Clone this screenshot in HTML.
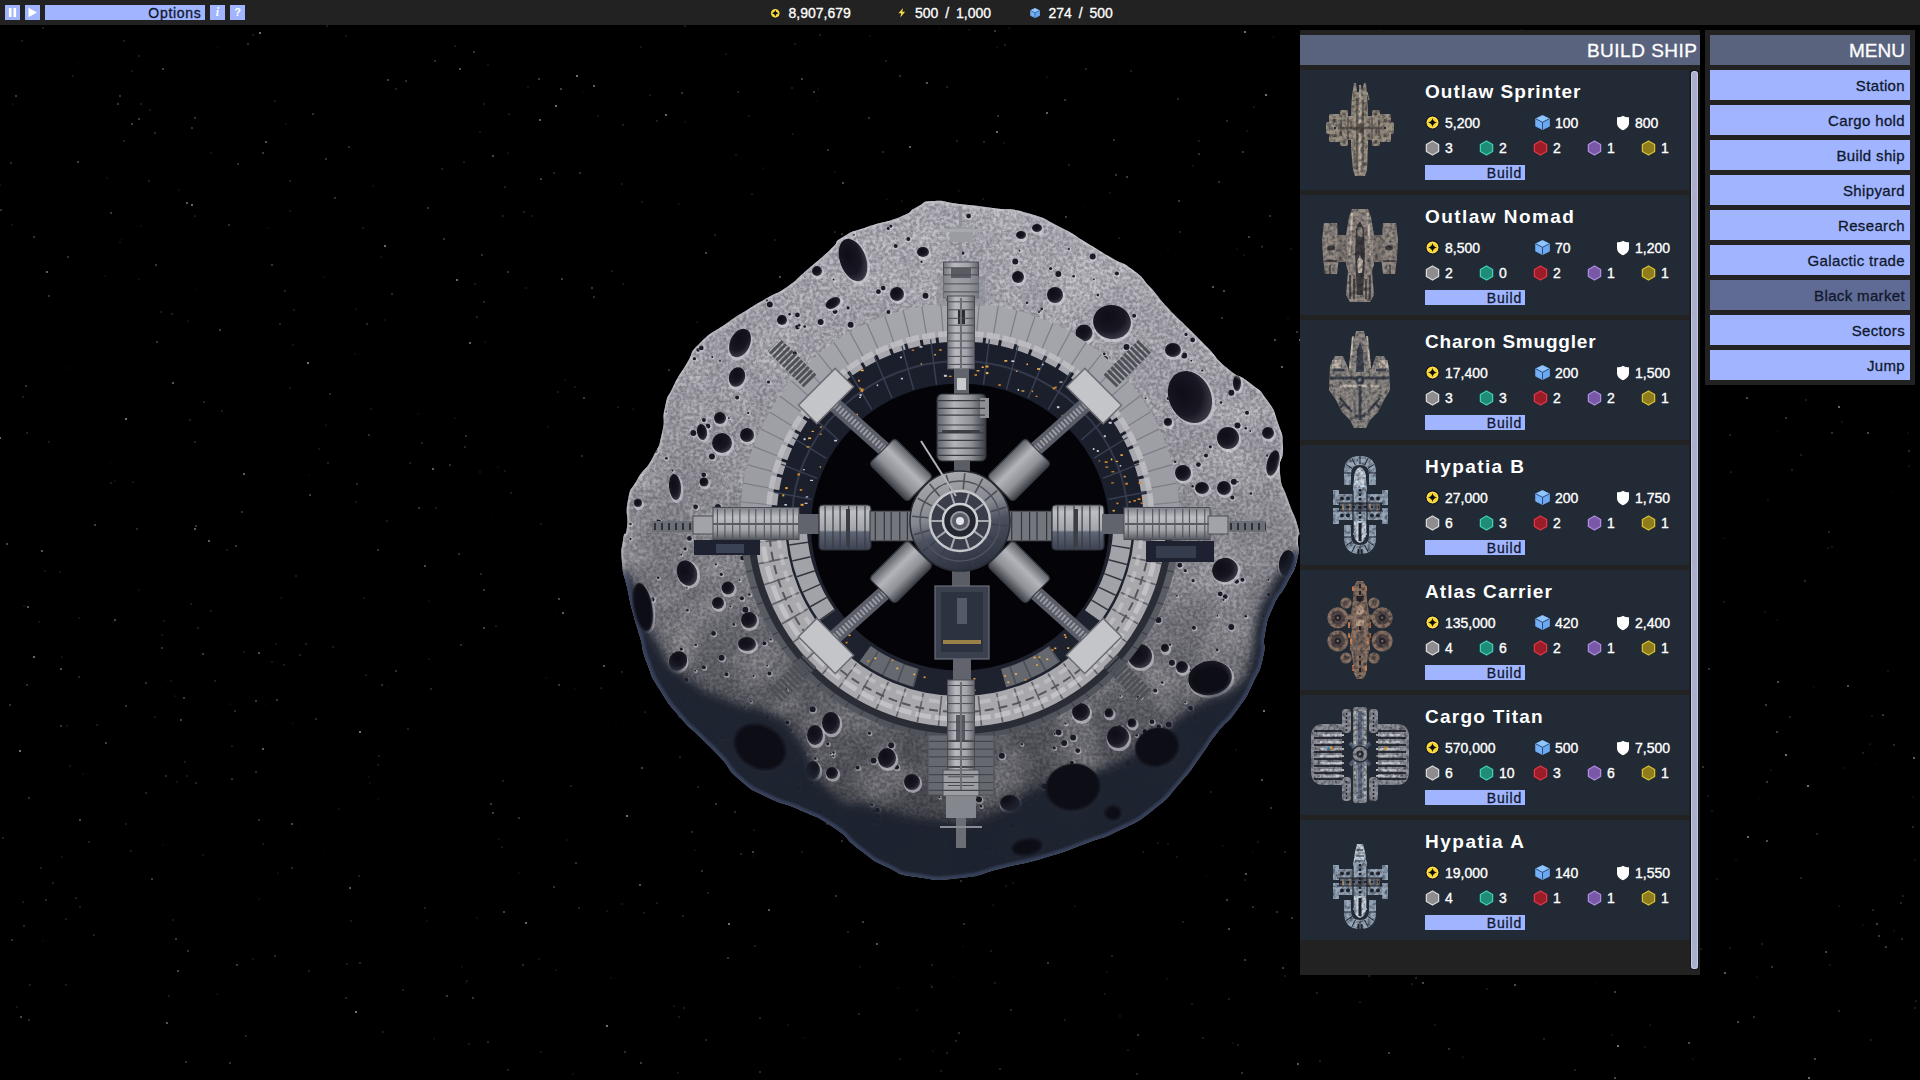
<!DOCTYPE html>
<html lang="en"><head><meta charset="utf-8"><title>Build ship</title><style>
*{box-sizing:border-box;margin:0;padding:0}
html,body{width:1920px;height:1080px;overflow:hidden;background:#000}
body{position:relative;font-family:"Liberation Sans",sans-serif;color:#fff}
#bg{position:absolute;left:0;top:0;width:1920px;height:1080px}
#top{position:absolute;left:0;top:0;width:1920px;height:25px;background:#222}
.tb{position:absolute;top:5px;height:15px;background:#a0b4ff;color:#10182c}
.res{position:absolute;top:0;height:25px;line-height:27px;font-size:14px;color:#fff;white-space:nowrap;word-spacing:3px;-webkit-text-stroke:.3px #fff}
.ico{position:absolute}
#build{position:absolute;left:1300px;top:30px;width:400px;height:945px;background:#222}
.hdr{position:absolute;top:5px;height:30px;background:#5a637e;color:#fff;font-size:19px;line-height:31px;text-align:right;padding-right:5px;white-space:nowrap;-webkit-text-stroke:.3px #fff}
.item{position:absolute;left:0;width:389px;height:120px;background:#222a35}
.item h3{position:absolute;left:125px;top:10.5px;font-size:19px;line-height:22px;font-weight:bold;letter-spacing:1px;white-space:nowrap}
.st{position:absolute;font-size:14px;line-height:16px;white-space:nowrap;-webkit-text-stroke:.35px #fff}
.bb{position:absolute;left:125px;top:95px;width:100px;height:15px;background:#a0b4ff;color:#10182c;font-size:14px;line-height:17px;letter-spacing:.8px;text-align:right;padding-right:3px;-webkit-text-stroke:.3px #10182c}
.sb{position:absolute;left:391px;top:41px;width:7px;height:898px;border-radius:3.5px;background:#aab0cc;box-shadow:inset 0 0 0 1px #c4c9e6,0 0 0 1px #141414}
#menu{position:absolute;left:1705px;top:30px;width:210px;height:355px;background:#222}
.mi{position:absolute;left:5px;width:200px;height:30px;background:#a0b4ff;color:#10182c;font-size:15px;line-height:31px;letter-spacing:.35px;text-align:right;padding-right:5px;white-space:nowrap;-webkit-text-stroke:.3px #10182c}
.mi.sel{background:#5f6a95}
</style></head><body>
<svg id="bg" width="1920" height="1080" viewBox="0 0 1920 1080"><g fill="#e6e8f0"><circle cx="622" cy="184" r="1.1" fill-opacity="0.12"/><circle cx="139" cy="590" r="0.8" fill-opacity="0.12"/><circle cx="1747" cy="252" r="0.6" fill-opacity="0.45"/><circle cx="803" cy="279" r="1.0" fill-opacity="0.45"/><circle cx="113" cy="622" r="0.7" fill-opacity="0.12"/><circle cx="1108" cy="443" r="0.7" fill-opacity="0.12"/><circle cx="1069" cy="165" r="0.9" fill-opacity="0.2"/><circle cx="1038" cy="627" r="1.0" fill-opacity="0.2"/><circle cx="198" cy="628" r="0.7" fill-opacity="0.35"/><circle cx="187" cy="776" r="1.0" fill-opacity="0.12"/><circle cx="1188" cy="549" r="1.0" fill-opacity="0.45"/><circle cx="1492" cy="516" r="0.9" fill-opacity="0.35"/><circle cx="576" cy="863" r="1.1" fill-opacity="0.25"/><circle cx="157" cy="342" r="0.9" fill-opacity="0.35"/><circle cx="1401" cy="329" r="0.6" fill-opacity="0.15"/><circle cx="983" cy="199" r="0.8" fill-opacity="0.2"/><circle cx="1792" cy="470" r="1.1" fill-opacity="0.15"/><circle cx="1468" cy="630" r="0.8" fill-opacity="0.35"/><circle cx="1335" cy="652" r="1.0" fill-opacity="0.6"/><circle cx="132" cy="124" r="0.8" fill-opacity="0.6"/><circle cx="1338" cy="94" r="1.1" fill-opacity="0.3"/><circle cx="1242" cy="1073" r="0.9" fill-opacity="0.3"/><circle cx="1376" cy="961" r="0.8" fill-opacity="0.12"/><circle cx="1806" cy="400" r="1.0" fill-opacity="0.15"/><circle cx="948" cy="255" r="0.8" fill-opacity="0.2"/><circle cx="1418" cy="445" r="0.9" fill-opacity="0.15"/><circle cx="319" cy="449" r="0.8" fill-opacity="0.2"/><circle cx="1573" cy="937" r="0.8" fill-opacity="0.45"/><circle cx="1894" cy="745" r="0.9" fill-opacity="0.25"/><circle cx="290" cy="211" r="0.7" fill-opacity="0.25"/><circle cx="23" cy="902" r="0.7" fill-opacity="0.3"/><circle cx="541" cy="179" r="1.0" fill-opacity="0.35"/><circle cx="1171" cy="361" r="0.7" fill-opacity="0.12"/><circle cx="877" cy="944" r="1.1" fill-opacity="0.45"/><circle cx="764" cy="441" r="0.9" fill-opacity="0.45"/><circle cx="120" cy="96" r="0.7" fill-opacity="0.6"/><circle cx="312" cy="384" r="0.6" fill-opacity="0.15"/><circle cx="0" cy="185" r="0.6" fill-opacity="0.35"/><circle cx="1178" cy="99" r="0.7" fill-opacity="0.45"/><circle cx="285" cy="291" r="0.8" fill-opacity="0.35"/><circle cx="910" cy="147" r="0.9" fill-opacity="0.6"/><circle cx="922" cy="354" r="0.7" fill-opacity="0.15"/><circle cx="1439" cy="806" r="0.9" fill-opacity="0.2"/><circle cx="991" cy="242" r="1.0" fill-opacity="0.35"/><circle cx="281" cy="598" r="0.6" fill-opacity="0.3"/><circle cx="1879" cy="936" r="1.1" fill-opacity="0.3"/><circle cx="995" cy="983" r="0.8" fill-opacity="0.25"/><circle cx="1023" cy="847" r="0.8" fill-opacity="0.25"/><circle cx="1177" cy="857" r="0.7" fill-opacity="0.25"/><circle cx="1571" cy="806" r="0.7" fill-opacity="0.25"/><circle cx="994" cy="400" r="0.6" fill-opacity="0.12"/><circle cx="1517" cy="523" r="0.7" fill-opacity="0.35"/><circle cx="859" cy="1014" r="0.8" fill-opacity="0.35"/><circle cx="155" cy="133" r="0.9" fill-opacity="0.25"/><circle cx="648" cy="534" r="1.0" fill-opacity="0.12"/><circle cx="921" cy="714" r="1.1" fill-opacity="0.15"/><circle cx="1603" cy="151" r="0.9" fill-opacity="0.25"/><circle cx="918" cy="213" r="1.1" fill-opacity="0.35"/><circle cx="167" cy="1023" r="1.1" fill-opacity="0.45"/><circle cx="889" cy="809" r="0.6" fill-opacity="0.2"/><circle cx="326" cy="159" r="0.7" fill-opacity="0.6"/><circle cx="1548" cy="179" r="1.0" fill-opacity="0.6"/><circle cx="1262" cy="395" r="1.0" fill-opacity="0.2"/><circle cx="41" cy="868" r="1.1" fill-opacity="0.15"/><circle cx="1011" cy="1010" r="0.9" fill-opacity="0.25"/><circle cx="1586" cy="248" r="0.8" fill-opacity="0.25"/><circle cx="562" cy="279" r="1.0" fill-opacity="0.35"/><circle cx="498" cy="467" r="0.7" fill-opacity="0.12"/><circle cx="1747" cy="398" r="0.9" fill-opacity="0.45"/><circle cx="1588" cy="951" r="0.7" fill-opacity="0.2"/><circle cx="1005" cy="45" r="0.9" fill-opacity="0.2"/><circle cx="1168" cy="844" r="0.7" fill-opacity="0.2"/><circle cx="272" cy="678" r="0.6" fill-opacity="0.12"/><circle cx="626" cy="572" r="1.0" fill-opacity="0.6"/><circle cx="1506" cy="137" r="1.0" fill-opacity="0.12"/><circle cx="477" cy="317" r="0.6" fill-opacity="0.6"/><circle cx="1079" cy="827" r="0.6" fill-opacity="0.6"/><circle cx="625" cy="1052" r="1.0" fill-opacity="0.25"/><circle cx="1330" cy="502" r="1.0" fill-opacity="0.6"/><circle cx="975" cy="286" r="1.0" fill-opacity="0.3"/><circle cx="1772" cy="967" r="0.7" fill-opacity="0.6"/><circle cx="263" cy="153" r="0.9" fill-opacity="0.35"/><circle cx="139" cy="279" r="0.6" fill-opacity="0.25"/><circle cx="1285" cy="852" r="0.7" fill-opacity="0.35"/><circle cx="275" cy="956" r="0.9" fill-opacity="0.25"/><circle cx="1434" cy="124" r="0.9" fill-opacity="0.2"/><circle cx="1901" cy="903" r="0.7" fill-opacity="0.45"/><circle cx="1909" cy="451" r="0.9" fill-opacity="0.25"/><circle cx="685" cy="122" r="0.8" fill-opacity="0.12"/><circle cx="649" cy="509" r="1.1" fill-opacity="0.12"/><circle cx="738" cy="571" r="0.8" fill-opacity="0.15"/><circle cx="217" cy="994" r="0.7" fill-opacity="0.15"/><circle cx="161" cy="312" r="0.7" fill-opacity="0.3"/><circle cx="1451" cy="890" r="1.1" fill-opacity="0.3"/><circle cx="779" cy="591" r="1.0" fill-opacity="0.6"/><circle cx="1345" cy="119" r="0.6" fill-opacity="0.2"/><circle cx="817" cy="101" r="0.6" fill-opacity="0.15"/><circle cx="1539" cy="113" r="0.7" fill-opacity="0.15"/><circle cx="508" cy="153" r="0.6" fill-opacity="0.35"/><circle cx="1909" cy="466" r="0.8" fill-opacity="0.2"/><circle cx="83" cy="774" r="0.6" fill-opacity="0.2"/><circle cx="503" cy="216" r="0.8" fill-opacity="0.3"/><circle cx="1020" cy="242" r="0.9" fill-opacity="0.2"/><circle cx="519" cy="873" r="0.8" fill-opacity="0.12"/><circle cx="29" cy="798" r="1.0" fill-opacity="0.25"/><circle cx="987" cy="284" r="0.9" fill-opacity="0.15"/><circle cx="1264" cy="711" r="1.1" fill-opacity="0.6"/><circle cx="1048" cy="963" r="1.0" fill-opacity="0.3"/><circle cx="1320" cy="1061" r="0.8" fill-opacity="0.25"/><circle cx="1598" cy="771" r="1.1" fill-opacity="0.2"/><circle cx="777" cy="392" r="0.6" fill-opacity="0.2"/><circle cx="27" cy="685" r="0.8" fill-opacity="0.45"/><circle cx="313" cy="114" r="0.9" fill-opacity="0.3"/><circle cx="1150" cy="756" r="0.6" fill-opacity="0.6"/><circle cx="356" cy="309" r="0.6" fill-opacity="0.3"/><circle cx="699" cy="372" r="1.0" fill-opacity="0.35"/><circle cx="469" cy="1044" r="0.8" fill-opacity="0.25"/><circle cx="685" cy="26" r="0.9" fill-opacity="0.15"/><circle cx="911" cy="555" r="0.7" fill-opacity="0.25"/><circle cx="969" cy="30" r="0.8" fill-opacity="0.15"/><circle cx="276" cy="644" r="0.9" fill-opacity="0.12"/><circle cx="575" cy="689" r="0.6" fill-opacity="0.2"/><circle cx="1262" cy="780" r="1.0" fill-opacity="0.45"/><circle cx="1467" cy="785" r="0.9" fill-opacity="0.2"/><circle cx="546" cy="678" r="0.7" fill-opacity="0.12"/><circle cx="1584" cy="779" r="1.0" fill-opacity="0.45"/><circle cx="1409" cy="882" r="0.7" fill-opacity="0.12"/><circle cx="1587" cy="641" r="1.1" fill-opacity="0.25"/><circle cx="163" cy="69" r="1.1" fill-opacity="0.35"/><circle cx="1842" cy="422" r="0.9" fill-opacity="0.12"/><circle cx="1205" cy="686" r="1.1" fill-opacity="0.25"/><circle cx="939" cy="28" r="0.6" fill-opacity="0.15"/><circle cx="1266" cy="95" r="1.1" fill-opacity="0.6"/><circle cx="484" cy="104" r="0.8" fill-opacity="0.25"/><circle cx="1400" cy="242" r="1.1" fill-opacity="0.6"/><circle cx="948" cy="429" r="0.9" fill-opacity="0.3"/><circle cx="1473" cy="676" r="1.1" fill-opacity="0.25"/><circle cx="149" cy="181" r="0.8" fill-opacity="0.3"/><circle cx="1193" cy="166" r="0.9" fill-opacity="0.12"/><circle cx="933" cy="1051" r="0.6" fill-opacity="0.25"/><circle cx="1297" cy="332" r="1.0" fill-opacity="0.3"/><circle cx="892" cy="517" r="0.6" fill-opacity="0.25"/><circle cx="598" cy="116" r="0.9" fill-opacity="0.12"/><circle cx="556" cy="106" r="1.0" fill-opacity="0.6"/><circle cx="1908" cy="433" r="0.7" fill-opacity="0.15"/><circle cx="1116" cy="175" r="1.0" fill-opacity="0.3"/><circle cx="1829" cy="165" r="1.1" fill-opacity="0.3"/><circle cx="1703" cy="767" r="0.7" fill-opacity="0.6"/><circle cx="1724" cy="538" r="0.6" fill-opacity="0.2"/><circle cx="7" cy="544" r="0.9" fill-opacity="0.45"/><circle cx="580" cy="173" r="0.8" fill-opacity="0.45"/><circle cx="607" cy="911" r="0.6" fill-opacity="0.35"/><circle cx="1441" cy="910" r="0.6" fill-opacity="0.25"/><circle cx="1369" cy="976" r="0.8" fill-opacity="0.3"/><circle cx="715" cy="440" r="1.0" fill-opacity="0.15"/><circle cx="693" cy="477" r="0.8" fill-opacity="0.12"/><circle cx="539" cy="79" r="1.1" fill-opacity="0.3"/><circle cx="1219" cy="182" r="0.8" fill-opacity="0.45"/><circle cx="981" cy="225" r="0.8" fill-opacity="0.45"/><circle cx="1698" cy="882" r="1.1" fill-opacity="0.45"/><circle cx="1754" cy="1017" r="1.0" fill-opacity="0.25"/><circle cx="1382" cy="77" r="1.1" fill-opacity="0.45"/><circle cx="866" cy="819" r="1.1" fill-opacity="0.3"/><circle cx="932" cy="987" r="1.0" fill-opacity="0.2"/><circle cx="328" cy="463" r="0.8" fill-opacity="0.3"/><circle cx="491" cy="804" r="1.1" fill-opacity="0.3"/><circle cx="780" cy="277" r="0.9" fill-opacity="0.45"/><circle cx="230" cy="704" r="0.6" fill-opacity="0.25"/><circle cx="961" cy="881" r="1.0" fill-opacity="0.25"/><circle cx="870" cy="376" r="0.9" fill-opacity="0.45"/><circle cx="268" cy="228" r="0.6" fill-opacity="0.2"/><circle cx="657" cy="121" r="0.7" fill-opacity="0.35"/><circle cx="496" cy="626" r="0.6" fill-opacity="0.45"/><circle cx="735" cy="812" r="0.7" fill-opacity="0.45"/><circle cx="519" cy="818" r="0.9" fill-opacity="0.3"/><circle cx="1103" cy="405" r="1.1" fill-opacity="0.25"/><circle cx="178" cy="971" r="0.9" fill-opacity="0.45"/><circle cx="1240" cy="481" r="0.8" fill-opacity="0.12"/><circle cx="244" cy="474" r="0.9" fill-opacity="0.6"/><circle cx="0" cy="438" r="1.0" fill-opacity="0.6"/><circle cx="1867" cy="287" r="0.6" fill-opacity="0.25"/><circle cx="296" cy="576" r="1.1" fill-opacity="0.15"/><circle cx="1808" cy="786" r="1.1" fill-opacity="0.6"/><circle cx="163" cy="845" r="0.6" fill-opacity="0.2"/><circle cx="447" cy="996" r="1.1" fill-opacity="0.3"/><circle cx="1848" cy="686" r="1.0" fill-opacity="0.45"/><circle cx="1341" cy="143" r="0.6" fill-opacity="0.3"/><circle cx="1007" cy="640" r="0.9" fill-opacity="0.3"/><circle cx="429" cy="659" r="0.6" fill-opacity="0.3"/><circle cx="1913" cy="319" r="0.8" fill-opacity="0.25"/><circle cx="913" cy="273" r="0.7" fill-opacity="0.12"/><circle cx="1844" cy="768" r="0.8" fill-opacity="0.12"/><circle cx="42" cy="551" r="1.1" fill-opacity="0.45"/><circle cx="156" cy="265" r="0.9" fill-opacity="0.35"/><circle cx="435" cy="61" r="0.8" fill-opacity="0.45"/><circle cx="696" cy="443" r="0.6" fill-opacity="0.3"/><circle cx="1419" cy="558" r="0.7" fill-opacity="0.6"/><circle cx="1862" cy="354" r="0.7" fill-opacity="0.25"/><circle cx="893" cy="305" r="0.8" fill-opacity="0.15"/><circle cx="1828" cy="548" r="0.7" fill-opacity="0.25"/><circle cx="931" cy="985" r="0.6" fill-opacity="0.2"/><circle cx="1770" cy="82" r="0.6" fill-opacity="0.2"/><circle cx="798" cy="774" r="0.7" fill-opacity="0.45"/><circle cx="863" cy="776" r="0.8" fill-opacity="0.15"/><circle cx="1915" cy="1008" r="0.8" fill-opacity="0.25"/><circle cx="356" cy="1012" r="1.1" fill-opacity="0.6"/><circle cx="61" cy="726" r="0.9" fill-opacity="0.35"/><circle cx="1891" cy="492" r="0.6" fill-opacity="0.12"/><circle cx="150" cy="110" r="0.9" fill-opacity="0.15"/><circle cx="1077" cy="826" r="0.9" fill-opacity="0.35"/><circle cx="1476" cy="351" r="0.9" fill-opacity="0.15"/><circle cx="95" cy="525" r="0.8" fill-opacity="0.6"/><circle cx="371" cy="409" r="0.9" fill-opacity="0.12"/><circle cx="1213" cy="287" r="1.1" fill-opacity="0.45"/><circle cx="78" cy="62" r="0.6" fill-opacity="0.12"/><circle cx="493" cy="813" r="1.0" fill-opacity="0.35"/><circle cx="697" cy="378" r="1.0" fill-opacity="0.12"/><circle cx="503" cy="781" r="0.8" fill-opacity="0.3"/><circle cx="571" cy="786" r="1.0" fill-opacity="0.15"/><circle cx="47" cy="272" r="0.9" fill-opacity="0.6"/><circle cx="1832" cy="433" r="0.8" fill-opacity="0.45"/><circle cx="1564" cy="165" r="0.9" fill-opacity="0.2"/><circle cx="17" cy="1007" r="0.8" fill-opacity="0.2"/><circle cx="1166" cy="371" r="0.8" fill-opacity="0.6"/><circle cx="695" cy="850" r="0.6" fill-opacity="0.25"/><circle cx="752" cy="194" r="0.9" fill-opacity="0.15"/><circle cx="1247" cy="533" r="1.0" fill-opacity="0.35"/><circle cx="309" cy="475" r="0.6" fill-opacity="0.15"/><circle cx="509" cy="114" r="0.6" fill-opacity="0.45"/><circle cx="957" cy="774" r="0.9" fill-opacity="0.2"/><circle cx="450" cy="465" r="1.0" fill-opacity="0.25"/><circle cx="1436" cy="919" r="1.1" fill-opacity="0.15"/><circle cx="1497" cy="335" r="0.8" fill-opacity="0.3"/><circle cx="716" cy="804" r="0.7" fill-opacity="0.6"/><circle cx="475" cy="284" r="0.7" fill-opacity="0.3"/><circle cx="1698" cy="635" r="0.8" fill-opacity="0.15"/><circle cx="760" cy="1072" r="1.0" fill-opacity="0.25"/><circle cx="1247" cy="131" r="0.9" fill-opacity="0.12"/><circle cx="196" cy="526" r="0.7" fill-opacity="0.6"/><circle cx="1756" cy="68" r="0.8" fill-opacity="0.25"/><circle cx="229" cy="225" r="1.0" fill-opacity="0.25"/><circle cx="1786" cy="418" r="0.7" fill-opacity="0.6"/><circle cx="1158" cy="843" r="1.1" fill-opacity="0.12"/><circle cx="203" cy="654" r="1.0" fill-opacity="0.35"/><circle cx="418" cy="414" r="0.7" fill-opacity="0.12"/><circle cx="392" cy="294" r="1.0" fill-opacity="0.25"/><circle cx="1564" cy="889" r="0.9" fill-opacity="0.35"/><circle cx="355" cy="354" r="0.7" fill-opacity="0.12"/><circle cx="1527" cy="603" r="0.6" fill-opacity="0.45"/><circle cx="195" cy="442" r="1.0" fill-opacity="0.2"/><circle cx="1227" cy="121" r="0.7" fill-opacity="0.45"/><circle cx="1335" cy="457" r="0.8" fill-opacity="0.3"/><circle cx="802" cy="79" r="1.1" fill-opacity="0.35"/><circle cx="795" cy="44" r="0.8" fill-opacity="0.25"/><circle cx="750" cy="452" r="0.6" fill-opacity="0.45"/><circle cx="1731" cy="472" r="0.6" fill-opacity="0.45"/><circle cx="1109" cy="410" r="0.7" fill-opacity="0.2"/><circle cx="28" cy="607" r="1.1" fill-opacity="0.45"/><circle cx="171" cy="681" r="0.8" fill-opacity="0.2"/><circle cx="280" cy="324" r="1.0" fill-opacity="0.2"/><circle cx="1777" cy="140" r="0.9" fill-opacity="0.25"/><circle cx="579" cy="908" r="0.6" fill-opacity="0.6"/><circle cx="604" cy="666" r="1.1" fill-opacity="0.45"/><circle cx="166" cy="776" r="1.1" fill-opacity="0.2"/><circle cx="1229" cy="929" r="1.0" fill-opacity="0.45"/><circle cx="1180" cy="232" r="0.9" fill-opacity="0.2"/><circle cx="1086" cy="69" r="1.0" fill-opacity="0.2"/><circle cx="736" cy="155" r="0.7" fill-opacity="0.25"/><circle cx="79" cy="618" r="1.1" fill-opacity="0.12"/><circle cx="1282" cy="367" r="0.9" fill-opacity="0.6"/><circle cx="1056" cy="687" r="0.8" fill-opacity="0.45"/><circle cx="592" cy="288" r="0.9" fill-opacity="0.35"/><circle cx="858" cy="487" r="0.6" fill-opacity="0.12"/><circle cx="1188" cy="541" r="0.7" fill-opacity="0.6"/><circle cx="1466" cy="848" r="0.9" fill-opacity="0.2"/><circle cx="1556" cy="447" r="0.6" fill-opacity="0.2"/><circle cx="688" cy="410" r="0.9" fill-opacity="0.12"/><circle cx="78" cy="162" r="1.1" fill-opacity="0.35"/><circle cx="1493" cy="565" r="0.6" fill-opacity="0.45"/><circle cx="1253" cy="852" r="0.6" fill-opacity="0.15"/><circle cx="1913" cy="797" r="0.6" fill-opacity="0.25"/><circle cx="253" cy="959" r="0.8" fill-opacity="0.2"/><circle cx="1317" cy="786" r="0.7" fill-opacity="0.15"/><circle cx="1599" cy="669" r="0.8" fill-opacity="0.2"/><circle cx="622" cy="672" r="0.9" fill-opacity="0.2"/><circle cx="488" cy="1042" r="0.9" fill-opacity="0.25"/><circle cx="1136" cy="675" r="0.7" fill-opacity="0.35"/><circle cx="715" cy="235" r="0.9" fill-opacity="0.2"/><circle cx="1222" cy="318" r="0.8" fill-opacity="0.45"/><circle cx="324" cy="853" r="0.6" fill-opacity="0.12"/><circle cx="1222" cy="405" r="0.9" fill-opacity="0.15"/><circle cx="484" cy="590" r="0.9" fill-opacity="0.35"/><circle cx="508" cy="1070" r="1.0" fill-opacity="0.2"/><circle cx="692" cy="832" r="0.9" fill-opacity="0.25"/><circle cx="339" cy="809" r="0.6" fill-opacity="0.3"/><circle cx="1574" cy="293" r="1.1" fill-opacity="0.35"/><circle cx="1407" cy="813" r="0.7" fill-opacity="0.2"/><circle cx="559" cy="685" r="0.9" fill-opacity="0.35"/><circle cx="1719" cy="164" r="0.7" fill-opacity="0.12"/><circle cx="43" cy="28" r="0.8" fill-opacity="0.3"/><circle cx="204" cy="402" r="0.7" fill-opacity="0.45"/><circle cx="1120" cy="646" r="0.7" fill-opacity="0.35"/><circle cx="1198" cy="526" r="0.7" fill-opacity="0.12"/><circle cx="1798" cy="282" r="0.7" fill-opacity="0.6"/><circle cx="184" cy="698" r="1.1" fill-opacity="0.3"/><circle cx="772" cy="304" r="0.6" fill-opacity="0.12"/><circle cx="1238" cy="618" r="0.8" fill-opacity="0.6"/><circle cx="1156" cy="571" r="0.9" fill-opacity="0.25"/><circle cx="317" cy="25" r="0.6" fill-opacity="0.12"/><circle cx="779" cy="276" r="0.6" fill-opacity="0.15"/><circle cx="24" cy="606" r="0.7" fill-opacity="0.2"/><circle cx="793" cy="572" r="1.1" fill-opacity="0.45"/><circle cx="1562" cy="209" r="0.8" fill-opacity="0.15"/><circle cx="577" cy="76" r="1.1" fill-opacity="0.6"/><circle cx="1374" cy="32" r="0.9" fill-opacity="0.6"/><circle cx="155" cy="717" r="0.7" fill-opacity="0.25"/><circle cx="1913" cy="301" r="1.1" fill-opacity="0.12"/><circle cx="237" cy="965" r="1.1" fill-opacity="0.3"/><circle cx="1366" cy="306" r="1.0" fill-opacity="0.45"/><circle cx="1317" cy="993" r="0.8" fill-opacity="0.3"/><circle cx="1233" cy="1043" r="0.7" fill-opacity="0.15"/><circle cx="1690" cy="41" r="0.8" fill-opacity="0.25"/><circle cx="1616" cy="239" r="0.7" fill-opacity="0.35"/><circle cx="369" cy="435" r="1.0" fill-opacity="0.25"/><circle cx="729" cy="924" r="1.1" fill-opacity="0.6"/><circle cx="907" cy="585" r="0.6" fill-opacity="0.12"/><circle cx="839" cy="789" r="1.0" fill-opacity="0.3"/><circle cx="1515" cy="438" r="1.0" fill-opacity="0.15"/><circle cx="1085" cy="206" r="0.6" fill-opacity="0.12"/><circle cx="215" cy="681" r="0.7" fill-opacity="0.35"/><circle cx="1877" cy="764" r="0.6" fill-opacity="0.12"/><circle cx="266" cy="704" r="0.6" fill-opacity="0.15"/><circle cx="1415" cy="94" r="1.0" fill-opacity="0.35"/><circle cx="383" cy="1032" r="1.0" fill-opacity="0.15"/><circle cx="1689" cy="822" r="1.1" fill-opacity="0.45"/><circle cx="206" cy="242" r="0.6" fill-opacity="0.12"/><circle cx="66" cy="919" r="1.1" fill-opacity="0.15"/><circle cx="1584" cy="691" r="0.8" fill-opacity="0.6"/><circle cx="192" cy="128" r="1.1" fill-opacity="0.25"/><circle cx="565" cy="380" r="0.8" fill-opacity="0.12"/><circle cx="674" cy="1006" r="0.6" fill-opacity="0.35"/><circle cx="1748" cy="837" r="1.0" fill-opacity="0.6"/><circle cx="1635" cy="677" r="0.6" fill-opacity="0.45"/><circle cx="60" cy="572" r="0.6" fill-opacity="0.35"/><circle cx="900" cy="76" r="1.0" fill-opacity="0.25"/><circle cx="1372" cy="898" r="1.0" fill-opacity="0.3"/><circle cx="327" cy="26" r="0.7" fill-opacity="0.3"/><circle cx="1463" cy="1057" r="0.6" fill-opacity="0.35"/><circle cx="942" cy="544" r="0.7" fill-opacity="0.6"/><circle cx="1138" cy="1035" r="1.0" fill-opacity="0.3"/><circle cx="1110" cy="193" r="0.7" fill-opacity="0.25"/><circle cx="957" cy="141" r="1.1" fill-opacity="0.15"/><circle cx="941" cy="1071" r="1.0" fill-opacity="0.15"/><circle cx="1206" cy="400" r="0.9" fill-opacity="0.45"/><circle cx="1712" cy="811" r="0.9" fill-opacity="0.12"/><circle cx="714" cy="345" r="0.9" fill-opacity="0.2"/><circle cx="728" cy="958" r="0.7" fill-opacity="0.6"/><circle cx="244" cy="652" r="1.1" fill-opacity="0.12"/><circle cx="669" cy="370" r="0.7" fill-opacity="0.6"/><circle cx="1271" cy="808" r="0.7" fill-opacity="0.6"/><circle cx="842" cy="841" r="1.0" fill-opacity="0.25"/><circle cx="242" cy="512" r="1.1" fill-opacity="0.25"/><circle cx="975" cy="307" r="1.1" fill-opacity="0.2"/><circle cx="1389" cy="1053" r="1.1" fill-opacity="0.35"/><circle cx="1158" cy="393" r="0.7" fill-opacity="0.35"/><circle cx="1835" cy="298" r="1.1" fill-opacity="0.15"/><circle cx="316" cy="719" r="0.7" fill-opacity="0.45"/><circle cx="290" cy="181" r="0.8" fill-opacity="0.3"/><circle cx="835" cy="232" r="1.1" fill-opacity="0.15"/><circle cx="539" cy="959" r="0.9" fill-opacity="0.12"/><circle cx="24" cy="926" r="0.9" fill-opacity="0.25"/><circle cx="961" cy="692" r="0.9" fill-opacity="0.12"/><circle cx="272" cy="662" r="0.9" fill-opacity="0.12"/><circle cx="1423" cy="983" r="0.9" fill-opacity="0.45"/><circle cx="1624" cy="730" r="1.1" fill-opacity="0.25"/><circle cx="1305" cy="702" r="0.9" fill-opacity="0.45"/><circle cx="601" cy="688" r="0.6" fill-opacity="0.45"/><circle cx="465" cy="447" r="1.1" fill-opacity="0.2"/><circle cx="480" cy="472" r="0.9" fill-opacity="0.12"/><circle cx="1193" cy="457" r="1.1" fill-opacity="0.2"/><circle cx="1717" cy="371" r="0.6" fill-opacity="0.45"/><circle cx="1597" cy="983" r="0.6" fill-opacity="0.12"/><circle cx="482" cy="255" r="1.1" fill-opacity="0.25"/><circle cx="997" cy="132" r="1.0" fill-opacity="0.6"/><circle cx="1039" cy="782" r="1.0" fill-opacity="0.12"/><circle cx="1227" cy="900" r="1.0" fill-opacity="0.35"/><circle cx="788" cy="1025" r="0.7" fill-opacity="0.2"/><circle cx="754" cy="830" r="0.6" fill-opacity="0.35"/><circle cx="1224" cy="291" r="0.9" fill-opacity="0.45"/><circle cx="118" cy="104" r="0.9" fill-opacity="0.35"/><circle cx="1114" cy="140" r="0.8" fill-opacity="0.45"/><circle cx="1805" cy="581" r="0.7" fill-opacity="0.45"/><circle cx="887" cy="199" r="0.6" fill-opacity="0.25"/><circle cx="901" cy="618" r="0.7" fill-opacity="0.2"/><circle cx="678" cy="699" r="0.9" fill-opacity="0.6"/><circle cx="1913" cy="827" r="1.1" fill-opacity="0.2"/><circle cx="1497" cy="520" r="0.7" fill-opacity="0.3"/><circle cx="1352" cy="750" r="0.9" fill-opacity="0.2"/><circle cx="925" cy="875" r="0.8" fill-opacity="0.35"/><circle cx="470" cy="343" r="0.9" fill-opacity="0.6"/><circle cx="823" cy="697" r="1.1" fill-opacity="0.35"/><circle cx="293" cy="345" r="0.9" fill-opacity="0.12"/><circle cx="164" cy="621" r="0.8" fill-opacity="0.2"/><circle cx="1019" cy="389" r="1.0" fill-opacity="0.12"/><circle cx="1262" cy="246" r="0.6" fill-opacity="0.3"/><circle cx="480" cy="132" r="0.7" fill-opacity="0.25"/><circle cx="356" cy="502" r="0.7" fill-opacity="0.25"/><circle cx="1736" cy="860" r="0.7" fill-opacity="0.15"/><circle cx="1283" cy="968" r="1.1" fill-opacity="0.3"/><circle cx="379" cy="756" r="1.0" fill-opacity="0.15"/><circle cx="1424" cy="488" r="0.6" fill-opacity="0.15"/><circle cx="508" cy="272" r="0.7" fill-opacity="0.6"/><circle cx="947" cy="87" r="0.9" fill-opacity="0.2"/><circle cx="1345" cy="285" r="0.7" fill-opacity="0.12"/><circle cx="308" cy="363" r="1.1" fill-opacity="0.6"/><circle cx="1277" cy="912" r="0.8" fill-opacity="0.45"/><circle cx="804" cy="1038" r="0.6" fill-opacity="0.2"/><circle cx="1223" cy="696" r="0.6" fill-opacity="0.12"/><circle cx="1171" cy="745" r="0.8" fill-opacity="0.15"/><circle cx="980" cy="536" r="0.7" fill-opacity="0.12"/><circle cx="410" cy="463" r="0.7" fill-opacity="0.35"/><circle cx="181" cy="720" r="0.8" fill-opacity="0.6"/><circle cx="1495" cy="610" r="0.7" fill-opacity="0.3"/><circle cx="836" cy="471" r="1.0" fill-opacity="0.12"/><circle cx="1587" cy="334" r="0.9" fill-opacity="0.45"/><circle cx="641" cy="1063" r="1.0" fill-opacity="0.35"/><circle cx="1872" cy="716" r="0.6" fill-opacity="0.35"/><circle cx="369" cy="777" r="0.7" fill-opacity="0.15"/><circle cx="1506" cy="67" r="1.1" fill-opacity="0.45"/><circle cx="1047" cy="77" r="0.8" fill-opacity="0.15"/><circle cx="12" cy="225" r="0.9" fill-opacity="0.12"/><circle cx="1515" cy="985" r="1.0" fill-opacity="0.45"/><circle cx="1184" cy="686" r="1.1" fill-opacity="0.15"/><circle cx="408" cy="729" r="0.9" fill-opacity="0.2"/><circle cx="195" cy="216" r="0.6" fill-opacity="0.45"/><circle cx="1487" cy="989" r="1.1" fill-opacity="0.12"/><circle cx="708" cy="893" r="0.8" fill-opacity="0.3"/><circle cx="1656" cy="220" r="0.6" fill-opacity="0.35"/><circle cx="39" cy="622" r="1.0" fill-opacity="0.12"/><circle cx="956" cy="576" r="0.6" fill-opacity="0.45"/><circle cx="1105" cy="994" r="0.9" fill-opacity="0.15"/><circle cx="27" cy="433" r="1.0" fill-opacity="0.2"/><circle cx="913" cy="460" r="0.6" fill-opacity="0.15"/><circle cx="1237" cy="249" r="0.7" fill-opacity="0.12"/><circle cx="820" cy="35" r="1.1" fill-opacity="0.15"/><circle cx="1894" cy="931" r="0.7" fill-opacity="0.15"/><circle cx="248" cy="44" r="1.1" fill-opacity="0.25"/><circle cx="865" cy="810" r="0.6" fill-opacity="0.35"/><circle cx="1486" cy="778" r="0.7" fill-opacity="0.15"/><circle cx="563" cy="613" r="0.9" fill-opacity="0.6"/><circle cx="1286" cy="964" r="0.6" fill-opacity="0.12"/><circle cx="22" cy="41" r="1.1" fill-opacity="0.15"/><circle cx="747" cy="355" r="1.0" fill-opacity="0.2"/><circle cx="1839" cy="906" r="1.0" fill-opacity="0.12"/><circle cx="607" cy="1026" r="1.1" fill-opacity="0.6"/><circle cx="902" cy="201" r="0.6" fill-opacity="0.35"/><circle cx="1831" cy="198" r="0.9" fill-opacity="0.6"/><circle cx="741" cy="854" r="0.8" fill-opacity="0.35"/><circle cx="561" cy="89" r="1.1" fill-opacity="0.35"/><circle cx="1670" cy="791" r="0.6" fill-opacity="0.2"/><circle cx="1154" cy="351" r="0.9" fill-opacity="0.25"/><circle cx="723" cy="747" r="1.0" fill-opacity="0.25"/><circle cx="1550" cy="324" r="0.6" fill-opacity="0.35"/><circle cx="505" cy="471" r="1.0" fill-opacity="0.12"/><circle cx="554" cy="173" r="1.0" fill-opacity="0.2"/><circle cx="526" cy="923" r="1.0" fill-opacity="0.6"/><circle cx="666" cy="115" r="1.0" fill-opacity="0.6"/><circle cx="1531" cy="236" r="1.1" fill-opacity="0.25"/><circle cx="594" cy="86" r="0.9" fill-opacity="0.6"/><circle cx="1360" cy="1002" r="1.0" fill-opacity="0.12"/><circle cx="1520" cy="510" r="0.6" fill-opacity="0.35"/><circle cx="1483" cy="271" r="1.0" fill-opacity="0.3"/><circle cx="1699" cy="576" r="0.9" fill-opacity="0.25"/><circle cx="363" cy="228" r="0.7" fill-opacity="0.3"/><circle cx="697" cy="620" r="0.9" fill-opacity="0.2"/><circle cx="473" cy="998" r="0.9" fill-opacity="0.35"/><circle cx="1663" cy="417" r="0.9" fill-opacity="0.15"/><circle cx="300" cy="655" r="0.8" fill-opacity="0.3"/><circle cx="997" cy="47" r="0.6" fill-opacity="0.25"/><circle cx="1902" cy="939" r="0.9" fill-opacity="0.25"/><circle cx="502" cy="847" r="0.9" fill-opacity="0.15"/><circle cx="1817" cy="834" r="1.0" fill-opacity="0.2"/><circle cx="488" cy="65" r="0.7" fill-opacity="0.2"/><circle cx="726" cy="54" r="0.6" fill-opacity="0.35"/><circle cx="1672" cy="508" r="0.6" fill-opacity="0.45"/><circle cx="1771" cy="770" r="0.6" fill-opacity="0.3"/><circle cx="612" cy="271" r="0.6" fill-opacity="0.45"/><circle cx="351" cy="921" r="0.8" fill-opacity="0.25"/><circle cx="1904" cy="259" r="0.6" fill-opacity="0.3"/><circle cx="1807" cy="88" r="1.0" fill-opacity="0.12"/><circle cx="1607" cy="75" r="1.0" fill-opacity="0.6"/><circle cx="107" cy="178" r="0.6" fill-opacity="0.25"/><circle cx="1300" cy="340" r="1.0" fill-opacity="0.6"/><circle cx="1455" cy="136" r="0.8" fill-opacity="0.35"/><circle cx="493" cy="156" r="0.9" fill-opacity="0.45"/><circle cx="324" cy="277" r="0.7" fill-opacity="0.12"/><circle cx="898" cy="988" r="0.6" fill-opacity="0.2"/><circle cx="1781" cy="258" r="1.0" fill-opacity="0.35"/><circle cx="1706" cy="172" r="0.9" fill-opacity="0.15"/><circle cx="1778" cy="431" r="0.6" fill-opacity="0.15"/><circle cx="868" cy="383" r="0.7" fill-opacity="0.6"/><circle cx="222" cy="411" r="0.8" fill-opacity="0.25"/><circle cx="1413" cy="215" r="0.9" fill-opacity="0.2"/><circle cx="843" cy="183" r="0.9" fill-opacity="0.45"/><circle cx="474" cy="52" r="1.0" fill-opacity="0.3"/><circle cx="642" cy="202" r="0.9" fill-opacity="0.15"/><circle cx="611" cy="978" r="0.6" fill-opacity="0.2"/><circle cx="1879" cy="85" r="1.1" fill-opacity="0.25"/><circle cx="1075" cy="906" r="0.6" fill-opacity="0.3"/><circle cx="1449" cy="1049" r="0.9" fill-opacity="0.3"/><circle cx="1916" cy="1001" r="0.6" fill-opacity="0.45"/><circle cx="556" cy="970" r="0.6" fill-opacity="0.3"/><circle cx="277" cy="700" r="0.9" fill-opacity="0.35"/><circle cx="981" cy="492" r="1.0" fill-opacity="0.3"/><circle cx="357" cy="484" r="0.9" fill-opacity="0.25"/><circle cx="532" cy="216" r="0.7" fill-opacity="0.25"/><circle cx="1366" cy="233" r="0.6" fill-opacity="0.15"/><circle cx="1708" cy="796" r="0.8" fill-opacity="0.2"/><circle cx="396" cy="671" r="1.1" fill-opacity="0.25"/><circle cx="1119" cy="238" r="0.6" fill-opacity="0.45"/><circle cx="1615" cy="992" r="1.0" fill-opacity="0.35"/><circle cx="644" cy="913" r="0.9" fill-opacity="0.15"/><circle cx="30" cy="985" r="0.9" fill-opacity="0.2"/><circle cx="1674" cy="306" r="0.7" fill-opacity="0.35"/><circle cx="70" cy="766" r="1.0" fill-opacity="0.12"/><circle cx="684" cy="1008" r="1.0" fill-opacity="0.15"/><circle cx="232" cy="779" r="0.8" fill-opacity="0.45"/><circle cx="1107" cy="972" r="0.8" fill-opacity="0.15"/><circle cx="1832" cy="547" r="1.0" fill-opacity="0.12"/><circle cx="1019" cy="592" r="0.6" fill-opacity="0.25"/><circle cx="1857" cy="261" r="0.7" fill-opacity="0.2"/><circle cx="197" cy="289" r="0.6" fill-opacity="0.12"/><circle cx="185" cy="762" r="0.7" fill-opacity="0.3"/><circle cx="34" cy="657" r="1.0" fill-opacity="0.6"/><circle cx="1004" cy="766" r="0.6" fill-opacity="0.35"/><circle cx="1669" cy="782" r="0.6" fill-opacity="0.3"/><circle cx="236" cy="546" r="1.0" fill-opacity="0.3"/><circle cx="211" cy="153" r="0.7" fill-opacity="0.25"/><circle cx="1653" cy="180" r="1.0" fill-opacity="0.6"/><circle cx="1433" cy="198" r="0.6" fill-opacity="0.45"/><circle cx="1332" cy="655" r="1.0" fill-opacity="0.12"/><circle cx="760" cy="1018" r="0.8" fill-opacity="0.35"/><circle cx="769" cy="910" r="1.1" fill-opacity="0.45"/><circle cx="1619" cy="620" r="0.8" fill-opacity="0.45"/><circle cx="1627" cy="81" r="1.0" fill-opacity="0.2"/><circle cx="1839" cy="1011" r="0.7" fill-opacity="0.45"/><circle cx="1273" cy="37" r="0.6" fill-opacity="0.2"/><circle cx="133" cy="482" r="1.0" fill-opacity="0.12"/><circle cx="433" cy="469" r="0.9" fill-opacity="0.6"/><circle cx="1216" cy="879" r="0.6" fill-opacity="0.12"/><circle cx="1662" cy="680" r="1.1" fill-opacity="0.3"/><circle cx="1206" cy="876" r="0.6" fill-opacity="0.15"/><circle cx="481" cy="574" r="0.9" fill-opacity="0.25"/><circle cx="1826" cy="328" r="0.8" fill-opacity="0.35"/><circle cx="1243" cy="152" r="1.0" fill-opacity="0.3"/><circle cx="162" cy="648" r="0.7" fill-opacity="0.6"/><circle cx="238" cy="164" r="0.8" fill-opacity="0.45"/><circle cx="1109" cy="314" r="1.1" fill-opacity="0.15"/><circle cx="1422" cy="328" r="0.9" fill-opacity="0.25"/><circle cx="1249" cy="237" r="1.1" fill-opacity="0.35"/><circle cx="885" cy="603" r="1.0" fill-opacity="0.6"/><circle cx="900" cy="353" r="0.7" fill-opacity="0.35"/><circle cx="425" cy="566" r="0.9" fill-opacity="0.45"/><circle cx="23" cy="397" r="0.7" fill-opacity="0.35"/><circle cx="1069" cy="543" r="0.8" fill-opacity="0.25"/><circle cx="567" cy="840" r="0.7" fill-opacity="0.15"/><circle cx="1163" cy="392" r="1.1" fill-opacity="0.12"/><circle cx="993" cy="905" r="0.8" fill-opacity="0.15"/><circle cx="1000" cy="1069" r="1.1" fill-opacity="0.2"/><circle cx="800" cy="730" r="0.7" fill-opacity="0.25"/><circle cx="1183" cy="922" r="1.0" fill-opacity="0.15"/><circle cx="1418" cy="809" r="0.9" fill-opacity="0.3"/><circle cx="1507" cy="773" r="1.1" fill-opacity="0.2"/><circle cx="793" cy="134" r="0.9" fill-opacity="0.15"/><circle cx="956" cy="1041" r="1.0" fill-opacity="0.2"/><circle cx="802" cy="852" r="1.0" fill-opacity="0.15"/><circle cx="729" cy="502" r="0.9" fill-opacity="0.3"/><circle cx="1388" cy="334" r="0.9" fill-opacity="0.45"/><circle cx="1245" cy="32" r="1.1" fill-opacity="0.6"/><circle cx="731" cy="342" r="1.0" fill-opacity="0.3"/><circle cx="1542" cy="485" r="0.9" fill-opacity="0.25"/><circle cx="169" cy="996" r="0.8" fill-opacity="0.25"/><circle cx="1841" cy="241" r="0.9" fill-opacity="0.12"/><circle cx="49" cy="296" r="0.9" fill-opacity="0.3"/><circle cx="1767" cy="841" r="1.0" fill-opacity="0.45"/><circle cx="994" cy="571" r="1.1" fill-opacity="0.45"/><circle cx="748" cy="402" r="1.0" fill-opacity="0.35"/><circle cx="870" cy="36" r="0.6" fill-opacity="0.25"/><circle cx="190" cy="420" r="0.9" fill-opacity="0.2"/><circle cx="1689" cy="1043" r="0.9" fill-opacity="0.45"/><circle cx="845" cy="684" r="1.0" fill-opacity="0.35"/><circle cx="1328" cy="813" r="0.6" fill-opacity="0.2"/><circle cx="696" cy="412" r="0.6" fill-opacity="0.3"/><circle cx="984" cy="142" r="0.8" fill-opacity="0.35"/><circle cx="1575" cy="1070" r="0.9" fill-opacity="0.2"/><circle cx="1006" cy="886" r="0.7" fill-opacity="0.25"/><circle cx="792" cy="88" r="1.0" fill-opacity="0.15"/><circle cx="678" cy="1073" r="1.1" fill-opacity="0.12"/><circle cx="1328" cy="36" r="0.6" fill-opacity="0.3"/><circle cx="1364" cy="608" r="0.8" fill-opacity="0.45"/><circle cx="1617" cy="643" r="1.1" fill-opacity="0.12"/><circle cx="378" cy="550" r="1.0" fill-opacity="0.3"/><circle cx="1673" cy="970" r="1.0" fill-opacity="0.2"/><circle cx="1103" cy="459" r="0.6" fill-opacity="0.2"/><circle cx="301" cy="826" r="0.6" fill-opacity="0.12"/><circle cx="192" cy="205" r="1.0" fill-opacity="0.6"/><circle cx="1580" cy="672" r="0.6" fill-opacity="0.12"/><circle cx="1314" cy="636" r="0.7" fill-opacity="0.25"/><circle cx="679" cy="204" r="0.8" fill-opacity="0.15"/><circle cx="1650" cy="1025" r="0.6" fill-opacity="0.35"/><circle cx="368" cy="683" r="0.6" fill-opacity="0.12"/><circle cx="422" cy="443" r="0.6" fill-opacity="0.6"/><circle cx="105" cy="276" r="0.7" fill-opacity="0.12"/><circle cx="306" cy="644" r="0.7" fill-opacity="0.35"/><circle cx="12" cy="940" r="0.9" fill-opacity="0.3"/><circle cx="803" cy="291" r="0.9" fill-opacity="0.15"/><circle cx="466" cy="436" r="1.1" fill-opacity="0.25"/><circle cx="794" cy="446" r="1.1" fill-opacity="0.6"/><circle cx="43" cy="941" r="0.6" fill-opacity="0.2"/><circle cx="326" cy="425" r="0.6" fill-opacity="0.3"/><circle cx="760" cy="408" r="0.8" fill-opacity="0.45"/><circle cx="645" cy="712" r="0.6" fill-opacity="0.45"/><circle cx="1586" cy="396" r="0.7" fill-opacity="0.45"/><circle cx="367" cy="324" r="0.7" fill-opacity="0.45"/><circle cx="67" cy="726" r="0.8" fill-opacity="0.2"/><circle cx="464" cy="162" r="0.7" fill-opacity="0.3"/><circle cx="1046" cy="856" r="1.0" fill-opacity="0.6"/><circle cx="897" cy="864" r="0.7" fill-opacity="0.2"/><circle cx="706" cy="253" r="0.9" fill-opacity="0.45"/><circle cx="1208" cy="638" r="0.8" fill-opacity="0.6"/><circle cx="969" cy="265" r="0.9" fill-opacity="0.2"/><circle cx="1809" cy="1078" r="1.0" fill-opacity="0.6"/><circle cx="1128" cy="413" r="0.7" fill-opacity="0.45"/><circle cx="1168" cy="249" r="0.6" fill-opacity="0.15"/><circle cx="1042" cy="310" r="0.9" fill-opacity="0.12"/><circle cx="1262" cy="624" r="0.8" fill-opacity="0.12"/><circle cx="749" cy="116" r="0.7" fill-opacity="0.25"/><circle cx="616" cy="724" r="0.6" fill-opacity="0.15"/><circle cx="1079" cy="406" r="1.0" fill-opacity="0.3"/><circle cx="370" cy="783" r="0.6" fill-opacity="0.25"/><circle cx="554" cy="887" r="0.9" fill-opacity="0.3"/><circle cx="683" cy="916" r="0.9" fill-opacity="0.2"/><circle cx="1799" cy="211" r="0.8" fill-opacity="0.35"/><circle cx="1722" cy="52" r="1.1" fill-opacity="0.6"/><circle cx="477" cy="918" r="0.8" fill-opacity="0.15"/><circle cx="349" cy="147" r="1.0" fill-opacity="0.25"/><circle cx="1368" cy="68" r="0.6" fill-opacity="0.2"/><circle cx="827" cy="824" r="0.7" fill-opacity="0.45"/><circle cx="1418" cy="608" r="1.1" fill-opacity="0.2"/><circle cx="1084" cy="265" r="0.9" fill-opacity="0.3"/><circle cx="1777" cy="732" r="1.0" fill-opacity="0.35"/><circle cx="1796" cy="143" r="1.1" fill-opacity="0.3"/><circle cx="1730" cy="948" r="1.0" fill-opacity="0.12"/><circle cx="1870" cy="744" r="0.6" fill-opacity="0.35"/><circle cx="403" cy="990" r="1.1" fill-opacity="0.15"/><circle cx="801" cy="810" r="1.1" fill-opacity="0.25"/><circle cx="540" cy="120" r="0.9" fill-opacity="0.6"/><circle cx="1786" cy="755" r="1.1" fill-opacity="0.6"/><circle cx="977" cy="739" r="0.7" fill-opacity="0.45"/><circle cx="1292" cy="918" r="0.7" fill-opacity="0.6"/><circle cx="1463" cy="71" r="1.1" fill-opacity="0.3"/><circle cx="335" cy="198" r="1.1" fill-opacity="0.25"/><circle cx="1044" cy="288" r="0.6" fill-opacity="0.2"/><circle cx="687" cy="459" r="0.7" fill-opacity="0.3"/><circle cx="263" cy="749" r="0.9" fill-opacity="0.6"/><circle cx="457" cy="280" r="1.0" fill-opacity="0.6"/><circle cx="256" cy="701" r="1.1" fill-opacity="0.3"/><circle cx="256" cy="772" r="1.0" fill-opacity="0.25"/><circle cx="640" cy="885" r="1.0" fill-opacity="0.45"/><circle cx="1460" cy="204" r="1.1" fill-opacity="0.2"/><circle cx="1149" cy="512" r="0.9" fill-opacity="0.25"/><circle cx="220" cy="330" r="0.8" fill-opacity="0.6"/><circle cx="396" cy="89" r="0.8" fill-opacity="0.3"/><circle cx="378" cy="765" r="0.9" fill-opacity="0.15"/><circle cx="310" cy="495" r="1.0" fill-opacity="0.35"/><circle cx="556" cy="613" r="0.6" fill-opacity="0.12"/><circle cx="900" cy="1059" r="0.9" fill-opacity="0.15"/><circle cx="1435" cy="375" r="1.1" fill-opacity="0.3"/><circle cx="209" cy="541" r="0.9" fill-opacity="0.6"/><circle cx="364" cy="598" r="0.6" fill-opacity="0.35"/><circle cx="1766" cy="705" r="1.1" fill-opacity="0.3"/><circle cx="1254" cy="107" r="1.1" fill-opacity="0.12"/><circle cx="49" cy="442" r="0.7" fill-opacity="0.3"/><circle cx="706" cy="1040" r="1.0" fill-opacity="0.2"/><circle cx="196" cy="783" r="0.8" fill-opacity="0.35"/><circle cx="728" cy="708" r="0.8" fill-opacity="0.35"/><circle cx="442" cy="169" r="0.8" fill-opacity="0.3"/><circle cx="460" cy="69" r="1.0" fill-opacity="0.45"/><circle cx="1738" cy="1022" r="0.9" fill-opacity="0.45"/><circle cx="959" cy="191" r="0.8" fill-opacity="0.15"/><circle cx="272" cy="265" r="0.7" fill-opacity="0.6"/><circle cx="1223" cy="448" r="0.6" fill-opacity="0.6"/><circle cx="920" cy="255" r="0.8" fill-opacity="0.12"/><circle cx="61" cy="669" r="1.0" fill-opacity="0.45"/><circle cx="275" cy="101" r="0.6" fill-opacity="0.45"/><circle cx="1710" cy="91" r="0.6" fill-opacity="0.2"/><circle cx="1736" cy="199" r="0.8" fill-opacity="0.12"/><circle cx="851" cy="619" r="0.8" fill-opacity="0.25"/><circle cx="900" cy="598" r="1.0" fill-opacity="0.6"/><circle cx="822" cy="589" r="1.1" fill-opacity="0.2"/><circle cx="1871" cy="1040" r="1.0" fill-opacity="0.15"/><circle cx="1557" cy="88" r="1.1" fill-opacity="0.35"/><circle cx="1170" cy="338" r="1.0" fill-opacity="0.45"/><circle cx="1829" cy="532" r="1.1" fill-opacity="0.2"/><circle cx="575" cy="387" r="1.1" fill-opacity="0.12"/><circle cx="1628" cy="260" r="1.1" fill-opacity="0.6"/><circle cx="1327" cy="180" r="1.0" fill-opacity="0.35"/><circle cx="1065" cy="1020" r="0.8" fill-opacity="0.25"/><circle cx="1084" cy="443" r="0.6" fill-opacity="0.25"/><circle cx="347" cy="964" r="1.0" fill-opacity="0.15"/><circle cx="425" cy="908" r="1.1" fill-opacity="0.15"/><circle cx="360" cy="732" r="1.1" fill-opacity="0.6"/><circle cx="436" cy="508" r="1.0" fill-opacity="0.15"/><circle cx="1412" cy="984" r="1.0" fill-opacity="0.15"/><circle cx="1635" cy="742" r="0.9" fill-opacity="0.2"/><circle cx="1658" cy="606" r="1.1" fill-opacity="0.15"/><circle cx="1203" cy="1038" r="1.0" fill-opacity="0.15"/><circle cx="883" cy="749" r="1.0" fill-opacity="0.2"/><circle cx="1858" cy="227" r="0.9" fill-opacity="0.15"/><circle cx="263" cy="844" r="0.6" fill-opacity="0.45"/><circle cx="455" cy="418" r="0.6" fill-opacity="0.25"/><circle cx="883" cy="152" r="0.7" fill-opacity="0.45"/><circle cx="1744" cy="118" r="0.7" fill-opacity="0.15"/><circle cx="1762" cy="944" r="0.7" fill-opacity="0.35"/><circle cx="1431" cy="385" r="1.1" fill-opacity="0.12"/><circle cx="1585" cy="154" r="0.8" fill-opacity="0.35"/><circle cx="1386" cy="71" r="1.0" fill-opacity="0.35"/><circle cx="191" cy="604" r="1.0" fill-opacity="0.15"/><circle cx="66" cy="985" r="0.7" fill-opacity="0.3"/><circle cx="680" cy="757" r="0.6" fill-opacity="0.6"/><circle cx="218" cy="47" r="0.6" fill-opacity="0.15"/><circle cx="1537" cy="220" r="1.0" fill-opacity="0.3"/><circle cx="1678" cy="731" r="0.7" fill-opacity="0.3"/><circle cx="1034" cy="752" r="0.8" fill-opacity="0.6"/><circle cx="26" cy="386" r="0.7" fill-opacity="0.6"/><circle cx="963" cy="946" r="0.6" fill-opacity="0.15"/><circle cx="350" cy="888" r="1.1" fill-opacity="0.45"/><circle cx="1618" cy="1046" r="1.1" fill-opacity="0.6"/><circle cx="755" cy="946" r="1.0" fill-opacity="0.15"/><circle cx="693" cy="582" r="0.8" fill-opacity="0.2"/><circle cx="1131" cy="71" r="0.7" fill-opacity="0.35"/><circle cx="1396" cy="375" r="0.9" fill-opacity="0.45"/><circle cx="1800" cy="357" r="0.8" fill-opacity="0.6"/><circle cx="641" cy="47" r="0.9" fill-opacity="0.12"/><circle cx="1211" cy="792" r="0.7" fill-opacity="0.3"/><circle cx="738" cy="92" r="0.8" fill-opacity="0.35"/><circle cx="1092" cy="582" r="0.7" fill-opacity="0.12"/><circle cx="1757" cy="977" r="0.6" fill-opacity="0.25"/><circle cx="1487" cy="693" r="1.1" fill-opacity="0.15"/><circle cx="697" cy="322" r="0.7" fill-opacity="0.2"/><circle cx="1308" cy="346" r="0.8" fill-opacity="0.35"/><circle cx="977" cy="695" r="0.8" fill-opacity="0.45"/><circle cx="642" cy="768" r="1.1" fill-opacity="0.35"/><circle cx="1697" cy="851" r="1.0" fill-opacity="0.35"/><circle cx="1717" cy="879" r="0.8" fill-opacity="0.2"/><circle cx="260" cy="33" r="1.1" fill-opacity="0.6"/><circle cx="778" cy="443" r="0.8" fill-opacity="0.2"/><circle cx="1127" cy="177" r="1.1" fill-opacity="0.3"/><circle cx="484" cy="628" r="1.1" fill-opacity="0.35"/><circle cx="141" cy="226" r="0.6" fill-opacity="0.2"/><circle cx="584" cy="398" r="0.9" fill-opacity="0.35"/><circle cx="1863" cy="753" r="1.1" fill-opacity="0.15"/><circle cx="1610" cy="362" r="0.7" fill-opacity="0.3"/><circle cx="1724" cy="602" r="0.7" fill-opacity="0.3"/><circle cx="455" cy="46" r="0.6" fill-opacity="0.45"/><circle cx="860" cy="967" r="0.8" fill-opacity="0.15"/><circle cx="378" cy="799" r="0.7" fill-opacity="0.12"/><circle cx="152" cy="879" r="1.0" fill-opacity="0.35"/><circle cx="1381" cy="30" r="0.8" fill-opacity="0.12"/><circle cx="1229" cy="999" r="0.7" fill-opacity="0.35"/><circle cx="627" cy="816" r="1.1" fill-opacity="0.6"/><circle cx="778" cy="741" r="0.8" fill-opacity="0.2"/><circle cx="110" cy="462" r="0.6" fill-opacity="0.15"/><circle cx="1203" cy="378" r="0.9" fill-opacity="0.45"/><circle cx="493" cy="514" r="0.6" fill-opacity="0.12"/><circle cx="1777" cy="620" r="0.8" fill-opacity="0.12"/><circle cx="797" cy="774" r="0.8" fill-opacity="0.2"/><circle cx="179" cy="190" r="0.7" fill-opacity="0.15"/><circle cx="687" cy="407" r="0.8" fill-opacity="0.2"/><circle cx="1262" cy="660" r="0.8" fill-opacity="0.25"/><circle cx="1423" cy="297" r="1.1" fill-opacity="0.6"/><circle cx="1466" cy="844" r="0.8" fill-opacity="0.6"/><circle cx="1074" cy="406" r="1.0" fill-opacity="0.3"/><circle cx="253" cy="35" r="0.9" fill-opacity="0.15"/><circle cx="1258" cy="842" r="0.8" fill-opacity="0.2"/><circle cx="1900" cy="266" r="0.6" fill-opacity="0.12"/><circle cx="1199" cy="154" r="1.0" fill-opacity="0.25"/><circle cx="1066" cy="217" r="1.0" fill-opacity="0.35"/><circle cx="1416" cy="978" r="1.1" fill-opacity="0.2"/><circle cx="1015" cy="395" r="1.1" fill-opacity="0.25"/><circle cx="848" cy="932" r="0.7" fill-opacity="0.35"/><circle cx="1730" cy="435" r="0.7" fill-opacity="0.35"/><circle cx="1516" cy="53" r="1.1" fill-opacity="0.12"/><circle cx="126" cy="706" r="0.9" fill-opacity="0.35"/><circle cx="115" cy="620" r="0.9" fill-opacity="0.45"/><circle cx="1814" cy="687" r="0.7" fill-opacity="0.12"/><circle cx="484" cy="302" r="0.9" fill-opacity="0.25"/><circle cx="444" cy="239" r="0.9" fill-opacity="0.3"/><circle cx="573" cy="1074" r="0.7" fill-opacity="0.2"/><circle cx="917" cy="1010" r="0.8" fill-opacity="0.2"/><circle cx="1580" cy="323" r="0.8" fill-opacity="0.12"/><circle cx="932" cy="965" r="0.7" fill-opacity="0.35"/><circle cx="1311" cy="655" r="0.9" fill-opacity="0.25"/><circle cx="1112" cy="956" r="0.7" fill-opacity="0.35"/><circle cx="89" cy="842" r="0.9" fill-opacity="0.2"/><circle cx="835" cy="172" r="0.8" fill-opacity="0.12"/><circle cx="1546" cy="185" r="0.6" fill-opacity="0.2"/><circle cx="1750" cy="184" r="1.1" fill-opacity="0.35"/><circle cx="187" cy="203" r="1.1" fill-opacity="0.45"/><circle cx="173" cy="383" r="1.1" fill-opacity="0.45"/><circle cx="1693" cy="1059" r="0.6" fill-opacity="0.25"/><circle cx="387" cy="687" r="0.6" fill-opacity="0.12"/><circle cx="259" cy="653" r="1.0" fill-opacity="0.45"/><circle cx="1341" cy="794" r="0.6" fill-opacity="0.35"/><circle cx="124" cy="141" r="0.9" fill-opacity="0.2"/><circle cx="1009" cy="28" r="0.7" fill-opacity="0.2"/><circle cx="1216" cy="601" r="0.6" fill-opacity="0.35"/><circle cx="1612" cy="1035" r="0.6" fill-opacity="0.35"/><circle cx="1863" cy="925" r="0.7" fill-opacity="0.15"/><circle cx="524" cy="212" r="0.8" fill-opacity="0.3"/><circle cx="132" cy="71" r="1.0" fill-opacity="0.12"/><circle cx="784" cy="612" r="0.8" fill-opacity="0.3"/><circle cx="20" cy="751" r="1.1" fill-opacity="0.6"/><circle cx="1044" cy="604" r="1.1" fill-opacity="0.45"/><circle cx="1886" cy="947" r="1.1" fill-opacity="0.3"/><circle cx="767" cy="361" r="0.9" fill-opacity="0.45"/><circle cx="1868" cy="433" r="0.9" fill-opacity="0.45"/><circle cx="1543" cy="972" r="1.1" fill-opacity="0.12"/><circle cx="459" cy="554" r="0.8" fill-opacity="0.45"/><circle cx="1903" cy="896" r="1.1" fill-opacity="0.15"/><circle cx="167" cy="680" r="0.6" fill-opacity="0.12"/><circle cx="779" cy="614" r="1.1" fill-opacity="0.6"/><circle cx="1054" cy="358" r="1.0" fill-opacity="0.12"/><circle cx="909" cy="708" r="0.9" fill-opacity="0.35"/><circle cx="1137" cy="1074" r="0.7" fill-opacity="0.45"/><circle cx="682" cy="93" r="1.0" fill-opacity="0.3"/><circle cx="1177" cy="739" r="0.8" fill-opacity="0.15"/><circle cx="1207" cy="598" r="0.7" fill-opacity="0.3"/><circle cx="504" cy="912" r="1.1" fill-opacity="0.35"/><circle cx="1002" cy="528" r="0.7" fill-opacity="0.2"/><circle cx="126" cy="824" r="0.8" fill-opacity="0.25"/><circle cx="1013" cy="883" r="0.7" fill-opacity="0.2"/><circle cx="293" cy="723" r="0.7" fill-opacity="0.12"/><circle cx="618" cy="407" r="0.9" fill-opacity="0.15"/><circle cx="787" cy="766" r="0.9" fill-opacity="0.15"/><circle cx="700" cy="724" r="1.0" fill-opacity="0.3"/><circle cx="869" cy="118" r="0.9" fill-opacity="0.3"/><circle cx="1914" cy="758" r="0.9" fill-opacity="0.6"/><circle cx="1403" cy="209" r="1.0" fill-opacity="0.2"/><circle cx="11" cy="163" r="0.9" fill-opacity="0.25"/><circle cx="1196" cy="577" r="0.9" fill-opacity="0.3"/><circle cx="34" cy="237" r="1.0" fill-opacity="0.3"/><circle cx="111" cy="213" r="1.1" fill-opacity="0.3"/><circle cx="1760" cy="295" r="0.8" fill-opacity="0.6"/><circle cx="175" cy="696" r="0.6" fill-opacity="0.25"/><circle cx="246" cy="1036" r="0.8" fill-opacity="0.35"/><circle cx="1767" cy="782" r="0.9" fill-opacity="0.35"/><circle cx="80" cy="820" r="0.9" fill-opacity="0.45"/><circle cx="1245" cy="880" r="0.8" fill-opacity="0.25"/><circle cx="740" cy="636" r="1.0" fill-opacity="0.25"/><circle cx="1877" cy="924" r="1.0" fill-opacity="0.35"/><circle cx="122" cy="239" r="0.6" fill-opacity="0.15"/><circle cx="1452" cy="425" r="1.0" fill-opacity="0.45"/><circle cx="953" cy="976" r="0.6" fill-opacity="0.15"/><circle cx="1138" cy="513" r="0.9" fill-opacity="0.45"/><circle cx="797" cy="525" r="0.6" fill-opacity="0.6"/><circle cx="763" cy="168" r="0.6" fill-opacity="0.25"/><circle cx="1422" cy="449" r="0.6" fill-opacity="0.3"/><circle cx="1063" cy="837" r="0.9" fill-opacity="0.15"/><circle cx="173" cy="920" r="1.0" fill-opacity="0.12"/><circle cx="195" cy="118" r="0.7" fill-opacity="0.6"/><circle cx="106" cy="743" r="1.1" fill-opacity="0.35"/><circle cx="927" cy="83" r="1.1" fill-opacity="0.45"/><circle cx="1620" cy="173" r="0.9" fill-opacity="0.12"/><circle cx="1674" cy="179" r="0.8" fill-opacity="0.25"/><circle cx="995" cy="31" r="1.0" fill-opacity="0.3"/><circle cx="998" cy="116" r="0.9" fill-opacity="0.3"/><circle cx="1275" cy="340" r="0.9" fill-opacity="0.45"/><circle cx="1308" cy="349" r="0.7" fill-opacity="0.45"/><circle cx="1540" cy="929" r="0.8" fill-opacity="0.3"/><circle cx="388" cy="80" r="1.0" fill-opacity="0.35"/><circle cx="1790" cy="717" r="1.1" fill-opacity="0.2"/><circle cx="702" cy="871" r="0.7" fill-opacity="0.6"/><circle cx="1765" cy="612" r="0.6" fill-opacity="0.35"/><circle cx="16" cy="96" r="1.0" fill-opacity="0.35"/><circle cx="68" cy="257" r="0.9" fill-opacity="0.3"/><circle cx="385" cy="246" r="1.0" fill-opacity="0.6"/><circle cx="780" cy="793" r="0.7" fill-opacity="0.25"/><circle cx="111" cy="483" r="1.1" fill-opacity="0.15"/><circle cx="94" cy="935" r="0.6" fill-opacity="0.6"/><circle cx="346" cy="998" r="1.0" fill-opacity="0.2"/><circle cx="957" cy="736" r="1.1" fill-opacity="0.3"/><circle cx="1540" cy="589" r="0.7" fill-opacity="0.2"/><circle cx="1493" cy="780" r="1.0" fill-opacity="0.15"/><circle cx="894" cy="238" r="0.6" fill-opacity="0.12"/><circle cx="796" cy="720" r="0.8" fill-opacity="0.6"/><circle cx="1317" cy="188" r="0.6" fill-opacity="0.2"/><circle cx="80" cy="907" r="0.8" fill-opacity="0.25"/><circle cx="1679" cy="866" r="1.1" fill-opacity="0.2"/><circle cx="594" cy="297" r="1.0" fill-opacity="0.25"/><circle cx="292" cy="868" r="0.7" fill-opacity="0.45"/><circle cx="1870" cy="371" r="0.7" fill-opacity="0.3"/><circle cx="429" cy="601" r="0.6" fill-opacity="0.25"/><circle cx="892" cy="793" r="0.9" fill-opacity="0.35"/><circle cx="1304" cy="146" r="0.8" fill-opacity="0.15"/><circle cx="1262" cy="247" r="1.1" fill-opacity="0.15"/><circle cx="558" cy="392" r="0.9" fill-opacity="0.15"/><circle cx="385" cy="320" r="0.8" fill-opacity="0.15"/><circle cx="387" cy="521" r="0.7" fill-opacity="0.3"/><circle cx="62" cy="657" r="0.6" fill-opacity="0.35"/><circle cx="373" cy="186" r="0.8" fill-opacity="0.12"/><circle cx="330" cy="394" r="0.9" fill-opacity="0.25"/><circle cx="633" cy="409" r="0.6" fill-opacity="0.3"/><circle cx="1553" cy="788" r="0.9" fill-opacity="0.15"/><circle cx="1434" cy="144" r="0.7" fill-opacity="0.45"/><circle cx="886" cy="61" r="1.0" fill-opacity="0.15"/><circle cx="793" cy="760" r="0.9" fill-opacity="0.35"/><circle cx="146" cy="793" r="1.1" fill-opacity="0.2"/><circle cx="690" cy="724" r="0.6" fill-opacity="0.35"/><circle cx="10" cy="705" r="0.9" fill-opacity="0.3"/><circle cx="286" cy="124" r="0.7" fill-opacity="0.15"/><circle cx="294" cy="310" r="1.0" fill-opacity="0.15"/><circle cx="623" cy="284" r="1.0" fill-opacity="0.12"/><circle cx="973" cy="412" r="0.7" fill-opacity="0.3"/><circle cx="775" cy="240" r="0.7" fill-opacity="0.25"/><circle cx="1395" cy="589" r="0.7" fill-opacity="0.15"/><circle cx="29" cy="1020" r="0.9" fill-opacity="0.25"/><circle cx="1323" cy="267" r="0.7" fill-opacity="0.2"/><circle cx="1615" cy="1078" r="0.9" fill-opacity="0.45"/><circle cx="1199" cy="141" r="1.0" fill-opacity="0.15"/><circle cx="162" cy="635" r="0.7" fill-opacity="0.25"/><circle cx="1143" cy="852" r="1.1" fill-opacity="0.12"/><circle cx="1577" cy="102" r="0.8" fill-opacity="0.15"/><circle cx="79" cy="677" r="1.1" fill-opacity="0.2"/><circle cx="1564" cy="386" r="0.9" fill-opacity="0.2"/><circle cx="21" cy="1017" r="0.9" fill-opacity="0.45"/><circle cx="62" cy="857" r="0.7" fill-opacity="0.2"/><circle cx="290" cy="388" r="0.7" fill-opacity="0.25"/><circle cx="381" cy="257" r="0.8" fill-opacity="0.15"/><circle cx="1915" cy="860" r="0.9" fill-opacity="0.12"/><circle cx="955" cy="847" r="0.6" fill-opacity="0.15"/><circle cx="382" cy="685" r="0.8" fill-opacity="0.45"/><circle cx="177" cy="782" r="0.8" fill-opacity="0.2"/><circle cx="1542" cy="545" r="1.1" fill-opacity="0.6"/><circle cx="259" cy="899" r="0.8" fill-opacity="0.12"/><circle cx="1430" cy="903" r="1.1" fill-opacity="0.2"/><circle cx="836" cy="896" r="1.0" fill-opacity="0.3"/><circle cx="1436" cy="651" r="1.1" fill-opacity="0.15"/><circle cx="131" cy="851" r="0.8" fill-opacity="0.25"/><circle cx="461" cy="645" r="1.0" fill-opacity="0.25"/><circle cx="1685" cy="632" r="1.1" fill-opacity="0.12"/><circle cx="753" cy="852" r="1.1" fill-opacity="0.35"/><circle cx="1585" cy="454" r="0.6" fill-opacity="0.25"/><circle cx="1253" cy="907" r="0.8" fill-opacity="0.45"/><circle cx="1522" cy="30" r="0.9" fill-opacity="0.12"/><circle cx="1826" cy="952" r="0.9" fill-opacity="0.45"/><circle cx="789" cy="341" r="0.7" fill-opacity="0.35"/><circle cx="1047" cy="113" r="0.9" fill-opacity="0.6"/><circle cx="1189" cy="333" r="0.6" fill-opacity="0.3"/><circle cx="360" cy="963" r="0.9" fill-opacity="0.25"/><circle cx="232" cy="746" r="0.6" fill-opacity="0.45"/><circle cx="1580" cy="219" r="0.8" fill-opacity="0.35"/><circle cx="1839" cy="407" r="0.7" fill-opacity="0.35"/><circle cx="1709" cy="669" r="0.9" fill-opacity="0.3"/><circle cx="959" cy="1033" r="1.0" fill-opacity="0.25"/><circle cx="1645" cy="1047" r="0.9" fill-opacity="0.12"/><circle cx="1" cy="210" r="0.7" fill-opacity="0.6"/><circle cx="1085" cy="718" r="1.1" fill-opacity="0.35"/><circle cx="1298" cy="1064" r="1.1" fill-opacity="0.45"/><circle cx="259" cy="820" r="0.8" fill-opacity="0.45"/><circle cx="146" cy="683" r="0.9" fill-opacity="0.3"/><circle cx="1839" cy="407" r="1.1" fill-opacity="0.45"/><circle cx="1801" cy="878" r="0.6" fill-opacity="0.6"/><circle cx="947" cy="755" r="0.6" fill-opacity="0.12"/><circle cx="1680" cy="962" r="0.6" fill-opacity="0.45"/><circle cx="860" cy="817" r="0.7" fill-opacity="0.6"/><circle cx="67" cy="368" r="0.7" fill-opacity="0.12"/><circle cx="1830" cy="965" r="0.7" fill-opacity="0.25"/><circle cx="1128" cy="633" r="0.6" fill-opacity="0.45"/><circle cx="333" cy="647" r="0.8" fill-opacity="0.25"/><circle cx="559" cy="599" r="0.9" fill-opacity="0.45"/><circle cx="1246" cy="874" r="1.1" fill-opacity="0.45"/><circle cx="947" cy="1053" r="0.8" fill-opacity="0.3"/><circle cx="622" cy="904" r="0.9" fill-opacity="0.12"/><circle cx="1524" cy="391" r="0.7" fill-opacity="0.25"/><circle cx="991" cy="951" r="0.7" fill-opacity="0.3"/><circle cx="1418" cy="205" r="0.8" fill-opacity="0.12"/><circle cx="1128" cy="1050" r="0.8" fill-opacity="0.2"/><circle cx="523" cy="965" r="0.9" fill-opacity="0.25"/><circle cx="1192" cy="1004" r="0.9" fill-opacity="0.15"/><circle cx="1309" cy="407" r="0.8" fill-opacity="0.45"/><circle cx="1523" cy="524" r="0.6" fill-opacity="0.25"/><circle cx="1778" cy="682" r="1.0" fill-opacity="0.45"/><circle cx="1223" cy="846" r="0.8" fill-opacity="0.12"/><circle cx="292" cy="824" r="0.9" fill-opacity="0.45"/><circle cx="1445" cy="316" r="0.8" fill-opacity="0.45"/><circle cx="1016" cy="329" r="1.1" fill-opacity="0.15"/><circle cx="499" cy="839" r="0.6" fill-opacity="0.3"/><circle cx="679" cy="1017" r="0.8" fill-opacity="0.25"/><circle cx="1701" cy="949" r="0.6" fill-opacity="0.45"/><circle cx="1602" cy="776" r="0.8" fill-opacity="0.2"/><circle cx="1238" cy="1045" r="1.1" fill-opacity="0.15"/><circle cx="1487" cy="441" r="1.1" fill-opacity="0.35"/><circle cx="768" cy="552" r="0.8" fill-opacity="0.35"/><circle cx="1661" cy="776" r="0.7" fill-opacity="0.45"/><circle cx="1285" cy="976" r="0.7" fill-opacity="0.25"/><circle cx="650" cy="95" r="0.9" fill-opacity="0.15"/><circle cx="964" cy="924" r="1.1" fill-opacity="0.25"/><circle cx="1109" cy="451" r="1.0" fill-opacity="0.3"/><circle cx="1508" cy="742" r="0.7" fill-opacity="0.2"/><circle cx="427" cy="921" r="0.7" fill-opacity="0.15"/><circle cx="1725" cy="973" r="1.1" fill-opacity="0.45"/><circle cx="1687" cy="163" r="1.1" fill-opacity="0.45"/><circle cx="1176" cy="315" r="0.6" fill-opacity="0.3"/><circle cx="1167" cy="979" r="0.8" fill-opacity="0.15"/><circle cx="691" cy="625" r="0.6" fill-opacity="0.35"/><circle cx="45" cy="571" r="0.6" fill-opacity="0.35"/><circle cx="419" cy="508" r="0.7" fill-opacity="0.6"/><circle cx="528" cy="87" r="0.9" fill-opacity="0.12"/><circle cx="76" cy="898" r="0.6" fill-opacity="0.6"/><circle cx="431" cy="689" r="0.8" fill-opacity="0.35"/><circle cx="1019" cy="268" r="1.0" fill-opacity="0.25"/><circle cx="541" cy="1052" r="1.0" fill-opacity="0.12"/><circle cx="428" cy="208" r="1.0" fill-opacity="0.3"/><circle cx="814" cy="92" r="1.1" fill-opacity="0.3"/><circle cx="1391" cy="642" r="0.9" fill-opacity="0.45"/><circle cx="983" cy="646" r="0.7" fill-opacity="0.12"/><circle cx="1544" cy="1039" r="0.8" fill-opacity="0.3"/><circle cx="137" cy="529" r="0.7" fill-opacity="0.45"/><circle cx="872" cy="745" r="1.1" fill-opacity="0.6"/><circle cx="366" cy="675" r="0.6" fill-opacity="0.45"/><circle cx="318" cy="826" r="0.6" fill-opacity="0.12"/><circle cx="842" cy="234" r="1.1" fill-opacity="0.25"/><circle cx="1485" cy="237" r="1.1" fill-opacity="0.3"/><circle cx="1435" cy="1025" r="1.1" fill-opacity="0.12"/><circle cx="120" cy="242" r="0.6" fill-opacity="0.3"/><circle cx="1071" cy="687" r="1.0" fill-opacity="0.35"/><circle cx="1904" cy="348" r="0.6" fill-opacity="0.2"/><circle cx="1327" cy="469" r="0.6" fill-opacity="0.6"/><circle cx="1484" cy="387" r="0.7" fill-opacity="0.35"/><circle cx="1493" cy="522" r="0.6" fill-opacity="0.35"/><circle cx="1526" cy="527" r="0.7" fill-opacity="0.15"/><circle cx="1014" cy="290" r="0.9" fill-opacity="0.25"/><circle cx="679" cy="717" r="0.7" fill-opacity="0.3"/><circle cx="1815" cy="1059" r="0.9" fill-opacity="0.45"/><circle cx="309" cy="971" r="0.9" fill-opacity="0.2"/><circle cx="266" cy="142" r="1.1" fill-opacity="0.45"/><circle cx="53" cy="883" r="0.6" fill-opacity="0.6"/><circle cx="1498" cy="240" r="1.0" fill-opacity="0.15"/><circle cx="1648" cy="382" r="1.0" fill-opacity="0.6"/><circle cx="930" cy="700" r="0.7" fill-opacity="0.12"/><circle cx="467" cy="981" r="0.9" fill-opacity="0.15"/><circle cx="188" cy="951" r="0.7" fill-opacity="0.6"/><circle cx="876" cy="643" r="1.1" fill-opacity="0.6"/><circle cx="1462" cy="627" r="1.1" fill-opacity="0.12"/><circle cx="1654" cy="203" r="1.1" fill-opacity="0.25"/><circle cx="1376" cy="520" r="0.9" fill-opacity="0.2"/><circle cx="227" cy="550" r="0.9" fill-opacity="0.15"/><circle cx="1343" cy="869" r="0.7" fill-opacity="0.12"/><circle cx="753" cy="856" r="0.7" fill-opacity="0.12"/><circle cx="466" cy="983" r="0.7" fill-opacity="0.12"/><circle cx="73" cy="76" r="0.7" fill-opacity="0.25"/><circle cx="1489" cy="72" r="1.0" fill-opacity="0.45"/><circle cx="505" cy="187" r="0.6" fill-opacity="0.6"/><circle cx="1454" cy="135" r="1.1" fill-opacity="0.15"/><circle cx="359" cy="876" r="0.7" fill-opacity="0.35"/><circle cx="203" cy="855" r="0.9" fill-opacity="0.12"/><circle cx="139" cy="56" r="1.1" fill-opacity="0.15"/><circle cx="965" cy="679" r="1.0" fill-opacity="0.15"/><circle cx="1355" cy="723" r="1.0" fill-opacity="0.3"/><circle cx="878" cy="733" r="1.0" fill-opacity="0.25"/><circle cx="46" cy="900" r="0.9" fill-opacity="0.25"/><circle cx="235" cy="711" r="0.7" fill-opacity="0.45"/><circle cx="1888" cy="671" r="0.6" fill-opacity="0.35"/><circle cx="1301" cy="118" r="0.7" fill-opacity="0.15"/><circle cx="172" cy="314" r="0.8" fill-opacity="0.3"/><circle cx="284" cy="665" r="0.8" fill-opacity="0.25"/><circle cx="13" cy="104" r="0.6" fill-opacity="0.25"/><circle cx="999" cy="506" r="0.9" fill-opacity="0.25"/><circle cx="1759" cy="798" r="0.6" fill-opacity="0.12"/><circle cx="1607" cy="781" r="0.6" fill-opacity="0.2"/><circle cx="1632" cy="479" r="0.6" fill-opacity="0.2"/><circle cx="1188" cy="335" r="0.8" fill-opacity="0.2"/><circle cx="485" cy="342" r="0.8" fill-opacity="0.12"/><circle cx="623" cy="125" r="0.9" fill-opacity="0.2"/><circle cx="1883" cy="715" r="0.9" fill-opacity="0.35"/><circle cx="526" cy="288" r="0.9" fill-opacity="0.12"/><circle cx="654" cy="599" r="0.8" fill-opacity="0.35"/><circle cx="3" cy="838" r="0.7" fill-opacity="0.35"/><circle cx="1526" cy="586" r="0.6" fill-opacity="0.12"/><circle cx="1585" cy="356" r="1.1" fill-opacity="0.35"/><circle cx="705" cy="592" r="0.9" fill-opacity="0.2"/><circle cx="406" cy="81" r="1.1" fill-opacity="0.25"/><circle cx="1801" cy="455" r="1.0" fill-opacity="0.15"/><circle cx="1244" cy="255" r="0.6" fill-opacity="0.3"/><circle cx="828" cy="150" r="0.7" fill-opacity="0.6"/><circle cx="1179" cy="201" r="1.1" fill-opacity="0.3"/><circle cx="1446" cy="287" r="0.8" fill-opacity="0.12"/><circle cx="176" cy="939" r="1.1" fill-opacity="0.3"/><circle cx="1187" cy="717" r="1.1" fill-opacity="0.2"/><circle cx="1260" cy="656" r="1.1" fill-opacity="0.45"/><circle cx="583" cy="92" r="0.6" fill-opacity="0.12"/><circle cx="141" cy="104" r="1.0" fill-opacity="0.15"/><circle cx="1387" cy="709" r="1.0" fill-opacity="0.3"/><circle cx="1768" cy="500" r="0.6" fill-opacity="0.3"/><circle cx="582" cy="456" r="1.1" fill-opacity="0.2"/><circle cx="854" cy="793" r="0.6" fill-opacity="0.6"/><circle cx="657" cy="903" r="0.6" fill-opacity="0.45"/><circle cx="1591" cy="264" r="0.7" fill-opacity="0.35"/><circle cx="1288" cy="318" r="0.6" fill-opacity="0.25"/><circle cx="139" cy="119" r="1.1" fill-opacity="0.3"/><circle cx="1270" cy="216" r="0.7" fill-opacity="0.6"/><circle cx="186" cy="1062" r="0.9" fill-opacity="0.3"/><circle cx="1252" cy="626" r="0.7" fill-opacity="0.12"/><circle cx="124" cy="41" r="0.7" fill-opacity="0.35"/><circle cx="698" cy="787" r="0.7" fill-opacity="0.35"/><circle cx="1513" cy="290" r="0.8" fill-opacity="0.2"/><circle cx="1004" cy="143" r="0.7" fill-opacity="0.2"/><circle cx="548" cy="427" r="0.6" fill-opacity="0.25"/><circle cx="1245" cy="960" r="0.9" fill-opacity="0.35"/><circle cx="462" cy="967" r="0.8" fill-opacity="0.12"/><circle cx="97" cy="725" r="0.8" fill-opacity="0.25"/><circle cx="541" cy="524" r="0.9" fill-opacity="0.15"/><circle cx="211" cy="611" r="0.9" fill-opacity="0.15"/><circle cx="777" cy="537" r="0.7" fill-opacity="0.25"/><circle cx="818" cy="89" r="0.7" fill-opacity="0.15"/><circle cx="511" cy="493" r="0.7" fill-opacity="0.35"/><circle cx="1065" cy="100" r="0.7" fill-opacity="0.6"/><circle cx="1429" cy="619" r="0.9" fill-opacity="0.15"/><circle cx="115" cy="481" r="0.6" fill-opacity="0.25"/><circle cx="1001" cy="564" r="0.8" fill-opacity="0.25"/><circle cx="195" cy="529" r="0.9" fill-opacity="0.6"/><circle cx="1507" cy="164" r="0.9" fill-opacity="0.35"/><circle cx="188" cy="321" r="0.8" fill-opacity="0.15"/><circle cx="230" cy="1063" r="0.9" fill-opacity="0.3"/><circle cx="346" cy="36" r="1.1" fill-opacity="0.12"/><circle cx="1236" cy="750" r="0.6" fill-opacity="0.25"/><circle cx="1483" cy="726" r="0.7" fill-opacity="0.35"/><circle cx="278" cy="873" r="0.8" fill-opacity="0.12"/><circle cx="1646" cy="413" r="1.1" fill-opacity="0.2"/><circle cx="1344" cy="42" r="0.9" fill-opacity="0.15"/><circle cx="863" cy="922" r="0.8" fill-opacity="0.6"/><circle cx="1873" cy="910" r="0.8" fill-opacity="0.35"/><circle cx="1120" cy="1016" r="0.9" fill-opacity="0.12"/><circle cx="1304" cy="38" r="0.9" fill-opacity="0.25"/><circle cx="126" cy="419" r="1.1" fill-opacity="0.6"/><circle cx="1291" cy="249" r="0.7" fill-opacity="0.25"/><circle cx="1601" cy="238" r="0.9" fill-opacity="0.3"/><circle cx="434" cy="1039" r="0.8" fill-opacity="0.12"/><circle cx="781" cy="387" r="1.1" fill-opacity="0.12"/></g><defs><clipPath id="ac"><path d="M960.0 204.0C980.0 206.3 970.7 205.0 993.0 208.0C1015.3 211.0 1004.7 206.7 1027.0 213.0C1049.3 219.3 1040.0 217.0 1060.0 227.0C1080.0 237.0 1070.3 233.0 1087.0 243.0C1103.7 253.0 1094.7 248.0 1110.0 257.0C1125.3 266.0 1119.7 260.0 1133.0 270.0C1146.3 280.0 1138.7 274.7 1150.0 287.0C1161.3 299.3 1154.7 293.7 1167.0 307.0C1179.3 320.3 1173.7 313.7 1187.0 327.0C1200.3 340.3 1193.7 333.3 1207.0 347.0C1220.3 360.7 1212.7 356.0 1227.0 368.0C1241.3 380.0 1236.7 372.3 1250.0 383.0C1263.3 393.7 1257.7 386.7 1267.0 400.0C1276.3 413.3 1272.7 407.3 1278.0 423.0C1283.3 438.7 1282.3 430.3 1283.0 447.0C1283.7 463.7 1278.3 455.3 1280.0 473.0C1281.7 490.7 1282.0 482.0 1288.0 500.0C1294.0 518.0 1294.7 513.7 1298.0 527.0C1301.3 540.3 1298.3 529.0 1298.0 540.0C1297.7 551.0 1300.7 545.7 1297.0 560.0C1293.3 574.3 1295.0 567.3 1287.0 583.0C1279.0 598.7 1280.3 590.3 1273.0 607.0C1265.7 623.7 1268.3 616.3 1265.0 633.0C1261.7 649.7 1267.0 640.3 1263.0 657.0C1259.0 673.7 1261.7 665.3 1253.0 683.0C1244.3 700.7 1249.0 693.3 1237.0 710.0C1225.0 726.7 1229.3 717.3 1217.0 733.0C1204.7 748.7 1212.3 740.3 1200.0 757.0C1187.7 773.7 1195.7 765.3 1180.0 783.0C1164.3 800.7 1173.0 794.3 1153.0 810.0C1133.0 825.7 1142.0 819.0 1120.0 830.0C1098.0 841.0 1111.3 834.0 1087.0 843.0C1062.7 852.0 1075.0 848.7 1047.0 857.0C1019.0 865.3 1032.0 861.0 1003.0 868.0C974.0 875.0 988.7 875.0 960.0 878.0C931.3 881.0 941.3 880.7 917.0 877.0C892.7 873.3 906.0 876.0 887.0 867.0C868.0 858.0 878.0 863.3 860.0 850.0C842.0 836.7 853.0 840.3 833.0 827.0C813.0 813.7 822.0 820.0 800.0 810.0C778.0 800.0 787.0 807.0 767.0 797.0C747.0 787.0 755.7 793.3 740.0 780.0C724.3 766.7 733.3 771.3 720.0 757.0C706.7 742.7 713.3 750.3 700.0 737.0C686.7 723.7 693.3 732.7 680.0 717.0C666.7 701.3 671.0 708.0 660.0 690.0C649.0 672.0 653.7 680.7 647.0 663.0C640.3 645.3 644.7 653.7 640.0 637.0C635.3 620.3 637.3 629.7 633.0 613.0C628.7 596.3 630.7 603.7 627.0 587.0C623.3 570.3 623.3 578.7 622.0 563.0C620.7 547.3 621.3 552.0 623.0 540.0C624.7 528.0 625.3 540.3 627.0 527.0C628.7 513.7 624.7 515.7 628.0 500.0C631.3 484.3 628.7 494.3 637.0 480.0C645.3 465.7 644.7 472.7 653.0 457.0C661.3 441.3 658.0 449.7 662.0 433.0C666.0 416.3 661.3 422.3 665.0 407.0C668.7 391.7 665.7 401.7 673.0 387.0C680.3 372.3 678.0 377.7 687.0 363.0C696.0 348.3 686.7 356.3 700.0 343.0C713.3 329.7 711.3 334.0 727.0 323.0C742.7 312.0 733.7 318.3 747.0 310.0C760.3 301.7 753.7 305.7 767.0 298.0C780.3 290.3 773.7 296.3 787.0 287.0C800.3 277.7 792.7 282.3 807.0 270.0C821.3 257.7 818.0 261.0 830.0 250.0C842.0 239.0 830.7 244.7 843.0 237.0C855.3 229.3 848.0 233.7 867.0 227.0C886.0 220.3 883.3 223.7 900.0 217.0C916.7 210.3 906.0 212.3 917.0 207.0C928.0 201.7 918.7 202.0 933.0 201.0C947.3 200.0 940.0 201.7 960.0 204.0Z"/></clipPath><clipPath id="shc"><path d="M600.0 560.0C608.0 564.0 610.7 558.7 624.0 572.0C637.3 585.3 629.7 577.3 640.0 600.0C650.3 622.7 638.3 613.3 655.0 640.0C671.7 666.7 665.0 660.0 690.0 680.0C715.0 700.0 701.7 688.3 730.0 700.0C758.3 711.7 751.7 701.7 775.0 715.0C798.3 728.3 781.7 715.0 800.0 740.0C818.3 765.0 803.3 767.3 830.0 790.0C856.7 812.7 843.3 798.0 880.0 808.0C916.7 818.0 905.0 817.0 940.0 820.0C975.0 823.0 950.7 828.7 985.0 817.0C1019.3 805.3 1007.0 800.0 1043.0 785.0C1079.0 770.0 1059.7 784.7 1093.0 772.0C1126.3 759.3 1109.7 768.7 1143.0 747.0C1176.3 725.3 1162.3 727.3 1193.0 707.0C1223.7 686.7 1216.0 701.7 1235.0 686.0C1254.0 670.3 1243.0 681.3 1250.0 660.0C1257.0 638.7 1250.0 644.7 1256.0 622.0C1262.0 599.3 1258.7 610.7 1268.0 592.0C1277.3 573.3 1273.3 580.0 1284.0 566.0C1294.7 552.0 1284.7 557.0 1300.0 550.0C1315.3 543.0 1320.0 546.7 1330.0 545.0L1330 900L600 900Z"/></clipPath><linearGradient id="ag" gradientUnits="userSpaceOnUse" x1="985" y1="200" x2="935" y2="880"><stop offset="0" stop-color="#bcbac4"/><stop offset=".3" stop-color="#aeacb6"/><stop offset=".45" stop-color="#9b9aa3"/><stop offset=".55" stop-color="#8a8992"/><stop offset=".65" stop-color="#76767e"/><stop offset=".8" stop-color="#5a5a63"/><stop offset="1" stop-color="#46464f"/></linearGradient><radialGradient id="hub" cx=".45" cy=".42" r=".6"><stop offset="0" stop-color="#c4c4c8"/><stop offset=".5" stop-color="#8e9096"/><stop offset="1" stop-color="#4c4f58"/></radialGradient><radialGradient id="cg" cx=".38" cy=".36" r=".8"><stop offset="0" stop-color="#0f0e17"/><stop offset=".55" stop-color="#181722"/><stop offset=".85" stop-color="#3c3b47"/><stop offset="1" stop-color="#6a6974"/></radialGradient><filter id="b5" x="-10%" y="-10%" width="120%" height="120%"><feGaussianBlur stdDeviation="4.5"/></filter><filter id="b6" x="-10%" y="-10%" width="120%" height="120%"><feGaussianBlur stdDeviation="6"/></filter><filter id="b2" x="-20%" y="-20%" width="140%" height="140%"><feGaussianBlur stdDeviation="1.2"/></filter><filter id="rock" x="0" y="0" width="100%" height="100%"><feTurbulence type="fractalNoise" baseFrequency="0.3" numOctaves="3" seed="5" result="n"/><feColorMatrix in="n" type="matrix" values="0 0 0 0 0  0 0 0 0 0  0 0 0 0 0  1.7 1.7 0 0 -1.2"/></filter><filter id="rock2" x="0" y="0" width="100%" height="100%"><feTurbulence type="fractalNoise" baseFrequency="0.02" numOctaves="3" seed="11" result="n"/><feColorMatrix in="n" type="matrix" values="0 0 0 0 1  0 0 0 0 1  0 0 0 0 1  1.8 1.8 0 0 -1.5"/></filter></defs><g clip-path="url(#ac)"><rect x="600" y="190" width="720" height="700" fill="url(#ag)"/><rect x="600" y="190" width="720" height="700" fill="#fff" opacity=".22" filter="url(#rock2)"/><rect x="600" y="190" width="720" height="700" fill="#2a2a36" opacity=".26" filter="url(#rock)"/><g><circle cx="981.6" cy="807.0" r="2.2" fill="#d8d6de" opacity=".5"/><circle cx="981.0" cy="806.3" r="1.3" fill="#1a1a26"/><circle cx="1193.4" cy="402.6" r="2.9" fill="#d8d6de" opacity=".5"/><circle cx="1192.8" cy="401.9" r="2.0" fill="#1a1a26"/><circle cx="1159.0" cy="620.6" r="3.9" fill="#d8d6de" opacity=".5"/><circle cx="1158.4" cy="619.9" r="3.0" fill="#1a1a26"/><circle cx="687.4" cy="588.1" r="2.0" fill="#d8d6de" opacity=".5"/><circle cx="686.8" cy="587.4" r="1.1" fill="#1a1a26"/><circle cx="1229.6" cy="528.5" r="3.9" fill="#d8d6de" opacity=".5"/><circle cx="1229.0" cy="527.8" r="3.0" fill="#1a1a26"/><circle cx="712.5" cy="457.3" r="3.9" fill="#d8d6de" opacity=".5"/><circle cx="711.9" cy="456.6" r="3.0" fill="#1a1a26"/><circle cx="1129.0" cy="764.7" r="3.9" fill="#d8d6de" opacity=".5"/><circle cx="1128.4" cy="764.0" r="3.0" fill="#1a1a26"/><circle cx="1192.7" cy="421.3" r="1.8" fill="#d8d6de" opacity=".5"/><circle cx="1192.1" cy="420.6" r="0.9" fill="#1a1a26"/><circle cx="855.2" cy="343.8" r="3.9" fill="#d8d6de" opacity=".5"/><circle cx="854.6" cy="343.1" r="3.0" fill="#1a1a26"/><circle cx="1172.7" cy="478.8" r="3.9" fill="#d8d6de" opacity=".5"/><circle cx="1172.1" cy="478.1" r="3.0" fill="#1a1a26"/><circle cx="1269.2" cy="595.4" r="2.5" fill="#d8d6de" opacity=".5"/><circle cx="1268.6" cy="594.7" r="1.6" fill="#1a1a26"/><circle cx="695.0" cy="359.4" r="2.5" fill="#d8d6de" opacity=".5"/><circle cx="694.4" cy="358.7" r="1.6" fill="#1a1a26"/><circle cx="888.9" cy="229.1" r="2.5" fill="#d8d6de" opacity=".5"/><circle cx="888.3" cy="228.4" r="1.6" fill="#1a1a26"/><circle cx="922.1" cy="262.6" r="2.0" fill="#d8d6de" opacity=".5"/><circle cx="921.5" cy="261.9" r="1.1" fill="#1a1a26"/><circle cx="1124.4" cy="382.8" r="2.0" fill="#d8d6de" opacity=".5"/><circle cx="1123.8" cy="382.1" r="1.1" fill="#1a1a26"/><circle cx="716.1" cy="543.4" r="3.3" fill="#d8d6de" opacity=".5"/><circle cx="715.5" cy="542.7" r="2.4" fill="#1a1a26"/><circle cx="696.3" cy="645.5" r="2.2" fill="#d8d6de" opacity=".5"/><circle cx="695.7" cy="644.8" r="1.3" fill="#1a1a26"/><circle cx="687.1" cy="680.5" r="2.9" fill="#d8d6de" opacity=".5"/><circle cx="686.5" cy="679.8" r="2.0" fill="#1a1a26"/><circle cx="793.4" cy="758.6" r="2.9" fill="#d8d6de" opacity=".5"/><circle cx="792.8" cy="757.9" r="2.0" fill="#1a1a26"/><circle cx="988.6" cy="782.8" r="1.8" fill="#d8d6de" opacity=".5"/><circle cx="988.0" cy="782.1" r="0.9" fill="#1a1a26"/><circle cx="1164.5" cy="282.7" r="3.3" fill="#d8d6de" opacity=".5"/><circle cx="1163.9" cy="282.0" r="2.4" fill="#1a1a26"/><circle cx="861.5" cy="263.0" r="2.2" fill="#d8d6de" opacity=".5"/><circle cx="860.9" cy="262.3" r="1.3" fill="#1a1a26"/><circle cx="1271.8" cy="466.8" r="2.9" fill="#d8d6de" opacity=".5"/><circle cx="1271.2" cy="466.1" r="2.0" fill="#1a1a26"/><circle cx="1191.1" cy="708.8" r="3.3" fill="#d8d6de" opacity=".5"/><circle cx="1190.5" cy="708.1" r="2.4" fill="#1a1a26"/><circle cx="1098.4" cy="295.8" r="2.2" fill="#d8d6de" opacity=".5"/><circle cx="1097.8" cy="295.1" r="1.3" fill="#1a1a26"/><circle cx="1152.5" cy="722.4" r="3.3" fill="#d8d6de" opacity=".5"/><circle cx="1151.9" cy="721.7" r="2.4" fill="#1a1a26"/><circle cx="1185.3" cy="521.6" r="3.9" fill="#d8d6de" opacity=".5"/><circle cx="1184.7" cy="520.9" r="3.0" fill="#1a1a26"/><circle cx="1251.3" cy="662.4" r="1.8" fill="#d8d6de" opacity=".5"/><circle cx="1250.7" cy="661.7" r="0.9" fill="#1a1a26"/><circle cx="878.0" cy="821.8" r="3.9" fill="#d8d6de" opacity=".5"/><circle cx="877.4" cy="821.1" r="3.0" fill="#1a1a26"/><circle cx="1169.4" cy="725.2" r="3.9" fill="#d8d6de" opacity=".5"/><circle cx="1168.8" cy="724.5" r="3.0" fill="#1a1a26"/><circle cx="1246.4" cy="617.0" r="2.2" fill="#d8d6de" opacity=".5"/><circle cx="1245.8" cy="616.3" r="1.3" fill="#1a1a26"/><circle cx="655.8" cy="436.9" r="2.2" fill="#d8d6de" opacity=".5"/><circle cx="655.2" cy="436.2" r="1.3" fill="#1a1a26"/><circle cx="631.0" cy="524.7" r="2.2" fill="#d8d6de" opacity=".5"/><circle cx="630.4" cy="524.0" r="1.3" fill="#1a1a26"/><circle cx="1187.8" cy="545.8" r="2.9" fill="#d8d6de" opacity=".5"/><circle cx="1187.2" cy="545.1" r="2.0" fill="#1a1a26"/><circle cx="1193.7" cy="581.3" r="2.5" fill="#d8d6de" opacity=".5"/><circle cx="1193.1" cy="580.6" r="1.6" fill="#1a1a26"/><circle cx="897.2" cy="767.9" r="3.3" fill="#d8d6de" opacity=".5"/><circle cx="896.6" cy="767.2" r="2.4" fill="#1a1a26"/><circle cx="1264.3" cy="617.0" r="2.2" fill="#d8d6de" opacity=".5"/><circle cx="1263.7" cy="616.3" r="1.3" fill="#1a1a26"/><circle cx="813.2" cy="709.9" r="3.9" fill="#d8d6de" opacity=".5"/><circle cx="812.6" cy="709.2" r="3.0" fill="#1a1a26"/><circle cx="767.8" cy="718.1" r="2.9" fill="#d8d6de" opacity=".5"/><circle cx="767.2" cy="717.4" r="2.0" fill="#1a1a26"/><circle cx="723.0" cy="737.9" r="3.3" fill="#d8d6de" opacity=".5"/><circle cx="722.4" cy="737.2" r="2.4" fill="#1a1a26"/><circle cx="693.9" cy="433.6" r="3.9" fill="#d8d6de" opacity=".5"/><circle cx="693.3" cy="432.9" r="3.0" fill="#1a1a26"/><circle cx="696.3" cy="524.3" r="3.3" fill="#d8d6de" opacity=".5"/><circle cx="695.7" cy="523.6" r="2.4" fill="#1a1a26"/><circle cx="891.4" cy="226.8" r="2.5" fill="#d8d6de" opacity=".5"/><circle cx="890.8" cy="226.1" r="1.6" fill="#1a1a26"/><circle cx="1232.9" cy="498.2" r="2.9" fill="#d8d6de" opacity=".5"/><circle cx="1232.3" cy="497.5" r="2.0" fill="#1a1a26"/><circle cx="798.6" cy="789.7" r="2.9" fill="#d8d6de" opacity=".5"/><circle cx="798.0" cy="789.0" r="2.0" fill="#1a1a26"/><circle cx="858.2" cy="768.1" r="2.9" fill="#d8d6de" opacity=".5"/><circle cx="857.6" cy="767.4" r="2.0" fill="#1a1a26"/><circle cx="810.9" cy="375.1" r="3.3" fill="#d8d6de" opacity=".5"/><circle cx="810.3" cy="374.4" r="2.4" fill="#1a1a26"/><circle cx="834.0" cy="753.3" r="2.2" fill="#d8d6de" opacity=".5"/><circle cx="833.4" cy="752.6" r="1.3" fill="#1a1a26"/><circle cx="769.1" cy="382.7" r="2.5" fill="#d8d6de" opacity=".5"/><circle cx="768.5" cy="382.0" r="1.6" fill="#1a1a26"/><circle cx="1180.4" cy="565.9" r="3.3" fill="#d8d6de" opacity=".5"/><circle cx="1179.8" cy="565.2" r="2.4" fill="#1a1a26"/><circle cx="1215.8" cy="569.3" r="3.3" fill="#d8d6de" opacity=".5"/><circle cx="1215.2" cy="568.6" r="2.4" fill="#1a1a26"/><circle cx="688.0" cy="610.9" r="2.2" fill="#d8d6de" opacity=".5"/><circle cx="687.4" cy="610.2" r="1.3" fill="#1a1a26"/><circle cx="1064.7" cy="743.6" r="3.9" fill="#d8d6de" opacity=".5"/><circle cx="1064.1" cy="742.9" r="3.0" fill="#1a1a26"/><circle cx="767.6" cy="739.2" r="2.2" fill="#d8d6de" opacity=".5"/><circle cx="767.0" cy="738.5" r="1.3" fill="#1a1a26"/><circle cx="1013.3" cy="319.3" r="3.9" fill="#d8d6de" opacity=".5"/><circle cx="1012.7" cy="318.6" r="3.0" fill="#1a1a26"/><circle cx="1237.1" cy="582.0" r="3.3" fill="#d8d6de" opacity=".5"/><circle cx="1236.5" cy="581.3" r="2.4" fill="#1a1a26"/><circle cx="1145.4" cy="732.0" r="3.3" fill="#d8d6de" opacity=".5"/><circle cx="1144.8" cy="731.3" r="2.4" fill="#1a1a26"/><circle cx="1041.0" cy="311.5" r="2.0" fill="#d8d6de" opacity=".5"/><circle cx="1040.4" cy="310.8" r="1.1" fill="#1a1a26"/><circle cx="834.1" cy="280.3" r="1.8" fill="#d8d6de" opacity=".5"/><circle cx="833.5" cy="279.6" r="0.9" fill="#1a1a26"/><circle cx="1162.8" cy="683.2" r="2.2" fill="#d8d6de" opacity=".5"/><circle cx="1162.2" cy="682.5" r="1.3" fill="#1a1a26"/><circle cx="851.2" cy="325.5" r="3.9" fill="#d8d6de" opacity=".5"/><circle cx="850.6" cy="324.8" r="3.0" fill="#1a1a26"/><circle cx="1104.9" cy="354.6" r="2.2" fill="#d8d6de" opacity=".5"/><circle cx="1104.3" cy="353.9" r="1.3" fill="#1a1a26"/><circle cx="948.6" cy="300.7" r="2.9" fill="#d8d6de" opacity=".5"/><circle cx="948.0" cy="300.0" r="2.0" fill="#1a1a26"/><circle cx="731.0" cy="607.1" r="1.8" fill="#d8d6de" opacity=".5"/><circle cx="730.4" cy="606.4" r="0.9" fill="#1a1a26"/><circle cx="1278.4" cy="603.1" r="2.2" fill="#d8d6de" opacity=".5"/><circle cx="1277.8" cy="602.4" r="1.3" fill="#1a1a26"/><circle cx="1069.4" cy="249.7" r="2.0" fill="#d8d6de" opacity=".5"/><circle cx="1068.8" cy="249.0" r="1.1" fill="#1a1a26"/><circle cx="1127.1" cy="347.6" r="3.9" fill="#d8d6de" opacity=".5"/><circle cx="1126.5" cy="346.9" r="3.0" fill="#1a1a26"/><circle cx="767.4" cy="301.0" r="2.2" fill="#d8d6de" opacity=".5"/><circle cx="766.8" cy="300.3" r="1.3" fill="#1a1a26"/><circle cx="737.7" cy="398.1" r="2.9" fill="#d8d6de" opacity=".5"/><circle cx="737.1" cy="397.4" r="2.0" fill="#1a1a26"/><circle cx="1027.6" cy="303.5" r="2.2" fill="#d8d6de" opacity=".5"/><circle cx="1027.0" cy="302.8" r="1.3" fill="#1a1a26"/><circle cx="795.4" cy="353.9" r="2.9" fill="#d8d6de" opacity=".5"/><circle cx="794.8" cy="353.2" r="2.0" fill="#1a1a26"/><circle cx="690.2" cy="705.0" r="2.0" fill="#d8d6de" opacity=".5"/><circle cx="689.6" cy="704.3" r="1.1" fill="#1a1a26"/><circle cx="1044.7" cy="787.0" r="3.9" fill="#d8d6de" opacity=".5"/><circle cx="1044.1" cy="786.3" r="3.0" fill="#1a1a26"/><circle cx="1200.0" cy="315.3" r="2.5" fill="#d8d6de" opacity=".5"/><circle cx="1199.4" cy="314.6" r="1.6" fill="#1a1a26"/><circle cx="654.4" cy="419.4" r="3.3" fill="#d8d6de" opacity=".5"/><circle cx="653.8" cy="418.7" r="2.4" fill="#1a1a26"/><circle cx="1013.1" cy="825.9" r="3.9" fill="#d8d6de" opacity=".5"/><circle cx="1012.5" cy="825.2" r="3.0" fill="#1a1a26"/><circle cx="967.0" cy="240.8" r="2.2" fill="#d8d6de" opacity=".5"/><circle cx="966.4" cy="240.1" r="1.3" fill="#1a1a26"/><circle cx="655.3" cy="451.1" r="3.9" fill="#d8d6de" opacity=".5"/><circle cx="654.7" cy="450.4" r="3.0" fill="#1a1a26"/><circle cx="1217.8" cy="650.6" r="2.2" fill="#d8d6de" opacity=".5"/><circle cx="1217.2" cy="649.9" r="1.3" fill="#1a1a26"/><circle cx="1137.8" cy="698.8" r="1.8" fill="#d8d6de" opacity=".5"/><circle cx="1137.2" cy="698.1" r="0.9" fill="#1a1a26"/><circle cx="1202.9" cy="371.2" r="2.0" fill="#d8d6de" opacity=".5"/><circle cx="1202.3" cy="370.5" r="1.1" fill="#1a1a26"/><circle cx="1214.1" cy="346.9" r="2.9" fill="#d8d6de" opacity=".5"/><circle cx="1213.5" cy="346.2" r="2.0" fill="#1a1a26"/><circle cx="1218.0" cy="616.5" r="1.8" fill="#d8d6de" opacity=".5"/><circle cx="1217.4" cy="615.8" r="0.9" fill="#1a1a26"/><circle cx="1078.3" cy="751.3" r="3.3" fill="#d8d6de" opacity=".5"/><circle cx="1077.7" cy="750.6" r="2.4" fill="#1a1a26"/><circle cx="1235.2" cy="569.4" r="1.8" fill="#d8d6de" opacity=".5"/><circle cx="1234.6" cy="568.7" r="0.9" fill="#1a1a26"/><circle cx="1225.3" cy="431.2" r="2.2" fill="#d8d6de" opacity=".5"/><circle cx="1224.7" cy="430.5" r="1.3" fill="#1a1a26"/><circle cx="1191.1" cy="762.7" r="2.9" fill="#d8d6de" opacity=".5"/><circle cx="1190.5" cy="762.0" r="2.0" fill="#1a1a26"/><circle cx="658.8" cy="578.4" r="2.2" fill="#d8d6de" opacity=".5"/><circle cx="658.2" cy="577.7" r="1.3" fill="#1a1a26"/><circle cx="1002.4" cy="756.4" r="3.9" fill="#d8d6de" opacity=".5"/><circle cx="1001.8" cy="755.7" r="3.0" fill="#1a1a26"/><circle cx="1138.2" cy="697.5" r="2.2" fill="#d8d6de" opacity=".5"/><circle cx="1137.6" cy="696.8" r="1.3" fill="#1a1a26"/><circle cx="1231.9" cy="393.4" r="3.9" fill="#d8d6de" opacity=".5"/><circle cx="1231.3" cy="392.7" r="3.0" fill="#1a1a26"/><circle cx="1198.7" cy="408.8" r="2.9" fill="#d8d6de" opacity=".5"/><circle cx="1198.1" cy="408.1" r="2.0" fill="#1a1a26"/><circle cx="1104.0" cy="371.3" r="2.2" fill="#d8d6de" opacity=".5"/><circle cx="1103.4" cy="370.6" r="1.3" fill="#1a1a26"/><circle cx="963.7" cy="816.0" r="2.9" fill="#d8d6de" opacity=".5"/><circle cx="963.1" cy="815.3" r="2.0" fill="#1a1a26"/><circle cx="722.1" cy="658.5" r="3.9" fill="#d8d6de" opacity=".5"/><circle cx="721.5" cy="657.8" r="3.0" fill="#1a1a26"/><circle cx="1093.3" cy="257.3" r="3.9" fill="#d8d6de" opacity=".5"/><circle cx="1092.7" cy="256.6" r="3.0" fill="#1a1a26"/><circle cx="1120.9" cy="696.5" r="1.8" fill="#d8d6de" opacity=".5"/><circle cx="1120.3" cy="695.8" r="0.9" fill="#1a1a26"/><circle cx="743.1" cy="558.8" r="3.3" fill="#d8d6de" opacity=".5"/><circle cx="742.5" cy="558.1" r="2.4" fill="#1a1a26"/><circle cx="1194.4" cy="673.4" r="2.2" fill="#d8d6de" opacity=".5"/><circle cx="1193.8" cy="672.7" r="1.3" fill="#1a1a26"/><circle cx="1083.7" cy="718.2" r="2.5" fill="#d8d6de" opacity=".5"/><circle cx="1083.1" cy="717.5" r="1.6" fill="#1a1a26"/><circle cx="790.2" cy="315.0" r="2.2" fill="#d8d6de" opacity=".5"/><circle cx="789.6" cy="314.3" r="1.3" fill="#1a1a26"/><circle cx="929.8" cy="856.3" r="2.5" fill="#d8d6de" opacity=".5"/><circle cx="929.2" cy="855.6" r="1.6" fill="#1a1a26"/><circle cx="1159.3" cy="727.4" r="3.3" fill="#d8d6de" opacity=".5"/><circle cx="1158.7" cy="726.7" r="2.4" fill="#1a1a26"/><circle cx="908.9" cy="239.7" r="2.9" fill="#d8d6de" opacity=".5"/><circle cx="908.3" cy="239.0" r="2.0" fill="#1a1a26"/><circle cx="1072.5" cy="763.4" r="2.9" fill="#d8d6de" opacity=".5"/><circle cx="1071.9" cy="762.7" r="2.0" fill="#1a1a26"/><circle cx="798.0" cy="315.6" r="3.3" fill="#d8d6de" opacity=".5"/><circle cx="797.4" cy="314.9" r="2.4" fill="#1a1a26"/><circle cx="1051.2" cy="269.2" r="2.5" fill="#d8d6de" opacity=".5"/><circle cx="1050.6" cy="268.5" r="1.6" fill="#1a1a26"/><circle cx="1231.9" cy="627.8" r="3.9" fill="#d8d6de" opacity=".5"/><circle cx="1231.3" cy="627.1" r="3.0" fill="#1a1a26"/><circle cx="883.8" cy="288.8" r="3.3" fill="#d8d6de" opacity=".5"/><circle cx="883.2" cy="288.1" r="2.4" fill="#1a1a26"/><circle cx="771.5" cy="640.2" r="2.0" fill="#d8d6de" opacity=".5"/><circle cx="770.9" cy="639.5" r="1.1" fill="#1a1a26"/><circle cx="673.1" cy="471.2" r="1.8" fill="#d8d6de" opacity=".5"/><circle cx="672.5" cy="470.5" r="0.9" fill="#1a1a26"/><circle cx="1039.5" cy="312.7" r="2.0" fill="#d8d6de" opacity=".5"/><circle cx="1038.9" cy="312.0" r="1.1" fill="#1a1a26"/><circle cx="1195.4" cy="318.7" r="2.2" fill="#d8d6de" opacity=".5"/><circle cx="1194.8" cy="318.0" r="1.3" fill="#1a1a26"/><circle cx="1234.5" cy="482.4" r="3.9" fill="#d8d6de" opacity=".5"/><circle cx="1233.9" cy="481.7" r="3.0" fill="#1a1a26"/><circle cx="940.1" cy="797.9" r="1.8" fill="#d8d6de" opacity=".5"/><circle cx="939.5" cy="797.2" r="0.9" fill="#1a1a26"/><circle cx="1238.1" cy="426.2" r="3.9" fill="#d8d6de" opacity=".5"/><circle cx="1237.5" cy="425.5" r="3.0" fill="#1a1a26"/><circle cx="1193.2" cy="340.6" r="3.3" fill="#d8d6de" opacity=".5"/><circle cx="1192.6" cy="339.9" r="2.4" fill="#1a1a26"/><circle cx="1155.8" cy="691.2" r="2.9" fill="#d8d6de" opacity=".5"/><circle cx="1155.2" cy="690.5" r="2.0" fill="#1a1a26"/><circle cx="1185.9" cy="702.9" r="1.8" fill="#d8d6de" opacity=".5"/><circle cx="1185.3" cy="702.2" r="0.9" fill="#1a1a26"/><circle cx="721.8" cy="575.0" r="2.5" fill="#d8d6de" opacity=".5"/><circle cx="721.2" cy="574.3" r="1.6" fill="#1a1a26"/><circle cx="1177.5" cy="596.5" r="1.8" fill="#d8d6de" opacity=".5"/><circle cx="1176.9" cy="595.8" r="0.9" fill="#1a1a26"/><circle cx="821.2" cy="322.7" r="3.9" fill="#d8d6de" opacity=".5"/><circle cx="820.6" cy="322.0" r="3.0" fill="#1a1a26"/><circle cx="1269.0" cy="580.6" r="1.8" fill="#d8d6de" opacity=".5"/><circle cx="1268.4" cy="579.9" r="0.9" fill="#1a1a26"/><circle cx="1185.9" cy="571.3" r="2.5" fill="#d8d6de" opacity=".5"/><circle cx="1185.3" cy="570.6" r="1.6" fill="#1a1a26"/><circle cx="1127.9" cy="263.2" r="2.9" fill="#d8d6de" opacity=".5"/><circle cx="1127.3" cy="262.5" r="2.0" fill="#1a1a26"/><circle cx="891.8" cy="745.9" r="3.9" fill="#d8d6de" opacity=".5"/><circle cx="891.2" cy="745.2" r="3.0" fill="#1a1a26"/><circle cx="706.5" cy="430.5" r="2.0" fill="#d8d6de" opacity=".5"/><circle cx="705.9" cy="429.8" r="1.1" fill="#1a1a26"/><circle cx="1196.5" cy="719.1" r="2.9" fill="#d8d6de" opacity=".5"/><circle cx="1195.9" cy="718.4" r="2.0" fill="#1a1a26"/><circle cx="1194.5" cy="628.4" r="2.9" fill="#d8d6de" opacity=".5"/><circle cx="1193.9" cy="627.7" r="2.0" fill="#1a1a26"/><circle cx="1055.4" cy="734.5" r="2.0" fill="#d8d6de" opacity=".5"/><circle cx="1054.8" cy="733.8" r="1.1" fill="#1a1a26"/><circle cx="798.1" cy="327.8" r="3.3" fill="#d8d6de" opacity=".5"/><circle cx="797.5" cy="327.1" r="2.4" fill="#1a1a26"/><circle cx="966.4" cy="280.7" r="2.2" fill="#d8d6de" opacity=".5"/><circle cx="965.8" cy="280.0" r="1.3" fill="#1a1a26"/><circle cx="698.7" cy="350.5" r="2.9" fill="#d8d6de" opacity=".5"/><circle cx="698.1" cy="349.8" r="2.0" fill="#1a1a26"/><circle cx="765.0" cy="643.9" r="2.9" fill="#d8d6de" opacity=".5"/><circle cx="764.4" cy="643.2" r="2.0" fill="#1a1a26"/><circle cx="990.4" cy="849.8" r="3.9" fill="#d8d6de" opacity=".5"/><circle cx="989.8" cy="849.1" r="3.0" fill="#1a1a26"/><circle cx="956.8" cy="306.9" r="3.3" fill="#d8d6de" opacity=".5"/><circle cx="956.2" cy="306.2" r="2.4" fill="#1a1a26"/><circle cx="704.5" cy="420.7" r="2.9" fill="#d8d6de" opacity=".5"/><circle cx="703.9" cy="420.0" r="2.0" fill="#1a1a26"/><circle cx="868.8" cy="325.9" r="2.5" fill="#d8d6de" opacity=".5"/><circle cx="868.2" cy="325.2" r="1.6" fill="#1a1a26"/><circle cx="1146.2" cy="399.0" r="1.8" fill="#d8d6de" opacity=".5"/><circle cx="1145.6" cy="398.3" r="0.9" fill="#1a1a26"/><circle cx="690.0" cy="539.1" r="3.3" fill="#d8d6de" opacity=".5"/><circle cx="689.4" cy="538.4" r="2.4" fill="#1a1a26"/><circle cx="696.2" cy="507.5" r="3.3" fill="#d8d6de" opacity=".5"/><circle cx="695.6" cy="506.8" r="2.4" fill="#1a1a26"/><circle cx="1105.5" cy="359.8" r="3.9" fill="#d8d6de" opacity=".5"/><circle cx="1104.9" cy="359.1" r="3.0" fill="#1a1a26"/><circle cx="1049.2" cy="798.4" r="2.2" fill="#d8d6de" opacity=".5"/><circle cx="1048.6" cy="797.7" r="1.3" fill="#1a1a26"/><circle cx="1247.6" cy="413.5" r="2.9" fill="#d8d6de" opacity=".5"/><circle cx="1247.0" cy="412.8" r="2.0" fill="#1a1a26"/><circle cx="1199.0" cy="465.3" r="3.3" fill="#d8d6de" opacity=".5"/><circle cx="1198.4" cy="464.6" r="2.4" fill="#1a1a26"/><circle cx="1134.7" cy="316.5" r="2.9" fill="#d8d6de" opacity=".5"/><circle cx="1134.1" cy="315.8" r="2.0" fill="#1a1a26"/><circle cx="748.8" cy="413.6" r="2.0" fill="#d8d6de" opacity=".5"/><circle cx="748.2" cy="412.9" r="1.1" fill="#1a1a26"/><circle cx="874.1" cy="761.2" r="3.9" fill="#d8d6de" opacity=".5"/><circle cx="873.5" cy="760.5" r="3.0" fill="#1a1a26"/><circle cx="786.7" cy="690.3" r="2.2" fill="#d8d6de" opacity=".5"/><circle cx="786.1" cy="689.6" r="1.3" fill="#1a1a26"/><circle cx="979.6" cy="800.1" r="3.9" fill="#d8d6de" opacity=".5"/><circle cx="979.0" cy="799.4" r="3.0" fill="#1a1a26"/><circle cx="1164.5" cy="788.7" r="2.5" fill="#d8d6de" opacity=".5"/><circle cx="1163.9" cy="788.0" r="1.6" fill="#1a1a26"/><circle cx="889.0" cy="312.6" r="2.9" fill="#d8d6de" opacity=".5"/><circle cx="888.4" cy="311.9" r="2.0" fill="#1a1a26"/><circle cx="1117.5" cy="274.3" r="2.9" fill="#d8d6de" opacity=".5"/><circle cx="1116.9" cy="273.6" r="2.0" fill="#1a1a26"/><circle cx="1284.8" cy="591.7" r="1.8" fill="#d8d6de" opacity=".5"/><circle cx="1284.2" cy="591.0" r="0.9" fill="#1a1a26"/><circle cx="1122.7" cy="335.2" r="3.3" fill="#d8d6de" opacity=".5"/><circle cx="1122.1" cy="334.5" r="2.4" fill="#1a1a26"/><circle cx="1122.9" cy="389.8" r="2.0" fill="#d8d6de" opacity=".5"/><circle cx="1122.3" cy="389.1" r="1.1" fill="#1a1a26"/><circle cx="1184.8" cy="356.2" r="3.9" fill="#d8d6de" opacity=".5"/><circle cx="1184.2" cy="355.5" r="3.0" fill="#1a1a26"/><circle cx="813.6" cy="251.4" r="3.9" fill="#d8d6de" opacity=".5"/><circle cx="813.0" cy="250.7" r="3.0" fill="#1a1a26"/><circle cx="952.3" cy="846.6" r="3.9" fill="#d8d6de" opacity=".5"/><circle cx="951.7" cy="845.9" r="3.0" fill="#1a1a26"/><circle cx="947.8" cy="767.2" r="3.3" fill="#d8d6de" opacity=".5"/><circle cx="947.2" cy="766.5" r="2.4" fill="#1a1a26"/><circle cx="861.2" cy="344.2" r="2.2" fill="#d8d6de" opacity=".5"/><circle cx="860.6" cy="343.5" r="1.3" fill="#1a1a26"/><circle cx="1067.0" cy="724.6" r="2.0" fill="#d8d6de" opacity=".5"/><circle cx="1066.4" cy="723.9" r="1.1" fill="#1a1a26"/><circle cx="695.8" cy="671.4" r="1.8" fill="#d8d6de" opacity=".5"/><circle cx="695.2" cy="670.7" r="0.9" fill="#1a1a26"/><circle cx="1141.6" cy="698.1" r="2.2" fill="#d8d6de" opacity=".5"/><circle cx="1141.0" cy="697.4" r="1.3" fill="#1a1a26"/><circle cx="1220.8" cy="594.6" r="3.3" fill="#d8d6de" opacity=".5"/><circle cx="1220.2" cy="593.9" r="2.4" fill="#1a1a26"/><circle cx="863.2" cy="347.0" r="2.2" fill="#d8d6de" opacity=".5"/><circle cx="862.6" cy="346.3" r="1.3" fill="#1a1a26"/><circle cx="833.9" cy="756.7" r="1.8" fill="#d8d6de" opacity=".5"/><circle cx="833.3" cy="756.0" r="0.9" fill="#1a1a26"/><circle cx="1030.6" cy="803.7" r="2.5" fill="#d8d6de" opacity=".5"/><circle cx="1030.0" cy="803.0" r="1.6" fill="#1a1a26"/><circle cx="745.7" cy="707.9" r="1.8" fill="#d8d6de" opacity=".5"/><circle cx="745.1" cy="707.2" r="0.9" fill="#1a1a26"/><circle cx="1126.9" cy="389.0" r="2.5" fill="#d8d6de" opacity=".5"/><circle cx="1126.3" cy="388.3" r="1.6" fill="#1a1a26"/><circle cx="1201.6" cy="737.5" r="2.2" fill="#d8d6de" opacity=".5"/><circle cx="1201.0" cy="736.8" r="1.3" fill="#1a1a26"/><circle cx="1225.8" cy="716.9" r="2.2" fill="#d8d6de" opacity=".5"/><circle cx="1225.2" cy="716.2" r="1.3" fill="#1a1a26"/><circle cx="848.7" cy="308.6" r="2.5" fill="#d8d6de" opacity=".5"/><circle cx="848.1" cy="307.9" r="1.6" fill="#1a1a26"/><circle cx="878.0" cy="810.9" r="3.3" fill="#d8d6de" opacity=".5"/><circle cx="877.4" cy="810.2" r="2.4" fill="#1a1a26"/><circle cx="1250.8" cy="431.7" r="1.8" fill="#d8d6de" opacity=".5"/><circle cx="1250.2" cy="431.0" r="0.9" fill="#1a1a26"/><circle cx="969.2" cy="216.8" r="3.3" fill="#d8d6de" opacity=".5"/><circle cx="968.6" cy="216.1" r="2.4" fill="#1a1a26"/><circle cx="708.5" cy="426.9" r="3.3" fill="#d8d6de" opacity=".5"/><circle cx="707.9" cy="426.2" r="2.4" fill="#1a1a26"/><circle cx="705.3" cy="545.3" r="3.3" fill="#d8d6de" opacity=".5"/><circle cx="704.7" cy="544.6" r="2.4" fill="#1a1a26"/><circle cx="878.3" cy="817.1" r="3.3" fill="#d8d6de" opacity=".5"/><circle cx="877.7" cy="816.4" r="2.4" fill="#1a1a26"/><circle cx="1080.5" cy="793.7" r="3.3" fill="#d8d6de" opacity=".5"/><circle cx="1079.9" cy="793.0" r="2.4" fill="#1a1a26"/><circle cx="1112.6" cy="739.5" r="3.3" fill="#d8d6de" opacity=".5"/><circle cx="1112.0" cy="738.8" r="2.4" fill="#1a1a26"/><circle cx="742.5" cy="598.9" r="2.9" fill="#d8d6de" opacity=".5"/><circle cx="741.9" cy="598.2" r="2.0" fill="#1a1a26"/><circle cx="1120.2" cy="728.2" r="3.3" fill="#d8d6de" opacity=".5"/><circle cx="1119.6" cy="727.5" r="2.4" fill="#1a1a26"/><circle cx="805.3" cy="327.3" r="2.2" fill="#d8d6de" opacity=".5"/><circle cx="804.7" cy="326.6" r="1.3" fill="#1a1a26"/><circle cx="799.9" cy="326.0" r="2.2" fill="#d8d6de" opacity=".5"/><circle cx="799.3" cy="325.3" r="1.3" fill="#1a1a26"/><circle cx="1020.1" cy="251.4" r="1.8" fill="#d8d6de" opacity=".5"/><circle cx="1019.5" cy="250.7" r="0.9" fill="#1a1a26"/><circle cx="896.3" cy="246.8" r="2.9" fill="#d8d6de" opacity=".5"/><circle cx="895.7" cy="246.1" r="2.0" fill="#1a1a26"/><circle cx="729.5" cy="418.8" r="1.8" fill="#d8d6de" opacity=".5"/><circle cx="728.9" cy="418.1" r="0.9" fill="#1a1a26"/><circle cx="934.8" cy="788.3" r="3.9" fill="#d8d6de" opacity=".5"/><circle cx="934.2" cy="787.6" r="3.0" fill="#1a1a26"/><circle cx="1137.2" cy="735.9" r="2.2" fill="#d8d6de" opacity=".5"/><circle cx="1136.6" cy="735.2" r="1.3" fill="#1a1a26"/><circle cx="965.9" cy="833.0" r="2.2" fill="#d8d6de" opacity=".5"/><circle cx="965.3" cy="832.3" r="1.3" fill="#1a1a26"/><circle cx="1189.8" cy="311.8" r="2.5" fill="#d8d6de" opacity=".5"/><circle cx="1189.2" cy="311.1" r="1.6" fill="#1a1a26"/><circle cx="667.1" cy="459.0" r="2.2" fill="#d8d6de" opacity=".5"/><circle cx="666.5" cy="458.3" r="1.3" fill="#1a1a26"/><circle cx="631.1" cy="539.7" r="2.0" fill="#d8d6de" opacity=".5"/><circle cx="630.5" cy="539.0" r="1.1" fill="#1a1a26"/><circle cx="931.5" cy="755.8" r="1.8" fill="#d8d6de" opacity=".5"/><circle cx="930.9" cy="755.1" r="0.9" fill="#1a1a26"/><circle cx="666.7" cy="412.5" r="1.8" fill="#d8d6de" opacity=".5"/><circle cx="666.1" cy="411.8" r="0.9" fill="#1a1a26"/><circle cx="1054.8" cy="748.5" r="2.5" fill="#d8d6de" opacity=".5"/><circle cx="1054.2" cy="747.8" r="1.6" fill="#1a1a26"/><circle cx="835.6" cy="312.3" r="3.3" fill="#d8d6de" opacity=".5"/><circle cx="835.0" cy="311.6" r="2.4" fill="#1a1a26"/><circle cx="1157.6" cy="737.4" r="3.9" fill="#d8d6de" opacity=".5"/><circle cx="1157.0" cy="736.7" r="3.0" fill="#1a1a26"/><circle cx="770.0" cy="674.2" r="2.9" fill="#d8d6de" opacity=".5"/><circle cx="769.4" cy="673.5" r="2.0" fill="#1a1a26"/><circle cx="1073.7" cy="738.2" r="3.9" fill="#d8d6de" opacity=".5"/><circle cx="1073.1" cy="737.5" r="3.0" fill="#1a1a26"/><circle cx="960.3" cy="834.5" r="1.8" fill="#d8d6de" opacity=".5"/><circle cx="959.7" cy="833.8" r="0.9" fill="#1a1a26"/><circle cx="1106.4" cy="317.5" r="2.5" fill="#d8d6de" opacity=".5"/><circle cx="1105.8" cy="316.8" r="1.6" fill="#1a1a26"/><circle cx="1206.6" cy="456.2" r="2.9" fill="#d8d6de" opacity=".5"/><circle cx="1206.0" cy="455.5" r="2.0" fill="#1a1a26"/><circle cx="1168.9" cy="399.1" r="2.5" fill="#d8d6de" opacity=".5"/><circle cx="1168.3" cy="398.4" r="1.6" fill="#1a1a26"/><circle cx="1251.5" cy="494.2" r="2.2" fill="#d8d6de" opacity=".5"/><circle cx="1250.9" cy="493.5" r="1.3" fill="#1a1a26"/><circle cx="1191.9" cy="361.4" r="1.8" fill="#d8d6de" opacity=".5"/><circle cx="1191.3" cy="360.7" r="0.9" fill="#1a1a26"/><circle cx="720.6" cy="361.7" r="1.8" fill="#d8d6de" opacity=".5"/><circle cx="720.0" cy="361.0" r="0.9" fill="#1a1a26"/><circle cx="1196.3" cy="720.7" r="2.0" fill="#d8d6de" opacity=".5"/><circle cx="1195.7" cy="720.0" r="1.1" fill="#1a1a26"/><circle cx="685.7" cy="549.5" r="2.5" fill="#d8d6de" opacity=".5"/><circle cx="685.1" cy="548.8" r="1.6" fill="#1a1a26"/><circle cx="1056.8" cy="819.3" r="2.0" fill="#d8d6de" opacity=".5"/><circle cx="1056.2" cy="818.6" r="1.1" fill="#1a1a26"/><circle cx="1225.8" cy="597.3" r="3.3" fill="#d8d6de" opacity=".5"/><circle cx="1225.2" cy="596.6" r="2.4" fill="#1a1a26"/><circle cx="1175.8" cy="462.4" r="2.2" fill="#d8d6de" opacity=".5"/><circle cx="1175.2" cy="461.7" r="1.3" fill="#1a1a26"/><circle cx="1267.7" cy="456.4" r="2.0" fill="#d8d6de" opacity=".5"/><circle cx="1267.1" cy="455.7" r="1.1" fill="#1a1a26"/><circle cx="740.1" cy="580.8" r="1.8" fill="#d8d6de" opacity=".5"/><circle cx="739.5" cy="580.1" r="0.9" fill="#1a1a26"/><circle cx="1243.0" cy="580.5" r="2.9" fill="#d8d6de" opacity=".5"/><circle cx="1242.4" cy="579.8" r="2.0" fill="#1a1a26"/><circle cx="1205.1" cy="663.2" r="2.2" fill="#d8d6de" opacity=".5"/><circle cx="1204.5" cy="662.5" r="1.3" fill="#1a1a26"/><circle cx="820.9" cy="812.5" r="3.3" fill="#d8d6de" opacity=".5"/><circle cx="820.3" cy="811.8" r="2.4" fill="#1a1a26"/><circle cx="882.5" cy="329.7" r="3.9" fill="#d8d6de" opacity=".5"/><circle cx="881.9" cy="329.0" r="3.0" fill="#1a1a26"/><circle cx="701.8" cy="348.6" r="3.3" fill="#d8d6de" opacity=".5"/><circle cx="701.2" cy="347.9" r="2.4" fill="#1a1a26"/><circle cx="1249.2" cy="691.1" r="3.9" fill="#d8d6de" opacity=".5"/><circle cx="1248.6" cy="690.4" r="3.0" fill="#1a1a26"/><circle cx="1022.5" cy="744.9" r="2.0" fill="#d8d6de" opacity=".5"/><circle cx="1021.9" cy="744.2" r="1.1" fill="#1a1a26"/><circle cx="681.9" cy="649.8" r="2.5" fill="#d8d6de" opacity=".5"/><circle cx="681.3" cy="649.1" r="1.6" fill="#1a1a26"/><circle cx="837.8" cy="809.9" r="2.5" fill="#d8d6de" opacity=".5"/><circle cx="837.2" cy="809.2" r="1.6" fill="#1a1a26"/><circle cx="1170.7" cy="645.4" r="2.0" fill="#d8d6de" opacity=".5"/><circle cx="1170.1" cy="644.7" r="1.1" fill="#1a1a26"/><circle cx="751.4" cy="702.1" r="1.8" fill="#d8d6de" opacity=".5"/><circle cx="750.8" cy="701.4" r="0.9" fill="#1a1a26"/><circle cx="704.3" cy="475.5" r="3.3" fill="#d8d6de" opacity=".5"/><circle cx="703.7" cy="474.8" r="2.4" fill="#1a1a26"/><circle cx="743.4" cy="550.4" r="2.5" fill="#d8d6de" opacity=".5"/><circle cx="742.8" cy="549.7" r="1.6" fill="#1a1a26"/><circle cx="972.2" cy="280.0" r="2.0" fill="#d8d6de" opacity=".5"/><circle cx="971.6" cy="279.3" r="1.1" fill="#1a1a26"/><circle cx="749.9" cy="595.2" r="2.2" fill="#d8d6de" opacity=".5"/><circle cx="749.3" cy="594.5" r="1.3" fill="#1a1a26"/><circle cx="787.9" cy="723.1" r="2.9" fill="#d8d6de" opacity=".5"/><circle cx="787.3" cy="722.4" r="2.0" fill="#1a1a26"/><circle cx="792.2" cy="731.4" r="1.8" fill="#d8d6de" opacity=".5"/><circle cx="791.6" cy="730.7" r="0.9" fill="#1a1a26"/><circle cx="1042.3" cy="309.6" r="2.2" fill="#d8d6de" opacity=".5"/><circle cx="1041.7" cy="308.9" r="1.3" fill="#1a1a26"/><circle cx="1126.8" cy="741.6" r="2.0" fill="#d8d6de" opacity=".5"/><circle cx="1126.2" cy="740.9" r="1.1" fill="#1a1a26"/><circle cx="1078.2" cy="715.1" r="2.9" fill="#d8d6de" opacity=".5"/><circle cx="1077.6" cy="714.4" r="2.0" fill="#1a1a26"/><circle cx="767.8" cy="666.3" r="1.8" fill="#d8d6de" opacity=".5"/><circle cx="767.2" cy="665.6" r="0.9" fill="#1a1a26"/><circle cx="1143.3" cy="750.1" r="2.5" fill="#d8d6de" opacity=".5"/><circle cx="1142.7" cy="749.4" r="1.6" fill="#1a1a26"/><circle cx="739.1" cy="549.0" r="1.8" fill="#d8d6de" opacity=".5"/><circle cx="738.5" cy="548.3" r="0.9" fill="#1a1a26"/><circle cx="754.2" cy="676.7" r="1.8" fill="#d8d6de" opacity=".5"/><circle cx="753.6" cy="676.0" r="0.9" fill="#1a1a26"/><circle cx="896.9" cy="328.4" r="2.5" fill="#d8d6de" opacity=".5"/><circle cx="896.3" cy="327.7" r="1.6" fill="#1a1a26"/><circle cx="1224.1" cy="600.5" r="2.0" fill="#d8d6de" opacity=".5"/><circle cx="1223.5" cy="599.8" r="1.1" fill="#1a1a26"/><circle cx="974.4" cy="789.9" r="2.0" fill="#d8d6de" opacity=".5"/><circle cx="973.8" cy="789.2" r="1.1" fill="#1a1a26"/><circle cx="1106.9" cy="777.2" r="2.2" fill="#d8d6de" opacity=".5"/><circle cx="1106.3" cy="776.5" r="1.3" fill="#1a1a26"/><circle cx="1202.4" cy="390.9" r="3.9" fill="#d8d6de" opacity=".5"/><circle cx="1201.8" cy="390.2" r="3.0" fill="#1a1a26"/><circle cx="926.1" cy="296.4" r="3.9" fill="#d8d6de" opacity=".5"/><circle cx="925.5" cy="295.7" r="3.0" fill="#1a1a26"/><circle cx="1246.3" cy="428.9" r="2.2" fill="#d8d6de" opacity=".5"/><circle cx="1245.7" cy="428.2" r="1.3" fill="#1a1a26"/><circle cx="681.8" cy="555.4" r="1.8" fill="#d8d6de" opacity=".5"/><circle cx="681.2" cy="554.7" r="0.9" fill="#1a1a26"/><circle cx="1074.2" cy="277.0" r="2.2" fill="#d8d6de" opacity=".5"/><circle cx="1073.6" cy="276.3" r="1.3" fill="#1a1a26"/><circle cx="870.0" cy="733.8" r="2.5" fill="#d8d6de" opacity=".5"/><circle cx="869.4" cy="733.1" r="1.6" fill="#1a1a26"/><circle cx="1238.4" cy="482.5" r="1.8" fill="#d8d6de" opacity=".5"/><circle cx="1237.8" cy="481.8" r="0.9" fill="#1a1a26"/><circle cx="1192.6" cy="711.6" r="1.8" fill="#d8d6de" opacity=".5"/><circle cx="1192.0" cy="710.9" r="0.9" fill="#1a1a26"/><circle cx="1065.8" cy="724.2" r="1.8" fill="#d8d6de" opacity=".5"/><circle cx="1065.2" cy="723.5" r="0.9" fill="#1a1a26"/><circle cx="1062.8" cy="784.5" r="2.2" fill="#d8d6de" opacity=".5"/><circle cx="1062.2" cy="783.8" r="1.3" fill="#1a1a26"/><circle cx="1060.3" cy="840.9" r="2.5" fill="#d8d6de" opacity=".5"/><circle cx="1059.7" cy="840.2" r="1.6" fill="#1a1a26"/><circle cx="815.9" cy="759.2" r="2.2" fill="#d8d6de" opacity=".5"/><circle cx="815.3" cy="758.5" r="1.3" fill="#1a1a26"/><circle cx="1164.2" cy="456.8" r="2.2" fill="#d8d6de" opacity=".5"/><circle cx="1163.6" cy="456.1" r="1.3" fill="#1a1a26"/><circle cx="963.5" cy="253.8" r="2.5" fill="#d8d6de" opacity=".5"/><circle cx="962.9" cy="253.1" r="1.6" fill="#1a1a26"/><circle cx="1172.5" cy="663.4" r="3.9" fill="#d8d6de" opacity=".5"/><circle cx="1171.9" cy="662.7" r="3.0" fill="#1a1a26"/><circle cx="727.0" cy="674.9" r="2.9" fill="#d8d6de" opacity=".5"/><circle cx="726.4" cy="674.2" r="2.0" fill="#1a1a26"/><circle cx="812.6" cy="783.8" r="2.5" fill="#d8d6de" opacity=".5"/><circle cx="812.0" cy="783.1" r="1.6" fill="#1a1a26"/><circle cx="1097.5" cy="797.4" r="3.3" fill="#d8d6de" opacity=".5"/><circle cx="1096.9" cy="796.7" r="2.4" fill="#1a1a26"/><circle cx="717.3" cy="743.6" r="2.2" fill="#d8d6de" opacity=".5"/><circle cx="716.7" cy="742.9" r="1.3" fill="#1a1a26"/><circle cx="1188.2" cy="419.4" r="2.5" fill="#d8d6de" opacity=".5"/><circle cx="1187.6" cy="418.7" r="1.6" fill="#1a1a26"/><circle cx="714.1" cy="634.1" r="3.3" fill="#d8d6de" opacity=".5"/><circle cx="713.5" cy="633.4" r="2.4" fill="#1a1a26"/><circle cx="716.4" cy="565.0" r="2.0" fill="#d8d6de" opacity=".5"/><circle cx="715.8" cy="564.3" r="1.1" fill="#1a1a26"/><circle cx="659.3" cy="522.6" r="3.3" fill="#d8d6de" opacity=".5"/><circle cx="658.7" cy="521.9" r="2.4" fill="#1a1a26"/><circle cx="854.5" cy="235.5" r="1.8" fill="#d8d6de" opacity=".5"/><circle cx="853.9" cy="234.8" r="0.9" fill="#1a1a26"/><circle cx="1129.1" cy="775.1" r="1.8" fill="#d8d6de" opacity=".5"/><circle cx="1128.5" cy="774.4" r="0.9" fill="#1a1a26"/><circle cx="1060.2" cy="337.4" r="3.3" fill="#d8d6de" opacity=".5"/><circle cx="1059.6" cy="336.7" r="2.4" fill="#1a1a26"/><circle cx="860.9" cy="336.8" r="2.0" fill="#d8d6de" opacity=".5"/><circle cx="860.3" cy="336.1" r="1.1" fill="#1a1a26"/><circle cx="712.9" cy="357.7" r="1.8" fill="#d8d6de" opacity=".5"/><circle cx="712.3" cy="357.0" r="0.9" fill="#1a1a26"/><circle cx="1188.5" cy="322.1" r="2.5" fill="#d8d6de" opacity=".5"/><circle cx="1187.9" cy="321.4" r="1.6" fill="#1a1a26"/><circle cx="652.7" cy="600.3" r="3.3" fill="#d8d6de" opacity=".5"/><circle cx="652.1" cy="599.6" r="2.4" fill="#1a1a26"/><circle cx="831.3" cy="754.0" r="1.8" fill="#d8d6de" opacity=".5"/><circle cx="830.7" cy="753.3" r="0.9" fill="#1a1a26"/><circle cx="1064.4" cy="817.3" r="1.8" fill="#d8d6de" opacity=".5"/><circle cx="1063.8" cy="816.6" r="0.9" fill="#1a1a26"/><circle cx="828.3" cy="744.5" r="2.5" fill="#d8d6de" opacity=".5"/><circle cx="827.7" cy="743.8" r="1.6" fill="#1a1a26"/><circle cx="1213.6" cy="673.8" r="2.0" fill="#d8d6de" opacity=".5"/><circle cx="1213.0" cy="673.1" r="1.1" fill="#1a1a26"/><circle cx="836.6" cy="238.7" r="3.3" fill="#d8d6de" opacity=".5"/><circle cx="836.0" cy="238.0" r="2.4" fill="#1a1a26"/><circle cx="1164.9" cy="787.5" r="1.8" fill="#d8d6de" opacity=".5"/><circle cx="1164.3" cy="786.8" r="0.9" fill="#1a1a26"/><circle cx="1001.6" cy="852.9" r="2.0" fill="#d8d6de" opacity=".5"/><circle cx="1001.0" cy="852.2" r="1.1" fill="#1a1a26"/><circle cx="1122.9" cy="319.0" r="2.9" fill="#d8d6de" opacity=".5"/><circle cx="1122.3" cy="318.3" r="2.0" fill="#1a1a26"/><circle cx="1015.9" cy="262.2" r="3.9" fill="#d8d6de" opacity=".5"/><circle cx="1015.3" cy="261.5" r="3.0" fill="#1a1a26"/><circle cx="1186.6" cy="335.1" r="2.5" fill="#d8d6de" opacity=".5"/><circle cx="1186.0" cy="334.4" r="1.6" fill="#1a1a26"/><circle cx="1059.1" cy="733.0" r="3.9" fill="#d8d6de" opacity=".5"/><circle cx="1058.5" cy="732.3" r="3.0" fill="#1a1a26"/><circle cx="1058.9" cy="274.8" r="3.9" fill="#d8d6de" opacity=".5"/><circle cx="1058.3" cy="274.1" r="3.0" fill="#1a1a26"/><circle cx="1193.2" cy="486.9" r="2.2" fill="#d8d6de" opacity=".5"/><circle cx="1192.6" cy="486.2" r="1.3" fill="#1a1a26"/><circle cx="1191.0" cy="670.7" r="2.0" fill="#d8d6de" opacity=".5"/><circle cx="1190.4" cy="670.0" r="1.1" fill="#1a1a26"/><circle cx="1094.5" cy="280.0" r="1.8" fill="#d8d6de" opacity=".5"/><circle cx="1093.9" cy="279.3" r="0.9" fill="#1a1a26"/><circle cx="770.4" cy="305.1" r="3.9" fill="#d8d6de" opacity=".5"/><circle cx="769.8" cy="304.4" r="3.0" fill="#1a1a26"/><circle cx="879.0" cy="292.4" r="3.3" fill="#d8d6de" opacity=".5"/><circle cx="878.4" cy="291.7" r="2.4" fill="#1a1a26"/><circle cx="746.0" cy="610.5" r="3.9" fill="#d8d6de" opacity=".5"/><circle cx="745.4" cy="609.8" r="3.0" fill="#1a1a26"/><circle cx="1210.9" cy="447.5" r="2.5" fill="#d8d6de" opacity=".5"/><circle cx="1210.3" cy="446.8" r="1.6" fill="#1a1a26"/><circle cx="1036.2" cy="796.9" r="2.5" fill="#d8d6de" opacity=".5"/><circle cx="1035.6" cy="796.2" r="1.6" fill="#1a1a26"/><circle cx="872.6" cy="805.4" r="2.2" fill="#d8d6de" opacity=".5"/><circle cx="872.0" cy="804.7" r="1.3" fill="#1a1a26"/><circle cx="806.8" cy="754.0" r="1.8" fill="#d8d6de" opacity=".5"/><circle cx="806.2" cy="753.3" r="0.9" fill="#1a1a26"/><circle cx="1221.6" cy="403.2" r="2.2" fill="#d8d6de" opacity=".5"/><circle cx="1221.0" cy="402.5" r="1.3" fill="#1a1a26"/><circle cx="704.4" cy="667.9" r="2.9" fill="#d8d6de" opacity=".5"/><circle cx="703.8" cy="667.2" r="2.0" fill="#1a1a26"/><circle cx="718.5" cy="507.7" r="3.9" fill="#d8d6de" opacity=".5"/><circle cx="717.9" cy="507.0" r="3.0" fill="#1a1a26"/><circle cx="1214.1" cy="529.1" r="2.5" fill="#d8d6de" opacity=".5"/><circle cx="1213.5" cy="528.4" r="1.6" fill="#1a1a26"/><circle cx="734.4" cy="625.1" r="2.2" fill="#d8d6de" opacity=".5"/><circle cx="733.8" cy="624.4" r="1.3" fill="#1a1a26"/></g><g transform="translate(853 260) rotate(-20)"><ellipse rx="14.3" ry="23.3" cx="0.9" cy="1.7" fill="#dcdae2" opacity=".55"/><ellipse rx="13" ry="22" fill="url(#cg)"/></g><g transform="translate(740 343) rotate(25)"><ellipse rx="11.3" ry="16.3" cx="0.9" cy="1.7" fill="#dcdae2" opacity=".55"/><ellipse rx="10" ry="15" fill="url(#cg)"/></g><g transform="translate(737 377) rotate(20)"><ellipse rx="9.3" ry="11.3" cx="0.9" cy="1.7" fill="#dcdae2" opacity=".55"/><ellipse rx="8" ry="10" fill="url(#cg)"/></g><g transform="translate(722 443) rotate(0)"><ellipse rx="11.3" ry="11.3" cx="0.9" cy="1.7" fill="#dcdae2" opacity=".55"/><ellipse rx="10" ry="10" fill="url(#cg)"/></g><g transform="translate(747 435) rotate(0)"><ellipse rx="8.3" ry="8.3" cx="0.9" cy="1.7" fill="#dcdae2" opacity=".55"/><ellipse rx="7" ry="7" fill="url(#cg)"/></g><g transform="translate(720 418) rotate(0)"><ellipse rx="7.3" ry="7.3" cx="0.9" cy="1.7" fill="#dcdae2" opacity=".55"/><ellipse rx="6" ry="6" fill="url(#cg)"/></g><g transform="translate(702 432) rotate(-10)"><ellipse rx="6.3" ry="9.3" cx="0.9" cy="1.7" fill="#dcdae2" opacity=".55"/><ellipse rx="5" ry="8" fill="url(#cg)"/></g><g transform="translate(675 487) rotate(-5)"><ellipse rx="7.3" ry="14.3" cx="0.9" cy="1.7" fill="#dcdae2" opacity=".55"/><ellipse rx="6" ry="13" fill="url(#cg)"/></g><g transform="translate(897 294) rotate(0)"><ellipse rx="8.3" ry="8.3" cx="0.9" cy="1.7" fill="#dcdae2" opacity=".55"/><ellipse rx="7" ry="7" fill="url(#cg)"/></g><g transform="translate(923 252) rotate(0)"><ellipse rx="7.3" ry="6.3" cx="0.9" cy="1.7" fill="#dcdae2" opacity=".55"/><ellipse rx="6" ry="5" fill="url(#cg)"/></g><g transform="translate(817 271) rotate(0)"><ellipse rx="6.3" ry="6.3" cx="0.9" cy="1.7" fill="#dcdae2" opacity=".55"/><ellipse rx="5" ry="5" fill="url(#cg)"/></g><g transform="translate(833 303) rotate(-30)"><ellipse rx="9.3" ry="6.3" cx="0.9" cy="1.7" fill="#dcdae2" opacity=".55"/><ellipse rx="8" ry="5" fill="url(#cg)"/></g><g transform="translate(704 482) rotate(0)"><ellipse rx="5.8" ry="5.8" cx="0.9" cy="1.7" fill="#dcdae2" opacity=".55"/><ellipse rx="4.5" ry="4.5" fill="url(#cg)"/></g><g transform="translate(638 503) rotate(0)"><ellipse rx="5.3" ry="5.3" cx="0.9" cy="1.7" fill="#dcdae2" opacity=".55"/><ellipse rx="4" ry="4" fill="url(#cg)"/></g><g transform="translate(782 320) rotate(0)"><ellipse rx="6.3" ry="6.3" cx="0.9" cy="1.7" fill="#dcdae2" opacity=".55"/><ellipse rx="5" ry="5" fill="url(#cg)"/></g><g transform="translate(1112 322) rotate(10)"><ellipse rx="20.3" ry="18.3" cx="0.9" cy="1.7" fill="#dcdae2" opacity=".55"/><ellipse rx="19" ry="17" fill="url(#cg)"/></g><g transform="translate(1084 333) rotate(0)"><ellipse rx="9.8" ry="9.8" cx="0.9" cy="1.7" fill="#dcdae2" opacity=".55"/><ellipse rx="8.5" ry="8.5" fill="url(#cg)"/></g><g transform="translate(1055 295) rotate(0)"><ellipse rx="9.3" ry="9.3" cx="0.9" cy="1.7" fill="#dcdae2" opacity=".55"/><ellipse rx="8" ry="8" fill="url(#cg)"/></g><g transform="translate(1018 277) rotate(0)"><ellipse rx="7.3" ry="7.3" cx="0.9" cy="1.7" fill="#dcdae2" opacity=".55"/><ellipse rx="6" ry="6" fill="url(#cg)"/></g><g transform="translate(1190 397) rotate(-25)"><ellipse rx="22.3" ry="28.3" cx="0.9" cy="1.7" fill="#dcdae2" opacity=".55"/><ellipse rx="21" ry="27" fill="url(#cg)"/></g><g transform="translate(1173 350) rotate(0)"><ellipse rx="9.3" ry="8.3" cx="0.9" cy="1.7" fill="#dcdae2" opacity=".55"/><ellipse rx="8" ry="7" fill="url(#cg)"/></g><g transform="translate(1228 438) rotate(0)"><ellipse rx="12.3" ry="12.3" cx="0.9" cy="1.7" fill="#dcdae2" opacity=".55"/><ellipse rx="11" ry="11" fill="url(#cg)"/></g><g transform="translate(1237 383) rotate(0)"><ellipse rx="5.3" ry="9.3" cx="0.9" cy="1.7" fill="#dcdae2" opacity=".55"/><ellipse rx="4" ry="8" fill="url(#cg)"/></g><g transform="translate(1183 473) rotate(0)"><ellipse rx="9.3" ry="9.3" cx="0.9" cy="1.7" fill="#dcdae2" opacity=".55"/><ellipse rx="8" ry="8" fill="url(#cg)"/></g><g transform="translate(1167 473) rotate(0)"><ellipse rx="7.3" ry="7.3" cx="0.9" cy="1.7" fill="#dcdae2" opacity=".55"/><ellipse rx="6" ry="6" fill="url(#cg)"/></g><g transform="translate(1202 488) rotate(0)"><ellipse rx="8.3" ry="7.3" cx="0.9" cy="1.7" fill="#dcdae2" opacity=".55"/><ellipse rx="7" ry="6" fill="url(#cg)"/></g><g transform="translate(1224 488) rotate(0)"><ellipse rx="8.3" ry="8.3" cx="0.9" cy="1.7" fill="#dcdae2" opacity=".55"/><ellipse rx="7" ry="7" fill="url(#cg)"/></g><g transform="translate(1273 463) rotate(15)"><ellipse rx="7.3" ry="14.3" cx="0.9" cy="1.7" fill="#dcdae2" opacity=".55"/><ellipse rx="6" ry="13" fill="url(#cg)"/></g><g transform="translate(1268 433) rotate(0)"><ellipse rx="7.3" ry="7.3" cx="0.9" cy="1.7" fill="#dcdae2" opacity=".55"/><ellipse rx="6" ry="6" fill="url(#cg)"/></g><g transform="translate(1021 235) rotate(0)"><ellipse rx="6.3" ry="5.3" cx="0.9" cy="1.7" fill="#dcdae2" opacity=".55"/><ellipse rx="5" ry="4" fill="url(#cg)"/></g><g transform="translate(1037 228) rotate(0)"><ellipse rx="6.3" ry="5.3" cx="0.9" cy="1.7" fill="#dcdae2" opacity=".55"/><ellipse rx="5" ry="4" fill="url(#cg)"/></g><g transform="translate(1168 422) rotate(0)"><ellipse rx="5.3" ry="5.3" cx="0.9" cy="1.7" fill="#dcdae2" opacity=".55"/><ellipse rx="4" ry="4" fill="url(#cg)"/></g><g transform="translate(1225 570) rotate(-20)"><ellipse rx="14.3" ry="13.3" cx="0.9" cy="1.7" fill="#dcdae2" opacity=".55"/><ellipse rx="13" ry="12" fill="url(#cg)"/></g><g transform="translate(1287 563) rotate(10)"><ellipse rx="9.3" ry="14.3" cx="0.9" cy="1.7" fill="#dcdae2" opacity=".55"/><ellipse rx="8" ry="13" fill="url(#cg)"/></g><g transform="translate(1140 656) rotate(0)"><ellipse rx="13.3" ry="13.3" cx="0.9" cy="1.7" fill="#dcdae2" opacity=".55"/><ellipse rx="12" ry="12" fill="url(#cg)"/></g><g transform="translate(1210 678) rotate(-10)"><ellipse rx="23.3" ry="18.3" cx="0.9" cy="1.7" fill="#dcdae2" opacity=".55"/><ellipse rx="22" ry="17" fill="url(#cg)"/></g><g transform="translate(1182 667) rotate(0)"><ellipse rx="7.3" ry="7.3" cx="0.9" cy="1.7" fill="#dcdae2" opacity=".55"/><ellipse rx="6" ry="6" fill="url(#cg)"/></g><g transform="translate(1081 712) rotate(0)"><ellipse rx="10.3" ry="10.3" cx="0.9" cy="1.7" fill="#dcdae2" opacity=".55"/><ellipse rx="9" ry="9" fill="url(#cg)"/></g><g transform="translate(1118 737) rotate(0)"><ellipse rx="12.3" ry="12.3" cx="0.9" cy="1.7" fill="#dcdae2" opacity=".55"/><ellipse rx="11" ry="11" fill="url(#cg)"/></g><g transform="translate(1157 747) rotate(-20)"><ellipse rx="23.3" ry="20.3" cx="0.9" cy="1.7" fill="#dcdae2" opacity=".55"/><ellipse rx="22" ry="19" fill="url(#cg)"/></g><g transform="translate(1073 787) rotate(-10)"><ellipse rx="28.3" ry="24.3" cx="0.9" cy="1.7" fill="#dcdae2" opacity=".55"/><ellipse rx="27" ry="23" fill="url(#cg)"/></g><g transform="translate(1010 803) rotate(0)"><ellipse rx="11.3" ry="9.3" cx="0.9" cy="1.7" fill="#dcdae2" opacity=".55"/><ellipse rx="10" ry="8" fill="url(#cg)"/></g><g transform="translate(1109 713) rotate(0)"><ellipse rx="5.8" ry="5.8" cx="0.9" cy="1.7" fill="#dcdae2" opacity=".55"/><ellipse rx="4.5" ry="4.5" fill="url(#cg)"/></g><g transform="translate(1132 723) rotate(0)"><ellipse rx="5.8" ry="5.8" cx="0.9" cy="1.7" fill="#dcdae2" opacity=".55"/><ellipse rx="4.5" ry="4.5" fill="url(#cg)"/></g><g transform="translate(1165 648) rotate(0)"><ellipse rx="5.3" ry="5.3" cx="0.9" cy="1.7" fill="#dcdae2" opacity=".55"/><ellipse rx="4" ry="4" fill="url(#cg)"/></g><g transform="translate(1113 813) rotate(0)"><ellipse rx="9.3" ry="8.3" cx="0.9" cy="1.7" fill="#dcdae2" opacity=".55"/><ellipse rx="8" ry="7" fill="url(#cg)"/></g><g transform="translate(1027 847) rotate(-10)"><ellipse rx="16.3" ry="9.3" cx="0.9" cy="1.7" fill="#dcdae2" opacity=".55"/><ellipse rx="15" ry="8" fill="url(#cg)"/></g><g transform="translate(687 573) rotate(-20)"><ellipse rx="11.3" ry="14.3" cx="0.9" cy="1.7" fill="#dcdae2" opacity=".55"/><ellipse rx="10" ry="13" fill="url(#cg)"/></g><g transform="translate(728 588) rotate(0)"><ellipse rx="7.8" ry="7.8" cx="0.9" cy="1.7" fill="#dcdae2" opacity=".55"/><ellipse rx="6.5" ry="6.5" fill="url(#cg)"/></g><g transform="translate(718 603) rotate(0)"><ellipse rx="7.3" ry="7.3" cx="0.9" cy="1.7" fill="#dcdae2" opacity=".55"/><ellipse rx="6" ry="6" fill="url(#cg)"/></g><g transform="translate(749 620) rotate(0)"><ellipse rx="9.3" ry="9.3" cx="0.9" cy="1.7" fill="#dcdae2" opacity=".55"/><ellipse rx="8" ry="8" fill="url(#cg)"/></g><g transform="translate(747 644) rotate(0)"><ellipse rx="10.3" ry="8.3" cx="0.9" cy="1.7" fill="#dcdae2" opacity=".55"/><ellipse rx="9" ry="7" fill="url(#cg)"/></g><g transform="translate(678 661) rotate(30)"><ellipse rx="10.3" ry="11.3" cx="0.9" cy="1.7" fill="#dcdae2" opacity=".55"/><ellipse rx="9" ry="10" fill="url(#cg)"/></g><g transform="translate(760 747) rotate(30)"><ellipse rx="28.3" ry="22.3" cx="0.9" cy="1.7" fill="#dcdae2" opacity=".55"/><ellipse rx="27" ry="21" fill="url(#cg)"/></g><g transform="translate(831 723) rotate(0)"><ellipse rx="10.3" ry="12.3" cx="0.9" cy="1.7" fill="#dcdae2" opacity=".55"/><ellipse rx="9" ry="11" fill="url(#cg)"/></g><g transform="translate(815 735) rotate(0)"><ellipse rx="9.3" ry="11.3" cx="0.9" cy="1.7" fill="#dcdae2" opacity=".55"/><ellipse rx="8" ry="10" fill="url(#cg)"/></g><g transform="translate(813 770) rotate(0)"><ellipse rx="8.3" ry="10.3" cx="0.9" cy="1.7" fill="#dcdae2" opacity=".55"/><ellipse rx="7" ry="9" fill="url(#cg)"/></g><g transform="translate(832 773) rotate(0)"><ellipse rx="7.3" ry="7.3" cx="0.9" cy="1.7" fill="#dcdae2" opacity=".55"/><ellipse rx="6" ry="6" fill="url(#cg)"/></g><g transform="translate(887 758) rotate(0)"><ellipse rx="10.3" ry="11.3" cx="0.9" cy="1.7" fill="#dcdae2" opacity=".55"/><ellipse rx="9" ry="10" fill="url(#cg)"/></g><g transform="translate(912 782) rotate(0)"><ellipse rx="9.3" ry="9.3" cx="0.9" cy="1.7" fill="#dcdae2" opacity=".55"/><ellipse rx="8" ry="8" fill="url(#cg)"/></g><g transform="translate(643 607) rotate(-10)"><ellipse rx="10.3" ry="25.3" cx="0.9" cy="1.7" fill="#dcdae2" opacity=".55"/><ellipse rx="9" ry="24" fill="url(#cg)"/></g><path d="M960.0 204.0C980.0 206.3 970.7 205.0 993.0 208.0C1015.3 211.0 1004.7 206.7 1027.0 213.0C1049.3 219.3 1040.0 217.0 1060.0 227.0C1080.0 237.0 1070.3 233.0 1087.0 243.0C1103.7 253.0 1094.7 248.0 1110.0 257.0C1125.3 266.0 1119.7 260.0 1133.0 270.0C1146.3 280.0 1138.7 274.7 1150.0 287.0C1161.3 299.3 1154.7 293.7 1167.0 307.0C1179.3 320.3 1173.7 313.7 1187.0 327.0C1200.3 340.3 1193.7 333.3 1207.0 347.0C1220.3 360.7 1212.7 356.0 1227.0 368.0C1241.3 380.0 1236.7 372.3 1250.0 383.0C1263.3 393.7 1257.7 386.7 1267.0 400.0C1276.3 413.3 1272.7 407.3 1278.0 423.0C1283.3 438.7 1282.3 430.3 1283.0 447.0C1283.7 463.7 1278.3 455.3 1280.0 473.0C1281.7 490.7 1282.0 482.0 1288.0 500.0C1294.0 518.0 1294.7 513.7 1298.0 527.0C1301.3 540.3 1298.3 529.0 1298.0 540.0C1297.7 551.0 1300.7 545.7 1297.0 560.0C1293.3 574.3 1295.0 567.3 1287.0 583.0C1279.0 598.7 1280.3 590.3 1273.0 607.0C1265.7 623.7 1268.3 616.3 1265.0 633.0C1261.7 649.7 1267.0 640.3 1263.0 657.0C1259.0 673.7 1261.7 665.3 1253.0 683.0C1244.3 700.7 1249.0 693.3 1237.0 710.0C1225.0 726.7 1229.3 717.3 1217.0 733.0C1204.7 748.7 1212.3 740.3 1200.0 757.0C1187.7 773.7 1195.7 765.3 1180.0 783.0C1164.3 800.7 1173.0 794.3 1153.0 810.0C1133.0 825.7 1142.0 819.0 1120.0 830.0C1098.0 841.0 1111.3 834.0 1087.0 843.0C1062.7 852.0 1075.0 848.7 1047.0 857.0C1019.0 865.3 1032.0 861.0 1003.0 868.0C974.0 875.0 988.7 875.0 960.0 878.0C931.3 881.0 941.3 880.7 917.0 877.0C892.7 873.3 906.0 876.0 887.0 867.0C868.0 858.0 878.0 863.3 860.0 850.0C842.0 836.7 853.0 840.3 833.0 827.0C813.0 813.7 822.0 820.0 800.0 810.0C778.0 800.0 787.0 807.0 767.0 797.0C747.0 787.0 755.7 793.3 740.0 780.0C724.3 766.7 733.3 771.3 720.0 757.0C706.7 742.7 713.3 750.3 700.0 737.0C686.7 723.7 693.3 732.7 680.0 717.0C666.7 701.3 671.0 708.0 660.0 690.0C649.0 672.0 653.7 680.7 647.0 663.0C640.3 645.3 644.7 653.7 640.0 637.0C635.3 620.3 637.3 629.7 633.0 613.0C628.7 596.3 630.7 603.7 627.0 587.0C623.3 570.3 623.3 578.7 622.0 563.0C620.7 547.3 621.3 552.0 623.0 540.0C624.7 528.0 625.3 540.3 627.0 527.0C628.7 513.7 624.7 515.7 628.0 500.0C631.3 484.3 628.7 494.3 637.0 480.0C645.3 465.7 644.7 472.7 653.0 457.0C661.3 441.3 658.0 449.7 662.0 433.0C666.0 416.3 661.3 422.3 665.0 407.0C668.7 391.7 665.7 401.7 673.0 387.0C680.3 372.3 678.0 377.7 687.0 363.0C696.0 348.3 686.7 356.3 700.0 343.0C713.3 329.7 711.3 334.0 727.0 323.0C742.7 312.0 733.7 318.3 747.0 310.0C760.3 301.7 753.7 305.7 767.0 298.0C780.3 290.3 773.7 296.3 787.0 287.0C800.3 277.7 792.7 282.3 807.0 270.0C821.3 257.7 818.0 261.0 830.0 250.0C842.0 239.0 830.7 244.7 843.0 237.0C855.3 229.3 848.0 233.7 867.0 227.0C886.0 220.3 883.3 223.7 900.0 217.0C916.7 210.3 906.0 212.3 917.0 207.0C928.0 201.7 918.7 202.0 933.0 201.0C947.3 200.0 940.0 201.7 960.0 204.0Z" fill="none" stroke="#e6e4ec" stroke-width="4" opacity=".45" filter="url(#b2)"/><path d="M600.0 560.0C608.0 564.0 610.7 558.7 624.0 572.0C637.3 585.3 629.7 577.3 640.0 600.0C650.3 622.7 638.3 613.3 655.0 640.0C671.7 666.7 665.0 660.0 690.0 680.0C715.0 700.0 701.7 688.3 730.0 700.0C758.3 711.7 751.7 701.7 775.0 715.0C798.3 728.3 781.7 715.0 800.0 740.0C818.3 765.0 803.3 767.3 830.0 790.0C856.7 812.7 843.3 798.0 880.0 808.0C916.7 818.0 905.0 817.0 940.0 820.0C975.0 823.0 950.7 828.7 985.0 817.0C1019.3 805.3 1007.0 800.0 1043.0 785.0C1079.0 770.0 1059.7 784.7 1093.0 772.0C1126.3 759.3 1109.7 768.7 1143.0 747.0C1176.3 725.3 1162.3 727.3 1193.0 707.0C1223.7 686.7 1216.0 701.7 1235.0 686.0C1254.0 670.3 1243.0 681.3 1250.0 660.0C1257.0 638.7 1250.0 644.7 1256.0 622.0C1262.0 599.3 1258.7 610.7 1268.0 592.0C1277.3 573.3 1273.3 580.0 1284.0 566.0C1294.7 552.0 1284.7 557.0 1300.0 550.0C1315.3 543.0 1320.0 546.7 1330.0 545.0L1330 900L600 900Z" fill="#1b202d" opacity=".96" filter="url(#b5)"/><g clip-path="url(#shc)"><path d="M960.0 204.0C980.0 206.3 970.7 205.0 993.0 208.0C1015.3 211.0 1004.7 206.7 1027.0 213.0C1049.3 219.3 1040.0 217.0 1060.0 227.0C1080.0 237.0 1070.3 233.0 1087.0 243.0C1103.7 253.0 1094.7 248.0 1110.0 257.0C1125.3 266.0 1119.7 260.0 1133.0 270.0C1146.3 280.0 1138.7 274.7 1150.0 287.0C1161.3 299.3 1154.7 293.7 1167.0 307.0C1179.3 320.3 1173.7 313.7 1187.0 327.0C1200.3 340.3 1193.7 333.3 1207.0 347.0C1220.3 360.7 1212.7 356.0 1227.0 368.0C1241.3 380.0 1236.7 372.3 1250.0 383.0C1263.3 393.7 1257.7 386.7 1267.0 400.0C1276.3 413.3 1272.7 407.3 1278.0 423.0C1283.3 438.7 1282.3 430.3 1283.0 447.0C1283.7 463.7 1278.3 455.3 1280.0 473.0C1281.7 490.7 1282.0 482.0 1288.0 500.0C1294.0 518.0 1294.7 513.7 1298.0 527.0C1301.3 540.3 1298.3 529.0 1298.0 540.0C1297.7 551.0 1300.7 545.7 1297.0 560.0C1293.3 574.3 1295.0 567.3 1287.0 583.0C1279.0 598.7 1280.3 590.3 1273.0 607.0C1265.7 623.7 1268.3 616.3 1265.0 633.0C1261.7 649.7 1267.0 640.3 1263.0 657.0C1259.0 673.7 1261.7 665.3 1253.0 683.0C1244.3 700.7 1249.0 693.3 1237.0 710.0C1225.0 726.7 1229.3 717.3 1217.0 733.0C1204.7 748.7 1212.3 740.3 1200.0 757.0C1187.7 773.7 1195.7 765.3 1180.0 783.0C1164.3 800.7 1173.0 794.3 1153.0 810.0C1133.0 825.7 1142.0 819.0 1120.0 830.0C1098.0 841.0 1111.3 834.0 1087.0 843.0C1062.7 852.0 1075.0 848.7 1047.0 857.0C1019.0 865.3 1032.0 861.0 1003.0 868.0C974.0 875.0 988.7 875.0 960.0 878.0C931.3 881.0 941.3 880.7 917.0 877.0C892.7 873.3 906.0 876.0 887.0 867.0C868.0 858.0 878.0 863.3 860.0 850.0C842.0 836.7 853.0 840.3 833.0 827.0C813.0 813.7 822.0 820.0 800.0 810.0C778.0 800.0 787.0 807.0 767.0 797.0C747.0 787.0 755.7 793.3 740.0 780.0C724.3 766.7 733.3 771.3 720.0 757.0C706.7 742.7 713.3 750.3 700.0 737.0C686.7 723.7 693.3 732.7 680.0 717.0C666.7 701.3 671.0 708.0 660.0 690.0C649.0 672.0 653.7 680.7 647.0 663.0C640.3 645.3 644.7 653.7 640.0 637.0C635.3 620.3 637.3 629.7 633.0 613.0C628.7 596.3 630.7 603.7 627.0 587.0C623.3 570.3 623.3 578.7 622.0 563.0C620.7 547.3 621.3 552.0 623.0 540.0C624.7 528.0 625.3 540.3 627.0 527.0C628.7 513.7 624.7 515.7 628.0 500.0C631.3 484.3 628.7 494.3 637.0 480.0C645.3 465.7 644.7 472.7 653.0 457.0C661.3 441.3 658.0 449.7 662.0 433.0C666.0 416.3 661.3 422.3 665.0 407.0C668.7 391.7 665.7 401.7 673.0 387.0C680.3 372.3 678.0 377.7 687.0 363.0C696.0 348.3 686.7 356.3 700.0 343.0C713.3 329.7 711.3 334.0 727.0 323.0C742.7 312.0 733.7 318.3 747.0 310.0C760.3 301.7 753.7 305.7 767.0 298.0C780.3 290.3 773.7 296.3 787.0 287.0C800.3 277.7 792.7 282.3 807.0 270.0C821.3 257.7 818.0 261.0 830.0 250.0C842.0 239.0 830.7 244.7 843.0 237.0C855.3 229.3 848.0 233.7 867.0 227.0C886.0 220.3 883.3 223.7 900.0 217.0C916.7 210.3 906.0 212.3 917.0 207.0C928.0 201.7 918.7 202.0 933.0 201.0C947.3 200.0 940.0 201.7 960.0 204.0Z" fill="none" stroke="#52628a" stroke-width="7" opacity=".45" filter="url(#b2)"/></g><ellipse cx="760" cy="747" rx="27" ry="21" transform="rotate(30 760 747)" fill="#0e0d16" filter="url(#b2)"/><ellipse cx="1073" cy="787" rx="27" ry="23" transform="rotate(-10 1073 787)" fill="#0e0d16" filter="url(#b2)"/><ellipse cx="1157" cy="747" rx="22" ry="19" transform="rotate(-20 1157 747)" fill="#0e0d16" filter="url(#b2)"/><ellipse cx="1210" cy="680" rx="20" ry="14" transform="rotate(-10 1210 680)" fill="#0e0d16" filter="url(#b2)"/><ellipse cx="1027" cy="847" rx="15" ry="8" transform="rotate(-10 1027 847)" fill="#0e0d16" filter="url(#b2)"/><ellipse cx="643" cy="607" rx="9" ry="24" transform="rotate(-10 643 607)" fill="#0e0d16" filter="url(#b2)"/><ellipse cx="1113" cy="813" rx="8" ry="7" transform="rotate(0 1113 813)" fill="#0e0d16" filter="url(#b2)"/></g><defs><linearGradient id="tile" x1="0" y1="0" x2="0" y2="1"><stop offset="0" stop-color="#a6a6ad"/><stop offset=".5" stop-color="#9a9aa2"/><stop offset=".52" stop-color="#5f6169"/><stop offset="1" stop-color="#50525a"/></linearGradient><linearGradient id="armv" x1="0" y1="0" x2="1" y2="0"><stop offset="0" stop-color="#70727a"/><stop offset=".3" stop-color="#b9babf"/><stop offset=".7" stop-color="#a3a4aa"/><stop offset="1" stop-color="#62646c"/></linearGradient><linearGradient id="armh" x1="0" y1="0" x2="0" y2="1"><stop offset="0" stop-color="#7c7e86"/><stop offset=".3" stop-color="#bcbdc2"/><stop offset=".7" stop-color="#a3a4aa"/><stop offset="1" stop-color="#55575f"/></linearGradient><linearGradient id="modv" x1="0" y1="0" x2="1" y2="0"><stop offset="0" stop-color="#5e6068"/><stop offset=".35" stop-color="#b4b5ba"/><stop offset=".7" stop-color="#8e9096"/><stop offset="1" stop-color="#3c3e46"/></linearGradient><linearGradient id="modh" x1="0" y1="0" x2="0" y2="1"><stop offset="0" stop-color="#8e9097"/><stop offset=".15" stop-color="#bebfc4"/><stop offset=".56" stop-color="#a2a4aa"/><stop offset=".6" stop-color="#5f6675"/><stop offset="1" stop-color="#3b4150"/></linearGradient><filter id="stx" x="0" y="0" width="100%" height="100%" color-interpolation-filters="sRGB"><feTurbulence type="turbulence" baseFrequency="0.5 0.3" numOctaves="2" seed="9" result="n"/><feColorMatrix in="n" type="matrix" values="0 0 0 0 0  0 0 0 0 0  0 0 0 0 0  3.4 0 0 0 -0.8" result="m"/><feFlood flood-color="#1a1c24" flood-opacity=".5" result="f"/><feComposite in="f" in2="m" operator="in" result="dk"/><feComposite in="dk" in2="SourceGraphic" operator="in" result="dk2"/><feMerge><feMergeNode in="SourceGraphic"/><feMergeNode in="dk2"/></feMerge></filter><linearGradient id="hubl" x1="0.3" y1="0" x2="0.6" y2="1"><stop offset="0" stop-color="#aaacb1"/><stop offset=".42" stop-color="#85878e"/><stop offset=".6" stop-color="#4c5160"/><stop offset="1" stop-color="#2a303e"/></linearGradient></defs><g><ellipse cx="960" cy="521" rx="220" ry="218" fill="url(#tile)" /><path d="M771 521A189 185 0 0 1 1149 521Z" fill="#1b1f2c"/><path d="M747 521A213 213 0 0 0 1173 521Z" fill="#2b2d36"/><path d="M754 521A206 206 0 0 0 1166 521Z" fill="#a9a9ad"/><path d="M785 521A175 175 0 0 0 1135 521Z" fill="#1e222e"/><path d="M1122.7 530.8A163 163 0 0 1 1092.7 615.7" fill="none" stroke="#a2a3a8" stroke-width="19" opacity="1"/><path d="M1122.7 530.8A163 163 0 0 1 1092.7 615.7" fill="none" stroke="#33363f" stroke-width="19" stroke-dasharray="1.5 14" opacity="1"/><path d="M827.3 615.7A163 163 0 0 1 797.3 530.8" fill="none" stroke="#a2a3a8" stroke-width="19" opacity="1"/><path d="M827.3 615.7A163 163 0 0 1 797.3 530.8" fill="none" stroke="#33363f" stroke-width="19" stroke-dasharray="1.5 14" opacity="1"/><path d="M1054.8 653.6A163 163 0 0 1 1003.6 678.1" fill="none" stroke="#a2a3a8" stroke-width="19" opacity="0.55"/><path d="M1054.8 653.6A163 163 0 0 1 1003.6 678.1" fill="none" stroke="#33363f" stroke-width="19" stroke-dasharray="1.5 14" opacity="0.55"/><path d="M916.4 678.1A163 163 0 0 1 865.2 653.6" fill="none" stroke="#a2a3a8" stroke-width="19" opacity="0.55"/><path d="M916.4 678.1A163 163 0 0 1 865.2 653.6" fill="none" stroke="#33363f" stroke-width="19" stroke-dasharray="1.5 14" opacity="0.55"/><path d="M1135.0 539.4L1164.9 542.5" stroke="#5f6068" stroke-width="1.6"/><path d="M1132.2 557.6L1161.5 563.8" stroke="#5f6068" stroke-width="1.6"/><path d="M1127.4 575.4L1155.9 584.7" stroke="#5f6068" stroke-width="1.6"/><path d="M1120.8 592.6L1148.2 604.8" stroke="#5f6068" stroke-width="1.6"/><path d="M1112.4 609.0L1138.4 624.0" stroke="#5f6068" stroke-width="1.6"/><path d="M1102.4 624.5L1126.7 642.1" stroke="#5f6068" stroke-width="1.6"/><path d="M1090.8 638.8L1113.1 658.8" stroke="#5f6068" stroke-width="1.6"/><path d="M1077.8 651.8L1097.8 674.1" stroke="#5f6068" stroke-width="1.6"/><path d="M1063.5 663.4L1081.1 687.7" stroke="#5f6068" stroke-width="1.6"/><path d="M1048.0 673.4L1063.0 699.4" stroke="#5f6068" stroke-width="1.6"/><path d="M1031.6 681.8L1043.8 709.2" stroke="#5f6068" stroke-width="1.6"/><path d="M1014.4 688.4L1023.7 716.9" stroke="#5f6068" stroke-width="1.6"/><path d="M996.6 693.2L1002.8 722.5" stroke="#5f6068" stroke-width="1.6"/><path d="M978.4 696.0L981.5 725.9" stroke="#5f6068" stroke-width="1.6"/><path d="M960.0 697.0L960.0 727.0" stroke="#5f6068" stroke-width="1.6"/><path d="M941.6 696.0L938.5 725.9" stroke="#5f6068" stroke-width="1.6"/><path d="M923.4 693.2L917.2 722.5" stroke="#5f6068" stroke-width="1.6"/><path d="M905.6 688.4L896.3 716.9" stroke="#5f6068" stroke-width="1.6"/><path d="M888.4 681.8L876.2 709.2" stroke="#5f6068" stroke-width="1.6"/><path d="M872.0 673.4L857.0 699.4" stroke="#5f6068" stroke-width="1.6"/><path d="M856.5 663.4L838.9 687.7" stroke="#5f6068" stroke-width="1.6"/><path d="M842.2 651.8L822.2 674.1" stroke="#5f6068" stroke-width="1.6"/><path d="M829.2 638.8L806.9 658.8" stroke="#5f6068" stroke-width="1.6"/><path d="M817.6 624.5L793.3 642.1" stroke="#5f6068" stroke-width="1.6"/><path d="M807.6 609.0L781.6 624.0" stroke="#5f6068" stroke-width="1.6"/><path d="M799.2 592.6L771.8 604.8" stroke="#5f6068" stroke-width="1.6"/><path d="M792.6 575.4L764.1 584.7" stroke="#5f6068" stroke-width="1.6"/><path d="M787.8 557.6L758.5 563.8" stroke="#5f6068" stroke-width="1.6"/><path d="M785.0 539.4L755.1 542.5" stroke="#5f6068" stroke-width="1.6"/><path d="M1149.0 521.0L1180.0 521.0" stroke="#7c7d85" stroke-width="1.2"/><path d="M1148.3 504.9L1179.2 502.0" stroke="#7c7d85" stroke-width="1.2"/><path d="M1146.1 488.9L1176.7 483.1" stroke="#7c7d85" stroke-width="1.2"/><path d="M1142.6 473.1L1172.5 464.6" stroke="#7c7d85" stroke-width="1.2"/><path d="M1137.6 457.7L1166.7 446.4" stroke="#7c7d85" stroke-width="1.2"/><path d="M1131.3 442.8L1159.4 428.9" stroke="#7c7d85" stroke-width="1.2"/><path d="M1123.7 428.5L1150.5 412.0" stroke="#7c7d85" stroke-width="1.2"/><path d="M1114.8 414.9L1140.2 396.0" stroke="#7c7d85" stroke-width="1.2"/><path d="M1104.8 402.1L1128.5 380.9" stroke="#7c7d85" stroke-width="1.2"/><path d="M1093.6 390.2L1115.6 366.9" stroke="#7c7d85" stroke-width="1.2"/><path d="M1081.5 379.3L1101.4 354.0" stroke="#7c7d85" stroke-width="1.2"/><path d="M1068.4 369.5L1086.2 342.4" stroke="#7c7d85" stroke-width="1.2"/><path d="M1054.5 360.8L1070.0 332.2" stroke="#7c7d85" stroke-width="1.2"/><path d="M1039.9 353.3L1053.0 323.4" stroke="#7c7d85" stroke-width="1.2"/><path d="M1024.6 347.2L1035.2 316.1" stroke="#7c7d85" stroke-width="1.2"/><path d="M1008.9 342.3L1016.9 310.4" stroke="#7c7d85" stroke-width="1.2"/><path d="M992.8 338.8L998.2 306.3" stroke="#7c7d85" stroke-width="1.2"/><path d="M976.5 336.7L979.2 303.8" stroke="#7c7d85" stroke-width="1.2"/><path d="M960.0 336.0L960.0 303.0" stroke="#7c7d85" stroke-width="1.2"/><path d="M943.5 336.7L940.8 303.8" stroke="#7c7d85" stroke-width="1.2"/><path d="M927.2 338.8L921.8 306.3" stroke="#7c7d85" stroke-width="1.2"/><path d="M911.1 342.3L903.1 310.4" stroke="#7c7d85" stroke-width="1.2"/><path d="M895.4 347.2L884.8 316.1" stroke="#7c7d85" stroke-width="1.2"/><path d="M880.1 353.3L867.0 323.4" stroke="#7c7d85" stroke-width="1.2"/><path d="M865.5 360.8L850.0 332.2" stroke="#7c7d85" stroke-width="1.2"/><path d="M851.6 369.5L833.8 342.4" stroke="#7c7d85" stroke-width="1.2"/><path d="M838.5 379.3L818.6 354.0" stroke="#7c7d85" stroke-width="1.2"/><path d="M826.4 390.2L804.4 366.9" stroke="#7c7d85" stroke-width="1.2"/><path d="M815.2 402.1L791.5 380.9" stroke="#7c7d85" stroke-width="1.2"/><path d="M805.2 414.9L779.8 396.0" stroke="#7c7d85" stroke-width="1.2"/><path d="M796.3 428.5L769.5 412.0" stroke="#7c7d85" stroke-width="1.2"/><path d="M788.7 442.8L760.6 428.9" stroke="#7c7d85" stroke-width="1.2"/><path d="M782.4 457.7L753.3 446.4" stroke="#7c7d85" stroke-width="1.2"/><path d="M777.4 473.1L747.5 464.6" stroke="#7c7d85" stroke-width="1.2"/><path d="M773.9 488.9L743.3 483.1" stroke="#7c7d85" stroke-width="1.2"/><path d="M771.7 504.9L740.8 502.0" stroke="#7c7d85" stroke-width="1.2"/><path d="M1173.0 521.0L1180.0 521.0" stroke="#3e4048" stroke-width="1.2"/><path d="M1172.3 537.7L1179.3 538.1" stroke="#3e4048" stroke-width="1.2"/><path d="M1170.4 554.3L1177.3 555.1" stroke="#3e4048" stroke-width="1.2"/><path d="M1167.1 570.7L1173.9 571.9" stroke="#3e4048" stroke-width="1.2"/><path d="M1162.6 586.8L1169.2 588.4" stroke="#3e4048" stroke-width="1.2"/><path d="M1156.8 602.5L1163.3 604.4" stroke="#3e4048" stroke-width="1.2"/><path d="M1149.8 617.7L1156.0 620.0" stroke="#3e4048" stroke-width="1.2"/><path d="M1141.6 632.3L1147.6 634.9" stroke="#3e4048" stroke-width="1.2"/><path d="M1132.3 646.2L1138.0 649.1" stroke="#3e4048" stroke-width="1.2"/><path d="M1122.0 659.3L1127.3 662.6" stroke="#3e4048" stroke-width="1.2"/><path d="M1110.6 671.6L1115.6 675.1" stroke="#3e4048" stroke-width="1.2"/><path d="M1098.3 683.0L1102.9 686.8" stroke="#3e4048" stroke-width="1.2"/><path d="M1085.2 693.3L1089.3 697.4" stroke="#3e4048" stroke-width="1.2"/><path d="M1071.3 702.6L1074.9 706.9" stroke="#3e4048" stroke-width="1.2"/><path d="M1056.7 710.8L1059.9 715.2" stroke="#3e4048" stroke-width="1.2"/><path d="M1041.5 717.8L1044.2 722.4" stroke="#3e4048" stroke-width="1.2"/><path d="M1025.8 723.6L1028.0 728.3" stroke="#3e4048" stroke-width="1.2"/><path d="M1009.7 728.1L1011.4 733.0" stroke="#3e4048" stroke-width="1.2"/><path d="M993.3 731.4L994.4 736.3" stroke="#3e4048" stroke-width="1.2"/><path d="M976.7 733.3L977.3 738.3" stroke="#3e4048" stroke-width="1.2"/><path d="M960.0 734.0L960.0 739.0" stroke="#3e4048" stroke-width="1.2"/><path d="M943.3 733.3L942.7 738.3" stroke="#3e4048" stroke-width="1.2"/><path d="M926.7 731.4L925.6 736.3" stroke="#3e4048" stroke-width="1.2"/><path d="M910.3 728.1L908.6 733.0" stroke="#3e4048" stroke-width="1.2"/><path d="M894.2 723.6L892.0 728.3" stroke="#3e4048" stroke-width="1.2"/><path d="M878.5 717.8L875.8 722.4" stroke="#3e4048" stroke-width="1.2"/><path d="M863.3 710.8L860.1 715.2" stroke="#3e4048" stroke-width="1.2"/><path d="M848.7 702.6L845.1 706.9" stroke="#3e4048" stroke-width="1.2"/><path d="M834.8 693.3L830.7 697.4" stroke="#3e4048" stroke-width="1.2"/><path d="M821.7 683.0L817.1 686.8" stroke="#3e4048" stroke-width="1.2"/><path d="M809.4 671.6L804.4 675.1" stroke="#3e4048" stroke-width="1.2"/><path d="M798.0 659.3L792.7 662.6" stroke="#3e4048" stroke-width="1.2"/><path d="M787.7 646.2L782.0 649.1" stroke="#3e4048" stroke-width="1.2"/><path d="M778.4 632.3L772.4 634.9" stroke="#3e4048" stroke-width="1.2"/><path d="M770.2 617.7L764.0 620.0" stroke="#3e4048" stroke-width="1.2"/><path d="M763.2 602.5L756.7 604.4" stroke="#3e4048" stroke-width="1.2"/><path d="M757.4 586.8L750.8 588.4" stroke="#3e4048" stroke-width="1.2"/><path d="M752.9 570.7L746.1 571.9" stroke="#3e4048" stroke-width="1.2"/><path d="M749.6 554.3L742.7 555.1" stroke="#3e4048" stroke-width="1.2"/><path d="M747.7 537.7L740.7 538.1" stroke="#3e4048" stroke-width="1.2"/><path d="M1151.0 521.0A191 191 0 0 1 769.0 521.0" fill="none" stroke="#55565e" stroke-width="2" stroke-dasharray="9 5"/><path d="M1158.0 521.0A198 198 0 0 1 762.0 521.0" fill="none" stroke="#d6d6da" stroke-width="5" stroke-dasharray="16 4" opacity=".55"/><path d="M1142.0 521.0A182 182 0 0 1 778.0 521.0" fill="none" stroke="#cfcfd3" stroke-width="4" stroke-dasharray="11 6" opacity=".5"/><path d="M792 521A168 160 0 0 1 1128 521" fill="none" stroke="#343a4c" stroke-width="2"/><path d="M771 521A189 185 0 0 1 1149 521" fill="none" stroke="#bfc0c4" stroke-width="11" stroke-dasharray="13 3" opacity=".85"/><path d="M1108.2 499.4L1145.7 492.2" stroke="#394054" stroke-width="1.4"/><path d="M1102.7 478.4L1138.8 464.1" stroke="#394054" stroke-width="1.4"/><path d="M1093.7 458.3L1127.5 437.5" stroke="#394054" stroke-width="1.4"/><path d="M1081.4 439.9L1112.1 412.8" stroke="#394054" stroke-width="1.4"/><path d="M1066.1 423.4L1092.9 390.9" stroke="#394054" stroke-width="1.4"/><path d="M1048.2 409.4L1070.5 372.1" stroke="#394054" stroke-width="1.4"/><path d="M1028.1 398.0L1045.4 357.1" stroke="#394054" stroke-width="1.4"/><path d="M1006.4 389.8L1018.1 346.0" stroke="#394054" stroke-width="1.4"/><path d="M983.5 384.7L989.4 339.3" stroke="#394054" stroke-width="1.4"/><path d="M960.0 383.0L960.0 337.0" stroke="#394054" stroke-width="1.4"/><path d="M936.5 384.7L930.6 339.3" stroke="#394054" stroke-width="1.4"/><path d="M913.6 389.8L901.9 346.0" stroke="#394054" stroke-width="1.4"/><path d="M891.9 398.0L874.6 357.1" stroke="#394054" stroke-width="1.4"/><path d="M871.8 409.4L849.5 372.1" stroke="#394054" stroke-width="1.4"/><path d="M853.9 423.4L827.1 390.9" stroke="#394054" stroke-width="1.4"/><path d="M838.6 439.9L807.9 412.8" stroke="#394054" stroke-width="1.4"/><path d="M826.3 458.3L792.5 437.5" stroke="#394054" stroke-width="1.4"/><path d="M817.3 478.4L781.2 464.1" stroke="#394054" stroke-width="1.4"/><path d="M811.8 499.4L774.3 492.2" stroke="#394054" stroke-width="1.4"/><rect x="1026.5" y="363.5" width="1.5" height="1.6" fill="#f3b552"/><rect x="1042.0" y="363.7" width="1.5" height="1.6" fill="#c9cdd8"/><rect x="1110.8" y="458.4" width="1.5" height="2" fill="#f3b552"/><rect x="800.8" y="514.8" width="2.5" height="1.2" fill="#c9cdd8"/><rect x="803.6" y="438.2" width="2" height="2" fill="#c9cdd8"/><rect x="819.6" y="466.4" width="1.5" height="1.2" fill="#f3b552"/><rect x="1116.4" y="502.6" width="2" height="1.6" fill="#d98a2c"/><rect x="1128.6" y="501.4" width="2" height="1.2" fill="#f3b552"/><rect x="1140.5" y="502.5" width="2.5" height="1.2" fill="#d98a2c"/><rect x="911.7" y="349.6" width="2.5" height="1.2" fill="#d98a2c"/><rect x="859.5" y="387.4" width="1.5" height="2" fill="#d98a2c"/><rect x="799.7" y="489.1" width="2.5" height="1.6" fill="#d98a2c"/><rect x="819.8" y="433.6" width="2" height="1.2" fill="#d98a2c"/><rect x="1112.5" y="509.9" width="2.5" height="1.6" fill="#e9a13a"/><rect x="985.5" y="365.5" width="3" height="2" fill="#e9a13a"/><rect x="934.1" y="354.2" width="2" height="1.2" fill="#f3b552"/><rect x="1138.6" y="482.0" width="2.5" height="2" fill="#d98a2c"/><rect x="1111.4" y="471.2" width="3" height="1.2" fill="#d98a2c"/><rect x="1098.7" y="460.3" width="1.5" height="1.2" fill="#d98a2c"/><rect x="966.6" y="366.0" width="2" height="1.6" fill="#d98a2c"/><rect x="1125.3" y="482.7" width="2.5" height="2" fill="#d98a2c"/><rect x="858.0" y="379.7" width="2" height="2" fill="#d98a2c"/><rect x="1117.5" y="519.5" width="1.5" height="1.2" fill="#c9cdd8"/><rect x="784.4" y="504.0" width="2.5" height="1.6" fill="#c9cdd8"/><rect x="1031.7" y="390.6" width="1.5" height="1.6" fill="#d98a2c"/><rect x="1096.8" y="450.0" width="2" height="2" fill="#c9cdd8"/><rect x="802.8" y="469.1" width="2" height="1.2" fill="#c9cdd8"/><rect x="859.6" y="394.2" width="2" height="2" fill="#c9cdd8"/><rect x="1133.4" y="500.0" width="2.5" height="1.6" fill="#d98a2c"/><rect x="859.0" y="396.8" width="2" height="1.2" fill="#c9cdd8"/><rect x="1103.8" y="435.2" width="2" height="2" fill="#c9cdd8"/><rect x="1104.7" y="461.3" width="3" height="1.6" fill="#d98a2c"/><rect x="785.2" y="487.1" width="2.5" height="2" fill="#e9a13a"/><rect x="1079.5" y="414.7" width="2.5" height="1.6" fill="#d98a2c"/><rect x="1091.1" y="409.8" width="2.5" height="1.6" fill="#f3b552"/><rect x="998.3" y="384.2" width="2.5" height="1.6" fill="#d98a2c"/><rect x="939.2" y="349.2" width="2.5" height="1.6" fill="#d98a2c"/><rect x="1037.1" y="368.2" width="3" height="1.6" fill="#f3b552"/><rect x="1120.4" y="454.3" width="2.5" height="1.6" fill="#f3b552"/><rect x="974.5" y="374.2" width="2.5" height="1.6" fill="#d98a2c"/><rect x="1059.5" y="381.5" width="3" height="1.2" fill="#c9cdd8"/><rect x="861.0" y="388.6" width="2.5" height="2" fill="#e9a13a"/><rect x="819.9" y="426.5" width="2" height="1.2" fill="#f3b552"/><rect x="1021.4" y="390.4" width="3" height="1.2" fill="#f3b552"/><rect x="805.7" y="496.3" width="2.5" height="1.2" fill="#c9cdd8"/><rect x="834.1" y="439.8" width="3" height="1.6" fill="#c9cdd8"/><rect x="1035.5" y="395.7" width="2" height="1.2" fill="#d98a2c"/><rect x="794.5" y="520.7" width="2.5" height="1.6" fill="#e9a13a"/><rect x="1055.1" y="386.4" width="1.5" height="2" fill="#d98a2c"/><rect x="797.4" y="473.4" width="2.5" height="2" fill="#d98a2c"/><rect x="1137.5" y="498.4" width="3" height="1.6" fill="#d98a2c"/><rect x="943.9" y="374.8" width="3" height="2" fill="#c9cdd8"/><rect x="1142.3" y="497.0" width="1.5" height="1.6" fill="#e9a13a"/><rect x="900.9" y="377.8" width="2" height="1.6" fill="#c9cdd8"/><rect x="919.4" y="346.1" width="3" height="1.6" fill="#c9cdd8"/><rect x="1124.0" y="507.5" width="2" height="2" fill="#d98a2c"/><rect x="1071.3" y="410.0" width="2.5" height="1.6" fill="#e9a13a"/><rect x="860.7" y="369.6" width="3" height="1.6" fill="#f3b552"/><rect x="948.7" y="375.7" width="3" height="1.2" fill="#d98a2c"/><rect x="804.6" y="502.7" width="3" height="1.2" fill="#c9cdd8"/><rect x="976.5" y="370.2" width="3" height="1.2" fill="#f3b552"/><rect x="954.4" y="347.0" width="2.5" height="1.6" fill="#c9cdd8"/><rect x="1015.9" y="370.6" width="1.5" height="1.2" fill="#f3b552"/><rect x="860.6" y="389.9" width="2.5" height="2" fill="#d98a2c"/><rect x="1061.7" y="414.9" width="2.5" height="1.6" fill="#f3b552"/><rect x="800.6" y="503.8" width="3" height="2" fill="#e9a13a"/><rect x="1119.7" y="465.0" width="1.5" height="1.6" fill="#c9cdd8"/><rect x="1011.3" y="360.4" width="3" height="1.6" fill="#c9cdd8"/><rect x="900.0" y="356.6" width="2" height="1.6" fill="#c9cdd8"/><rect x="1092.9" y="448.0" width="1.5" height="2" fill="#c9cdd8"/><rect x="1004.3" y="360.1" width="3" height="1.6" fill="#f3b552"/><rect x="808.1" y="437.5" width="3" height="1.6" fill="#f3b552"/><rect x="920.6" y="363.3" width="1.5" height="1.2" fill="#f3b552"/><rect x="856.5" y="413.7" width="1.5" height="2" fill="#e9a13a"/><rect x="876.7" y="384.5" width="1.5" height="1.6" fill="#c9cdd8"/><rect x="782.3" y="494.4" width="2" height="2" fill="#e9a13a"/><rect x="1056.9" y="406.2" width="2.5" height="2" fill="#c9cdd8"/><rect x="806.5" y="446.3" width="3" height="1.2" fill="#e9a13a"/><rect x="1017.6" y="388.9" width="1.5" height="2" fill="#c9cdd8"/><rect x="1072.5" y="412.1" width="1.5" height="2" fill="#c9cdd8"/><rect x="1105.3" y="466.5" width="3" height="1.2" fill="#d98a2c"/><rect x="1052.6" y="387.3" width="2.5" height="2" fill="#d98a2c"/><rect x="1111.2" y="482.3" width="2.5" height="1.2" fill="#d98a2c"/><rect x="1123.7" y="475.8" width="2" height="1.6" fill="#e9a13a"/><rect x="985.9" y="372.1" width="2.5" height="2" fill="#f3b552"/><rect x="1108.7" y="421.8" width="3" height="2" fill="#c9cdd8"/><rect x="811.5" y="430.8" width="2.5" height="1.2" fill="#e9a13a"/><rect x="810.1" y="479.8" width="3" height="1.2" fill="#c9cdd8"/><rect x="1115.6" y="460.8" width="2.5" height="1.2" fill="#e9a13a"/><rect x="981.7" y="366.4" width="2" height="1.6" fill="#f3b552"/><rect x="891.4" y="659.5" width="2" height="1.6" fill="#d98a2c"/><rect x="962.5" y="678.0" width="2" height="1.6" fill="#d98a2c"/><rect x="923.6" y="676.5" width="2" height="1.6" fill="#e9a13a"/><rect x="1024.4" y="679.1" width="2" height="1.6" fill="#d98a2c"/><rect x="1004.1" y="675.1" width="2" height="1.6" fill="#e9a13a"/><rect x="896.3" y="667.6" width="2" height="1.6" fill="#f3b552"/><rect x="874.2" y="657.5" width="2" height="1.6" fill="#f3b552"/><rect x="954.7" y="685.2" width="2" height="1.6" fill="#d98a2c"/><rect x="1038.4" y="656.4" width="2" height="1.6" fill="#e9a13a"/><rect x="1063.8" y="634.2" width="2" height="1.6" fill="#e9a13a"/><rect x="1046.3" y="658.5" width="2" height="1.6" fill="#f3b552"/><rect x="913.3" y="673.6" width="2" height="1.6" fill="#f3b552"/><rect x="969.3" y="690.6" width="2" height="1.6" fill="#d98a2c"/><rect x="848.5" y="634.5" width="2" height="1.6" fill="#f3b552"/><rect x="1064.8" y="636.5" width="2" height="1.6" fill="#e9a13a"/><rect x="1080.4" y="640.3" width="2" height="1.6" fill="#f3b552"/><rect x="1054.3" y="647.5" width="2" height="1.6" fill="#f3b552"/><rect x="867.4" y="660.3" width="2" height="1.6" fill="#d98a2c"/><rect x="1036.0" y="664.3" width="2" height="1.6" fill="#e9a13a"/><rect x="1007.3" y="681.5" width="2" height="1.6" fill="#f3b552"/><rect x="840.1" y="635.9" width="2" height="1.6" fill="#d98a2c"/><rect x="973.5" y="689.6" width="2" height="1.6" fill="#e9a13a"/><rect x="1067.2" y="647.3" width="2" height="1.6" fill="#f3b552"/><rect x="973.4" y="678.0" width="2" height="1.6" fill="#e9a13a"/><rect x="1086.1" y="629.8" width="2" height="1.6" fill="#d98a2c"/><rect x="1033.6" y="656.8" width="2" height="1.6" fill="#f3b552"/><rect x="845.6" y="641.8" width="2" height="1.6" fill="#d98a2c"/><rect x="1015.0" y="673.3" width="2" height="1.6" fill="#f3b552"/><rect x="1083.0" y="641.0" width="2" height="1.6" fill="#f3b552"/><rect x="1051.5" y="649.2" width="2" height="1.6" fill="#d98a2c"/><ellipse cx="960" cy="527" rx="149" ry="143.5" fill="#040408"/><path d="M920 481L818 390" stroke="#5b5e68" stroke-width="15"/><path d="M920 481L818 390" stroke="#9a9ca3" stroke-width="7" stroke-dasharray="2 2"/><path d="M810 381L774 345" stroke="#4e5058" stroke-width="18" stroke-dasharray="3 1.6"/><rect x="-13" y="-26" width="26" height="52" fill="#c4c5c9" stroke="#6c6e76" stroke-width="1.5" transform="translate(826 396) rotate(45)"/><rect x="-18" y="-27" width="36" height="54" rx="4" fill="url(#modv)" stroke="#3c3e46" stroke-width="1.2" transform="translate(901 470) rotate(135)"/><path d="M1000 481L1102 390" stroke="#5b5e68" stroke-width="15"/><path d="M1000 481L1102 390" stroke="#9a9ca3" stroke-width="7" stroke-dasharray="2 2"/><path d="M1110 381L1146 345" stroke="#4e5058" stroke-width="18" stroke-dasharray="3 1.6"/><rect x="-13" y="-26" width="26" height="52" fill="#c4c5c9" stroke="#6c6e76" stroke-width="1.5" transform="translate(1094 396) rotate(-45)"/><rect x="-18" y="-27" width="36" height="54" rx="4" fill="url(#modv)" stroke="#3c3e46" stroke-width="1.2" transform="translate(1019 470) rotate(45)"/><path d="M920 561L818 652" stroke="#5b5e68" stroke-width="15"/><path d="M920 561L818 652" stroke="#9a9ca3" stroke-width="7" stroke-dasharray="2 2"/><path d="M810 661L774 697" stroke="#4e5058" stroke-width="18" stroke-dasharray="3 1.6"/><rect x="-13" y="-26" width="26" height="52" fill="#c4c5c9" stroke="#6c6e76" stroke-width="1.5" transform="translate(826 646) rotate(-45)"/><rect x="-18" y="-27" width="36" height="54" rx="4" fill="url(#modv)" stroke="#3c3e46" stroke-width="1.2" transform="translate(901 572) rotate(45)"/><path d="M1000 561L1102 652" stroke="#5b5e68" stroke-width="15"/><path d="M1000 561L1102 652" stroke="#9a9ca3" stroke-width="7" stroke-dasharray="2 2"/><path d="M1110 661L1146 697" stroke="#4e5058" stroke-width="18" stroke-dasharray="3 1.6"/><rect x="-13" y="-26" width="26" height="52" fill="#c4c5c9" stroke="#6c6e76" stroke-width="1.5" transform="translate(1094 646) rotate(45)"/><rect x="-18" y="-27" width="36" height="54" rx="4" fill="url(#modv)" stroke="#3c3e46" stroke-width="1.2" transform="translate(1019 572) rotate(135)"/><g><rect x="959" y="206" width="3" height="56" fill="#8f9198"/><rect x="950" y="227" width="23" height="15" fill="#9a9ca2"/><rect x="940" y="229" width="42" height="3" fill="#a8a9ae"/><rect x="943.5" y="262" width="35" height="36" fill="url(#armv)" stroke="#4a4c54" stroke-width="1"/><rect x="937" y="276" width="48" height="30" fill="#8a8c93" opacity=".55"/><rect x="947.5" y="296" width="27" height="73" fill="url(#armv)" stroke="#4a4c54" stroke-width="1"/><rect x="954" y="369" width="15" height="26" fill="#62646d"/><rect x="957" y="378" width="9" height="12" fill="#c9cace"/><rect x="958" y="310" width="7" height="14" fill="#2a2c34"/><rect x="951" y="268" width="20" height="10" fill="#5a5c64"/><rect x="937" y="394" width="49" height="67" rx="5" fill="url(#modv)" stroke="#2c2e36" stroke-width="1.2"/><rect x="980" y="398" width="9" height="20" fill="#8d8f96"/><rect x="942" y="430" width="38" height="3" fill="#3c3e46"/><rect x="954" y="461" width="16" height="14" fill="#5b5d66"/><rect x="952" y="566" width="18" height="22" fill="#5b5d66"/><rect x="935" y="586" width="54" height="73" fill="#3b404e" stroke="#6b6f7c" stroke-width="1.2"/><rect x="941" y="592" width="42" height="60" fill="#2d3240"/><rect x="957" y="598" width="10" height="26" fill="#555a69"/><rect x="943" y="640" width="38" height="4" fill="#c9a24a" opacity=".7"/><rect x="953" y="659" width="18" height="22" fill="#62646d"/><rect x="928" y="735" width="66" height="60" fill="#666870" stroke="#4a4c54" stroke-width="1"/><rect x="947.5" y="680" width="27" height="110" fill="url(#armv)" stroke="#4a4c54" stroke-width="1"/><rect x="943" y="770" width="36" height="26" fill="#9c9ea4" stroke="#4a4c54" stroke-width="1"/><rect x="946" y="796" width="30" height="22" fill="#85878e"/><rect x="956" y="818" width="10" height="30" fill="#6c6e76"/><rect x="940" y="826" width="42" height="2" fill="#8a8c93"/><rect x="956" y="715" width="9" height="26" fill="#55575f"/><rect x="652" y="521" width="42" height="11" fill="#6c6e76"/><path d="M654 526.5L692 526.5" stroke="#2e3038" stroke-width="7" stroke-dasharray="2 5"/><rect x="693" y="516" width="22" height="18" fill="#a2a3a9" stroke="#4a4c54" stroke-width="1"/><rect x="713" y="507.5" width="86" height="32" fill="url(#armh)" stroke="#4a4c54" stroke-width="1"/><rect x="694" y="540" width="66" height="15" fill="#1e2230"/><rect x="716" y="544" width="28" height="9" fill="#3a4356"/><rect x="798" y="514" width="22" height="20" fill="#62646d"/><rect x="819" y="505" width="52" height="45" rx="4" fill="url(#modh)" stroke="#2c2e36" stroke-width="1.2"/><rect x="870" y="511" width="44" height="30" fill="#74767e" stroke="#2c2e36" stroke-width="1"/><rect x="846" y="509" width="4" height="38" fill="#3c3e46"/><rect x="1006" y="511" width="46" height="30" fill="#74767e" stroke="#2c2e36" stroke-width="1"/><rect x="1052" y="505" width="52" height="45" rx="4" fill="url(#modh)" stroke="#2c2e36" stroke-width="1.2"/><rect x="1102" y="514" width="24" height="20" fill="#62646d"/><rect x="1074" y="509" width="4" height="38" fill="#3c3e46"/><rect x="1124" y="507.5" width="86" height="32" fill="url(#armh)" stroke="#4a4c54" stroke-width="1"/><rect x="1208" y="516" width="20" height="18" fill="#a2a3a9" stroke="#4a4c54" stroke-width="1"/><rect x="1146" y="541" width="68" height="21" fill="#1e2230"/><rect x="1156" y="546" width="40" height="12" fill="#343c4e"/><rect x="1228" y="521" width="38" height="11" fill="#6c6e76"/><path d="M1230 526.5L1266 526.5" stroke="#2e3038" stroke-width="7" stroke-dasharray="2 5"/></g><path d="M948 301.8L974 301.8" stroke="#4a4c54" stroke-width="1"/><path d="M948 309.8L974 309.8" stroke="#4a4c54" stroke-width="1"/><path d="M948 318.3L974 318.3" stroke="#4a4c54" stroke-width="1"/><path d="M948 325.2L974 325.2" stroke="#4a4c54" stroke-width="1"/><path d="M948 333.0L974 333.0" stroke="#4a4c54" stroke-width="1"/><path d="M948 341.0L974 341.0" stroke="#4a4c54" stroke-width="1"/><path d="M948 347.9L974 347.9" stroke="#4a4c54" stroke-width="1"/><path d="M948 356.4L974 356.4" stroke="#4a4c54" stroke-width="1"/><path d="M948 364.4L974 364.4" stroke="#4a4c54" stroke-width="1"/><path d="M944 267.8L978 267.8" stroke="#4a4c54" stroke-width="1"/><path d="M944 274.9L978 274.9" stroke="#4a4c54" stroke-width="1"/><path d="M944 283.9L978 283.9" stroke="#4a4c54" stroke-width="1"/><path d="M944 291.9L978 291.9" stroke="#4a4c54" stroke-width="1"/><path d="M938 400.6L985 400.6" stroke="#3a3c44" stroke-width="1.2"/><path d="M938 408.4L985 408.4" stroke="#3a3c44" stroke-width="1.2"/><path d="M938 415.1L985 415.1" stroke="#3a3c44" stroke-width="1.2"/><path d="M938 425.0L985 425.0" stroke="#3a3c44" stroke-width="1.2"/><path d="M938 432.9L985 432.9" stroke="#3a3c44" stroke-width="1.2"/><path d="M938 440.3L985 440.3" stroke="#3a3c44" stroke-width="1.2"/><path d="M938 448.2L985 448.2" stroke="#3a3c44" stroke-width="1.2"/><path d="M938 455.3L985 455.3" stroke="#3a3c44" stroke-width="1.2"/><path d="M948 685.5L974 685.5" stroke="#4a4c54" stroke-width="1"/><path d="M948 695.6L974 695.6" stroke="#4a4c54" stroke-width="1"/><path d="M948 703.6L974 703.6" stroke="#4a4c54" stroke-width="1"/><path d="M948 712.9L974 712.9" stroke="#4a4c54" stroke-width="1"/><path d="M948 722.0L974 722.0" stroke="#4a4c54" stroke-width="1"/><path d="M948 730.6L974 730.6" stroke="#4a4c54" stroke-width="1"/><path d="M948 740.4L974 740.4" stroke="#4a4c54" stroke-width="1"/><path d="M948 749.4L974 749.4" stroke="#4a4c54" stroke-width="1"/><path d="M948 759.2L974 759.2" stroke="#4a4c54" stroke-width="1"/><path d="M948 767.5L974 767.5" stroke="#4a4c54" stroke-width="1"/><path d="M948 776.8L974 776.8" stroke="#4a4c54" stroke-width="1"/><path d="M948 785.5L974 785.5" stroke="#4a4c54" stroke-width="1"/><path d="M929 741.4L993 741.4" stroke="#44464e" stroke-width="1.2"/><path d="M929 749.1L993 749.1" stroke="#44464e" stroke-width="1.2"/><path d="M929 756.9L993 756.9" stroke="#44464e" stroke-width="1.2"/><path d="M929 766.5L993 766.5" stroke="#44464e" stroke-width="1.2"/><path d="M929 774.6L993 774.6" stroke="#44464e" stroke-width="1.2"/><path d="M929 782.5L993 782.5" stroke="#44464e" stroke-width="1.2"/><path d="M929 790.3L993 790.3" stroke="#44464e" stroke-width="1.2"/><path d="M717.4 509L717.4 538" stroke="#4a4c54" stroke-width="1"/><path d="M724.9 509L724.9 538" stroke="#4a4c54" stroke-width="1"/><path d="M732.7 509L732.7 538" stroke="#4a4c54" stroke-width="1"/><path d="M739.9 509L739.9 538" stroke="#4a4c54" stroke-width="1"/><path d="M748.9 509L748.9 538" stroke="#4a4c54" stroke-width="1"/><path d="M755.8 509L755.8 538" stroke="#4a4c54" stroke-width="1"/><path d="M764.3 509L764.3 538" stroke="#4a4c54" stroke-width="1"/><path d="M771.0 509L771.0 538" stroke="#4a4c54" stroke-width="1"/><path d="M779.8 509L779.8 538" stroke="#4a4c54" stroke-width="1"/><path d="M787.2 509L787.2 538" stroke="#4a4c54" stroke-width="1"/><path d="M793.2 509L793.2 538" stroke="#4a4c54" stroke-width="1"/><path d="M1128.2 509L1128.2 538" stroke="#4a4c54" stroke-width="1"/><path d="M1137.3 509L1137.3 538" stroke="#4a4c54" stroke-width="1"/><path d="M1144.0 509L1144.0 538" stroke="#4a4c54" stroke-width="1"/><path d="M1152.7 509L1152.7 538" stroke="#4a4c54" stroke-width="1"/><path d="M1159.2 509L1159.2 538" stroke="#4a4c54" stroke-width="1"/><path d="M1166.1 509L1166.1 538" stroke="#4a4c54" stroke-width="1"/><path d="M1174.9 509L1174.9 538" stroke="#4a4c54" stroke-width="1"/><path d="M1182.8 509L1182.8 538" stroke="#4a4c54" stroke-width="1"/><path d="M1189.4 509L1189.4 538" stroke="#4a4c54" stroke-width="1"/><path d="M1196.7 509L1196.7 538" stroke="#4a4c54" stroke-width="1"/><path d="M1204.8 509L1204.8 538" stroke="#4a4c54" stroke-width="1"/><path d="M825.1 506L825.1 549" stroke="#3a3c44" stroke-width="1.2"/><path d="M833.0 506L833.0 549" stroke="#3a3c44" stroke-width="1.2"/><path d="M840.1 506L840.1 549" stroke="#3a3c44" stroke-width="1.2"/><path d="M848.7 506L848.7 549" stroke="#3a3c44" stroke-width="1.2"/><path d="M856.7 506L856.7 549" stroke="#3a3c44" stroke-width="1.2"/><path d="M865.0 506L865.0 549" stroke="#3a3c44" stroke-width="1.2"/><path d="M1057.8 506L1057.8 549" stroke="#3a3c44" stroke-width="1.2"/><path d="M1064.9 506L1064.9 549" stroke="#3a3c44" stroke-width="1.2"/><path d="M1074.0 506L1074.0 549" stroke="#3a3c44" stroke-width="1.2"/><path d="M1082.1 506L1082.1 549" stroke="#3a3c44" stroke-width="1.2"/><path d="M1089.9 506L1089.9 549" stroke="#3a3c44" stroke-width="1.2"/><path d="M1099.3 506L1099.3 549" stroke="#3a3c44" stroke-width="1.2"/><path d="M875.3 512L875.3 540" stroke="#33353d" stroke-width="1.2"/><path d="M884.3 512L884.3 540" stroke="#33353d" stroke-width="1.2"/><path d="M891.2 512L891.2 540" stroke="#33353d" stroke-width="1.2"/><path d="M899.8 512L899.8 540" stroke="#33353d" stroke-width="1.2"/><path d="M907.4 512L907.4 540" stroke="#33353d" stroke-width="1.2"/><path d="M1011.7 512L1011.7 540" stroke="#33353d" stroke-width="1.2"/><path d="M1021.5 512L1021.5 540" stroke="#33353d" stroke-width="1.2"/><path d="M1029.6 512L1029.6 540" stroke="#33353d" stroke-width="1.2"/><path d="M1037.0 512L1037.0 540" stroke="#33353d" stroke-width="1.2"/><path d="M1046.6 512L1046.6 540" stroke="#33353d" stroke-width="1.2"/><path d="M713 524L799 524M1125 524L1209 524" stroke="#5a5c64" stroke-width="2"/><path d="M961 298L961 368M961 682L961 790" stroke="#6c6e76" stroke-width="2"/><circle cx="960" cy="521" r="50" fill="url(#hubl)" stroke="#2a2c34" stroke-width="1.5"/><path d="M991.8 524.2L1007.8 525.8" stroke="#3a3d48" stroke-width="1.6" opacity=".8"/><path d="M988.2 536.1L1002.3 543.7" stroke="#3a3d48" stroke-width="1.6" opacity=".8"/><path d="M980.3 545.8L990.4 558.2" stroke="#3a3d48" stroke-width="1.6" opacity=".8"/><path d="M969.2 551.6L973.8 567.0" stroke="#3a3d48" stroke-width="1.6" opacity=".8"/><path d="M956.8 552.8L955.2 568.8" stroke="#3a3d48" stroke-width="1.6" opacity=".8"/><path d="M944.9 549.2L937.3 563.3" stroke="#3a3d48" stroke-width="1.6" opacity=".8"/><path d="M935.2 541.3L922.8 551.4" stroke="#3a3d48" stroke-width="1.6" opacity=".8"/><path d="M929.4 530.2L914.0 534.8" stroke="#3a3d48" stroke-width="1.6" opacity=".8"/><path d="M928.2 517.8L912.2 516.2" stroke="#3a3d48" stroke-width="1.6" opacity=".8"/><path d="M931.8 505.9L917.7 498.3" stroke="#3a3d48" stroke-width="1.6" opacity=".8"/><path d="M939.7 496.2L929.6 483.8" stroke="#3a3d48" stroke-width="1.6" opacity=".8"/><path d="M950.8 490.4L946.2 475.0" stroke="#3a3d48" stroke-width="1.6" opacity=".8"/><path d="M963.2 489.2L964.8 473.2" stroke="#3a3d48" stroke-width="1.6" opacity=".8"/><path d="M975.1 492.8L982.7 478.7" stroke="#3a3d48" stroke-width="1.6" opacity=".8"/><path d="M984.8 500.7L997.2 490.6" stroke="#3a3d48" stroke-width="1.6" opacity=".8"/><path d="M990.6 511.8L1006.0 507.2" stroke="#3a3d48" stroke-width="1.6" opacity=".8"/><circle cx="960" cy="521" r="40" fill="none" stroke="#50535e" stroke-width="1.5"/><circle cx="960" cy="521" r="30" fill="#3a3e4a" stroke="#c6c7cb" stroke-width="2.5"/><path d="M978.0 521.0L989.0 521.0" stroke="#a6a8ae" stroke-width="2"/><path d="M974.6 531.6L983.5 538.0" stroke="#a6a8ae" stroke-width="2"/><path d="M965.6 538.1L969.0 548.6" stroke="#a6a8ae" stroke-width="2"/><path d="M954.4 538.1L951.0 548.6" stroke="#a6a8ae" stroke-width="2"/><path d="M945.4 531.6L936.5 538.0" stroke="#a6a8ae" stroke-width="2"/><path d="M942.0 521.0L931.0 521.0" stroke="#a6a8ae" stroke-width="2"/><path d="M945.4 510.4L936.5 504.0" stroke="#a6a8ae" stroke-width="2"/><path d="M954.4 503.9L951.0 493.4" stroke="#a6a8ae" stroke-width="2"/><path d="M965.6 503.9L969.0 493.4" stroke="#a6a8ae" stroke-width="2"/><path d="M974.6 510.4L983.5 504.0" stroke="#a6a8ae" stroke-width="2"/><circle cx="960" cy="521" r="17" fill="#23262f" stroke="#cfd0d4" stroke-width="2.5"/><circle cx="960" cy="521" r="9" fill="#5a5d68" stroke="#9a9ca3" stroke-width="2"/><circle cx="960" cy="521" r="4" fill="#e4e4e8"/><path d="M921 441L956 496" stroke="#b4b5ba" stroke-width="2"/></g></svg>
<div id="top"><div class="tb" style="left:5px;width:15px"><svg width="15" height="15" viewBox="0 0 15 15" style="display:block"><rect x="3.9" y="3" width="2.6" height="9" fill="#fff"/><rect x="8.5" y="3" width="2.6" height="9" fill="#fff"/></svg></div><div class="tb" style="left:25px;width:15px"><svg width="15" height="15" viewBox="0 0 15 15" style="display:block"><path d="M3.5 2.8 L12 7.5 L3.5 12.2Z" fill="#fff"/></svg></div><div class="tb" style="left:45px;width:160px;font-size:14px;line-height:17px;letter-spacing:.7px;text-align:right;padding-right:3.5px;-webkit-text-stroke:.3px #10182c">Options</div><div class="tb" style="left:210px;width:15px;color:#fff;font:italic bold 12px/15px 'Liberation Serif',serif;text-align:center">i</div><div class="tb" style="left:230px;width:15px;color:#fff;font:bold 11px/15px 'Liberation Sans',sans-serif;text-align:center">?</div><svg class="ico" style="left:769.8px;top:7.6px" width="10.6" height="10.6" viewBox="0 0 15 15"><circle cx="7.5" cy="7.5" r="6.6" fill="#f7d52f" stroke="#16152a" stroke-width="1.2"/><circle cx="7.5" cy="7.5" r="5.2" fill="none" stroke="#fbe25a" stroke-width="1"/><path d="M7.5 3 Q8.1 6.9 12 7.5 Q8.1 8.1 7.5 12 Q6.9 8.1 3 7.5 Q6.9 6.9 7.5 3Z" fill="#0c0c14"/></svg><span class="res" style="left:788.5px">8,907,679</span><svg class="ico" style="left:898.3px;top:7.6px" width="7.5" height="9.6" viewBox="0 0 8 10"><path d="M5.4 0 L0.5 5.6 L3.5 5.6 L2.4 10 L7.6 4 L4.5 4Z" fill="#f5e04a"/></svg><span class="res" style="left:915px">500 / 1,000</span><svg class="ico" style="left:1030px;top:7.5px" width="10" height="10" viewBox="0 0 15 15"><path d="M7.5 0.4 L14.3 3.8 L14.3 11.2 L7.5 14.6 L0.7 11.2 L0.7 3.8Z" fill="#74b0f6" stroke="#74b0f6" stroke-width=".8" stroke-linejoin="round"/><path d="M7.5 0.4 L14.3 3.8 L7.5 7.3 L0.7 3.8Z" fill="#90c6ff"/><path d="M7.5 7.3 L14.3 3.8 L14.3 11.2 L7.5 14.6Z" fill="#6ca8f2"/><path d="M0.9 3.9 L7.5 7.3 L14.1 3.9 M7.5 7.3 L7.5 14.4" fill="none" stroke="#2b4b7c" stroke-width="1"/></svg><span class="res" style="left:1048.5px">274 / 500</span></div>
<svg width="0" height="0" style="position:absolute"><defs><filter id="stex" x="0" y="0" width="100%" height="100%" color-interpolation-filters="sRGB"><feTurbulence type="fractalNoise" baseFrequency="0.28" numOctaves="2" seed="4" result="n"/><feColorMatrix in="n" type="matrix" values="0 0 0 0 0  0 0 0 0 0  0 0 0 0 0  2.2 0 0 0 -0.85" result="m"/><feFlood flood-color="#15171d" flood-opacity=".6" result="f"/><feComposite in="f" in2="m" operator="in" result="dk"/><feComposite in="dk" in2="SourceGraphic" operator="in" result="dk2"/><feMerge><feMergeNode in="SourceGraphic"/><feMergeNode in="dk2"/></feMerge></filter></defs></svg>
<div id="build"><div class="hdr" style="left:0;width:400px;letter-spacing:.5px;padding-right:2.5px">BUILD SHIP</div><div class="item" style="top:40px"><svg class="ico" style="left:0;top:0" width="120" height="120" viewBox="0 0 120 120"><g filter="url(#stex)"><path d="M54 13 L56 13 L57 22 L59 22 L59 15 L61 15 L62 22 L64 13 L66 13 L67 26 L68 40 L68 78 L67 100 L65 106 L55 106 L53 100 L51 78 L51 40 L52 26Z" fill="#998f82"/><path d="M67 22 L69 30" stroke="#c4bcae" stroke-width="1"/><rect x="36" y="46" width="48" height="24" rx="2" fill="#998f82"/><rect x="29" y="44" width="12" height="13" rx="2" fill="#998f82"/><rect x="29" y="59" width="12" height="13" rx="2" fill="#998f82"/><rect x="26" y="52" width="8" height="12" rx="2" fill="#998f82"/><rect x="79" y="44" width="12" height="13" rx="2" fill="#998f82"/><rect x="79" y="59" width="12" height="13" rx="2" fill="#998f82"/><rect x="86" y="52" width="8" height="12" rx="2" fill="#998f82"/><rect x="40" y="40" width="8" height="8" rx="2" fill="#998f82"/><rect x="72" y="40" width="8" height="8" rx="2" fill="#998f82"/><rect x="40" y="68" width="8" height="8" rx="2" fill="#998f82"/><rect x="72" y="68" width="8" height="8" rx="2" fill="#998f82"/><path d="M57 28 L57 100 M63 30 L63 98" stroke="#5d5750" stroke-width="1.6"/><path d="M60 20 L60 104" stroke="#c4bcae" stroke-width="1.5"/><path d="M38 58 L82 58" stroke="#5d5750" stroke-width="2.5"/><circle cx="60" cy="58" r="4.5" fill="#5d5750"/><path d="M41 50 L41 66 M79 50 L79 66 M48 47 L48 69 M72 47 L72 69" stroke="#5d5750" stroke-width="1.5"/><rect x="33.5" y="49.0" width="3" height="3" fill="#5d5750"/><rect x="33.5" y="64.0" width="3" height="3" fill="#5d5750"/><rect x="83.5" y="49.0" width="3" height="3" fill="#5d5750"/><rect x="83.5" y="64.0" width="3" height="3" fill="#5d5750"/><rect x="42.5" y="42.5" width="3" height="3" fill="#5d5750"/><rect x="74.5" y="42.5" width="3" height="3" fill="#5d5750"/><rect x="42.5" y="70.5" width="3" height="3" fill="#5d5750"/><rect x="74.5" y="70.5" width="3" height="3" fill="#5d5750"/></g></svg><h3 style="letter-spacing:1.0px">Outlaw Sprinter</h3><svg class="ico" style="left:125px;top:44.8px" width="15" height="15" viewBox="0 0 15 15"><circle cx="7.5" cy="7.5" r="6.6" fill="#f7d52f" stroke="#16152a" stroke-width="1.2"/><circle cx="7.5" cy="7.5" r="5.2" fill="none" stroke="#fbe25a" stroke-width="1"/><path d="M7.5 3 Q8.1 6.9 12 7.5 Q8.1 8.1 7.5 12 Q6.9 8.1 3 7.5 Q6.9 6.9 7.5 3Z" fill="#0c0c14"/></svg><span class="st" style="left:145px;top:45px">5,200</span><svg class="ico" style="left:234.5px;top:44.8px" width="15" height="15" viewBox="0 0 15 15"><path d="M7.5 0.4 L14.3 3.8 L14.3 11.2 L7.5 14.6 L0.7 11.2 L0.7 3.8Z" fill="#74b0f6" stroke="#74b0f6" stroke-width=".8" stroke-linejoin="round"/><path d="M7.5 0.4 L14.3 3.8 L7.5 7.3 L0.7 3.8Z" fill="#90c6ff"/><path d="M7.5 7.3 L14.3 3.8 L14.3 11.2 L7.5 14.6Z" fill="#6ca8f2"/><path d="M0.9 3.9 L7.5 7.3 L14.1 3.9 M7.5 7.3 L7.5 14.4" fill="none" stroke="#2b4b7c" stroke-width="1"/></svg><span class="st" style="left:255px;top:45px">100</span><svg class="ico" style="left:316px;top:44.8px" width="14" height="16" viewBox="0 0 14 16"><path d="M7 0.8 C8.6 2 10.8 2.3 13 2.3 L13 8 C13 11.6 10.4 14 7 15.3 C3.6 14 1 11.6 1 8 L1 2.3 C3.2 2.3 5.4 2 7 0.8Z" fill="#fff"/></svg><span class="st" style="left:335px;top:45px">800</span><svg class="ico" style="left:125px;top:69.5px" width="15" height="16" viewBox="0 0 15 15.5"><polygon points="7.5,0.7 13.6,4.2 13.6,11.3 7.5,14.8 1.4,11.3 1.4,4.2" fill="#8e8c8e" stroke="#d8d8d8" stroke-width="1.3" stroke-linejoin="round"/></svg><span class="st" style="left:145px;top:70px">3</span><svg class="ico" style="left:179px;top:69.5px" width="15" height="16" viewBox="0 0 15 15.5"><polygon points="7.5,0.7 13.6,4.2 13.6,11.3 7.5,14.8 1.4,11.3 1.4,4.2" fill="#1f8c78" stroke="#3fd0b4" stroke-width="1.3" stroke-linejoin="round"/></svg><span class="st" style="left:199px;top:70px">2</span><svg class="ico" style="left:233px;top:69.5px" width="15" height="16" viewBox="0 0 15 15.5"><polygon points="7.5,0.7 13.6,4.2 13.6,11.3 7.5,14.8 1.4,11.3 1.4,4.2" fill="#9c1c28" stroke="#e03848" stroke-width="1.3" stroke-linejoin="round"/></svg><span class="st" style="left:253px;top:70px">2</span><svg class="ico" style="left:287px;top:69.5px" width="15" height="16" viewBox="0 0 15 15.5"><polygon points="7.5,0.7 13.6,4.2 13.6,11.3 7.5,14.8 1.4,11.3 1.4,4.2" fill="#7a58a8" stroke="#b08ce0" stroke-width="1.3" stroke-linejoin="round"/></svg><span class="st" style="left:307px;top:70px">1</span><svg class="ico" style="left:341px;top:69.5px" width="15" height="16" viewBox="0 0 15 15.5"><polygon points="7.5,0.7 13.6,4.2 13.6,11.3 7.5,14.8 1.4,11.3 1.4,4.2" fill="#8f7c1c" stroke="#d8c030" stroke-width="1.3" stroke-linejoin="round"/></svg><span class="st" style="left:361px;top:70px">1</span><div class="bb">Build</div></div><div class="item" style="top:165px"><svg class="ico" style="left:0;top:0" width="120" height="120" viewBox="0 0 120 120"><g filter="url(#stex)"><path d="M52 14 L68 14 L71 22 L74 40 L74 70 L72 76 L74 100 L70 107 L50 107 L46 100 L48 76 L46 70 L46 40 L49 22Z" fill="#958b85"/><path d="M24 28 L37 28 L38 45 L39 62 L37 79 L25 79 L23 62 L22 45Z" fill="#958b85"/><path d="M96 28 L83 28 L82 45 L81 62 L83 79 L95 79 L97 62 L98 45Z" fill="#958b85"/><rect x="37" y="40" width="10" height="27" fill="#857c76"/><rect x="73" y="40" width="10" height="27" fill="#857c76"/><path d="M60 26 L64 34 L65 60 L63 100 L57 100 L55 60 L56 34Z" fill="#3e3b3d"/><path d="M60 60 L63 66 L62 78 L58 78 L57 66Z" fill="#c4bab0"/><rect x="57.5" y="32" width="5" height="10" rx="2" fill="#958b85"/><path d="M52 18 L50 60 M68 18 L70 60" stroke="#c4bab0" stroke-width="2"/><path d="M50 80 L50 104 M70 80 L70 104 M54 84 L54 104 M66 84 L66 104" stroke="#3e3b3d" stroke-width="1.5"/><ellipse cx="31" cy="53" rx="4" ry="2.5" fill="#3e3b3d"/><ellipse cx="89" cy="53" rx="4" ry="2.5" fill="#3e3b3d"/><path d="M24 66 L37 66 M83 66 L96 66 M30 70 L30 79 M90 70 L90 79" stroke="#3e3b3d" stroke-width="1.4"/></g></svg><h3 style="letter-spacing:1.45px">Outlaw Nomad</h3><svg class="ico" style="left:125px;top:44.8px" width="15" height="15" viewBox="0 0 15 15"><circle cx="7.5" cy="7.5" r="6.6" fill="#f7d52f" stroke="#16152a" stroke-width="1.2"/><circle cx="7.5" cy="7.5" r="5.2" fill="none" stroke="#fbe25a" stroke-width="1"/><path d="M7.5 3 Q8.1 6.9 12 7.5 Q8.1 8.1 7.5 12 Q6.9 8.1 3 7.5 Q6.9 6.9 7.5 3Z" fill="#0c0c14"/></svg><span class="st" style="left:145px;top:45px">8,500</span><svg class="ico" style="left:234.5px;top:44.8px" width="15" height="15" viewBox="0 0 15 15"><path d="M7.5 0.4 L14.3 3.8 L14.3 11.2 L7.5 14.6 L0.7 11.2 L0.7 3.8Z" fill="#74b0f6" stroke="#74b0f6" stroke-width=".8" stroke-linejoin="round"/><path d="M7.5 0.4 L14.3 3.8 L7.5 7.3 L0.7 3.8Z" fill="#90c6ff"/><path d="M7.5 7.3 L14.3 3.8 L14.3 11.2 L7.5 14.6Z" fill="#6ca8f2"/><path d="M0.9 3.9 L7.5 7.3 L14.1 3.9 M7.5 7.3 L7.5 14.4" fill="none" stroke="#2b4b7c" stroke-width="1"/></svg><span class="st" style="left:255px;top:45px">70</span><svg class="ico" style="left:316px;top:44.8px" width="14" height="16" viewBox="0 0 14 16"><path d="M7 0.8 C8.6 2 10.8 2.3 13 2.3 L13 8 C13 11.6 10.4 14 7 15.3 C3.6 14 1 11.6 1 8 L1 2.3 C3.2 2.3 5.4 2 7 0.8Z" fill="#fff"/></svg><span class="st" style="left:335px;top:45px">1,200</span><svg class="ico" style="left:125px;top:69.5px" width="15" height="16" viewBox="0 0 15 15.5"><polygon points="7.5,0.7 13.6,4.2 13.6,11.3 7.5,14.8 1.4,11.3 1.4,4.2" fill="#8e8c8e" stroke="#d8d8d8" stroke-width="1.3" stroke-linejoin="round"/></svg><span class="st" style="left:145px;top:70px">2</span><svg class="ico" style="left:179px;top:69.5px" width="15" height="16" viewBox="0 0 15 15.5"><polygon points="7.5,0.7 13.6,4.2 13.6,11.3 7.5,14.8 1.4,11.3 1.4,4.2" fill="#1f8c78" stroke="#3fd0b4" stroke-width="1.3" stroke-linejoin="round"/></svg><span class="st" style="left:199px;top:70px">0</span><svg class="ico" style="left:233px;top:69.5px" width="15" height="16" viewBox="0 0 15 15.5"><polygon points="7.5,0.7 13.6,4.2 13.6,11.3 7.5,14.8 1.4,11.3 1.4,4.2" fill="#9c1c28" stroke="#e03848" stroke-width="1.3" stroke-linejoin="round"/></svg><span class="st" style="left:253px;top:70px">2</span><svg class="ico" style="left:287px;top:69.5px" width="15" height="16" viewBox="0 0 15 15.5"><polygon points="7.5,0.7 13.6,4.2 13.6,11.3 7.5,14.8 1.4,11.3 1.4,4.2" fill="#7a58a8" stroke="#b08ce0" stroke-width="1.3" stroke-linejoin="round"/></svg><span class="st" style="left:307px;top:70px">1</span><svg class="ico" style="left:341px;top:69.5px" width="15" height="16" viewBox="0 0 15 15.5"><polygon points="7.5,0.7 13.6,4.2 13.6,11.3 7.5,14.8 1.4,11.3 1.4,4.2" fill="#8f7c1c" stroke="#d8c030" stroke-width="1.3" stroke-linejoin="round"/></svg><span class="st" style="left:361px;top:70px">1</span><div class="bb">Build</div></div><div class="item" style="top:290px"><svg class="ico" style="left:0;top:0" width="120" height="120" viewBox="0 0 120 120"><g filter="url(#stex)"><path d="M56 11 L64 11 L67 24 L70 38 L71 50 L76 36 L84 36 L89 46 L90 70 L84 80 L78 92 L70 100 L66 108 L54 108 L50 100 L42 92 L36 80 L29 70 L30 46 L35 36 L43 36 L49 50 L50 38 L53 24Z" fill="#8f8a86"/><path d="M60 22 L63 30 L64 52 L56 52 L57 30Z" fill="#3f4450"/><path d="M30 58 L90 58" stroke="#3f4450" stroke-width="3"/><path d="M40 66 L80 66" stroke="#c2b8ac" stroke-width="2.5"/><circle cx="60" cy="60" r="4.5" fill="#3f4450"/><circle cx="60" cy="60" r="2" fill="#7e8694"/><path d="M60 66 L60 100" stroke="#3f4450" stroke-width="3"/><path d="M53 16 L50 48 M67 16 L70 48" stroke="#c2b8ac" stroke-width="2"/><path d="M34 50 L44 50 M76 50 L86 50" stroke="#3f4450" stroke-width="2.5"/><path d="M40 78 L52 92 M80 78 L68 92 M44 84 L40 88 M76 84 L80 88" stroke="#3f4450" stroke-width="2.5"/><path d="M55 96 L65 96" stroke="#3f4450" stroke-width="3"/><rect x="32" y="40" width="9" height="8" fill="#c2b8ac"/><rect x="79" y="40" width="9" height="8" fill="#c2b8ac"/></g></svg><h3 style="letter-spacing:0.8px">Charon Smuggler</h3><svg class="ico" style="left:125px;top:44.8px" width="15" height="15" viewBox="0 0 15 15"><circle cx="7.5" cy="7.5" r="6.6" fill="#f7d52f" stroke="#16152a" stroke-width="1.2"/><circle cx="7.5" cy="7.5" r="5.2" fill="none" stroke="#fbe25a" stroke-width="1"/><path d="M7.5 3 Q8.1 6.9 12 7.5 Q8.1 8.1 7.5 12 Q6.9 8.1 3 7.5 Q6.9 6.9 7.5 3Z" fill="#0c0c14"/></svg><span class="st" style="left:145px;top:45px">17,400</span><svg class="ico" style="left:234.5px;top:44.8px" width="15" height="15" viewBox="0 0 15 15"><path d="M7.5 0.4 L14.3 3.8 L14.3 11.2 L7.5 14.6 L0.7 11.2 L0.7 3.8Z" fill="#74b0f6" stroke="#74b0f6" stroke-width=".8" stroke-linejoin="round"/><path d="M7.5 0.4 L14.3 3.8 L7.5 7.3 L0.7 3.8Z" fill="#90c6ff"/><path d="M7.5 7.3 L14.3 3.8 L14.3 11.2 L7.5 14.6Z" fill="#6ca8f2"/><path d="M0.9 3.9 L7.5 7.3 L14.1 3.9 M7.5 7.3 L7.5 14.4" fill="none" stroke="#2b4b7c" stroke-width="1"/></svg><span class="st" style="left:255px;top:45px">200</span><svg class="ico" style="left:316px;top:44.8px" width="14" height="16" viewBox="0 0 14 16"><path d="M7 0.8 C8.6 2 10.8 2.3 13 2.3 L13 8 C13 11.6 10.4 14 7 15.3 C3.6 14 1 11.6 1 8 L1 2.3 C3.2 2.3 5.4 2 7 0.8Z" fill="#fff"/></svg><span class="st" style="left:335px;top:45px">1,500</span><svg class="ico" style="left:125px;top:69.5px" width="15" height="16" viewBox="0 0 15 15.5"><polygon points="7.5,0.7 13.6,4.2 13.6,11.3 7.5,14.8 1.4,11.3 1.4,4.2" fill="#8e8c8e" stroke="#d8d8d8" stroke-width="1.3" stroke-linejoin="round"/></svg><span class="st" style="left:145px;top:70px">3</span><svg class="ico" style="left:179px;top:69.5px" width="15" height="16" viewBox="0 0 15 15.5"><polygon points="7.5,0.7 13.6,4.2 13.6,11.3 7.5,14.8 1.4,11.3 1.4,4.2" fill="#1f8c78" stroke="#3fd0b4" stroke-width="1.3" stroke-linejoin="round"/></svg><span class="st" style="left:199px;top:70px">3</span><svg class="ico" style="left:233px;top:69.5px" width="15" height="16" viewBox="0 0 15 15.5"><polygon points="7.5,0.7 13.6,4.2 13.6,11.3 7.5,14.8 1.4,11.3 1.4,4.2" fill="#9c1c28" stroke="#e03848" stroke-width="1.3" stroke-linejoin="round"/></svg><span class="st" style="left:253px;top:70px">2</span><svg class="ico" style="left:287px;top:69.5px" width="15" height="16" viewBox="0 0 15 15.5"><polygon points="7.5,0.7 13.6,4.2 13.6,11.3 7.5,14.8 1.4,11.3 1.4,4.2" fill="#7a58a8" stroke="#b08ce0" stroke-width="1.3" stroke-linejoin="round"/></svg><span class="st" style="left:307px;top:70px">2</span><svg class="ico" style="left:341px;top:69.5px" width="15" height="16" viewBox="0 0 15 15.5"><polygon points="7.5,0.7 13.6,4.2 13.6,11.3 7.5,14.8 1.4,11.3 1.4,4.2" fill="#8f7c1c" stroke="#d8c030" stroke-width="1.3" stroke-linejoin="round"/></svg><span class="st" style="left:361px;top:70px">1</span><div class="bb">Build</div></div><div class="item" style="top:415px"><svg class="ico" style="left:0;top:0" width="120" height="120" viewBox="0 0 120 120"><g filter="url(#stex)"><path d="M44 40 L44 28 Q44 11 60 11 Q76 11 76 28 L76 40 L69 40 L69 29 Q69 20 60 20 Q51 20 51 29 L51 40Z" fill="#97a7ba"/><path d="M60 22 Q66 24 66 34 L67 46 L53 46 L54 34 Q54 24 60 22Z" fill="#c9d5e3"/><path d="M51.0 28.0L44.0 28.0" stroke="#20242e" stroke-width="1"/><path d="M52.2 23.5L46.1 19.5" stroke="#20242e" stroke-width="1"/><path d="M55.5 20.2L52.0 13.3" stroke="#20242e" stroke-width="1"/><path d="M60.0 19.0L60.0 11.0" stroke="#20242e" stroke-width="1"/><path d="M64.5 20.2L68.0 13.3" stroke="#20242e" stroke-width="1"/><path d="M67.8 23.5L73.9 19.5" stroke="#20242e" stroke-width="1"/><path d="M69.0 28.0L76.0 28.0" stroke="#20242e" stroke-width="1"/><rect x="53" y="42" width="14" height="48" fill="#97a7ba"/><rect x="37" y="49" width="46" height="9" fill="#97a7ba"/><rect x="37" y="66" width="46" height="9" fill="#97a7ba"/><rect x="40" y="58" width="40" height="8" fill="#5f6876"/><rect x="33" y="45" width="6" height="15" fill="#97a7ba"/><rect x="33" y="63" width="6" height="16" fill="#97a7ba"/><rect x="82" y="45" width="6" height="15" fill="#97a7ba"/><rect x="82" y="63" width="6" height="16" fill="#97a7ba"/><circle cx="42" cy="53.5" r="2" fill="#20242e"/><circle cx="42" cy="70.5" r="2" fill="#20242e"/><circle cx="48" cy="53.5" r="2" fill="#20242e"/><circle cx="48" cy="70.5" r="2" fill="#20242e"/><circle cx="72" cy="53.5" r="2" fill="#20242e"/><circle cx="72" cy="70.5" r="2" fill="#20242e"/><circle cx="78" cy="53.5" r="2" fill="#20242e"/><circle cx="78" cy="70.5" r="2" fill="#20242e"/><path d="M60 44 L60 88" stroke="#20242e" stroke-width="2.5" stroke-dasharray="2.5 2"/><path d="M40 62 L80 62" stroke="#20242e" stroke-width="2" stroke-dasharray="3 3"/><path d="M43 58 L43 66 M50 58 L50 66 M70 58 L70 66 M77 58 L77 66" stroke="#a08c78" stroke-width="2"/><path d="M37 58 L83 58 M37 66 L83 66" stroke="#20242e" stroke-width="1.2"/><path d="M53 46 L53 88 M67 46 L67 88" stroke="#20242e" stroke-width="1.2"/><path d="M44 80 L44 92 Q44 109 60 109 Q76 109 76 92 L76 80 L69 80 L69 91 Q69 100 60 100 Q51 100 51 91 L51 80Z" fill="#97a7ba"/><path d="M60 98 Q66 96 66 88 L66 76 L54 76 L54 88 Q54 96 60 98Z" fill="#c9d5e3"/><path d="M60 78 L60 96" stroke="#20242e" stroke-width="3"/><path d="M69.0 92.0L76.0 92.0" stroke="#20242e" stroke-width="1"/><path d="M67.8 96.5L73.9 100.5" stroke="#20242e" stroke-width="1"/><path d="M64.5 99.8L68.0 106.7" stroke="#20242e" stroke-width="1"/><path d="M60.0 101.0L60.0 109.0" stroke="#20242e" stroke-width="1"/><path d="M55.5 99.8L52.0 106.7" stroke="#20242e" stroke-width="1"/><path d="M52.2 96.5L46.1 100.5" stroke="#20242e" stroke-width="1"/><path d="M51.0 92.0L44.0 92.0" stroke="#20242e" stroke-width="1"/><rect x="57.5" y="104" width="1.6" height="5" fill="#20242e"/><rect x="61" y="104" width="1.6" height="5" fill="#20242e"/></g></svg><h3 style="letter-spacing:1.42px">Hypatia B</h3><svg class="ico" style="left:125px;top:44.8px" width="15" height="15" viewBox="0 0 15 15"><circle cx="7.5" cy="7.5" r="6.6" fill="#f7d52f" stroke="#16152a" stroke-width="1.2"/><circle cx="7.5" cy="7.5" r="5.2" fill="none" stroke="#fbe25a" stroke-width="1"/><path d="M7.5 3 Q8.1 6.9 12 7.5 Q8.1 8.1 7.5 12 Q6.9 8.1 3 7.5 Q6.9 6.9 7.5 3Z" fill="#0c0c14"/></svg><span class="st" style="left:145px;top:45px">27,000</span><svg class="ico" style="left:234.5px;top:44.8px" width="15" height="15" viewBox="0 0 15 15"><path d="M7.5 0.4 L14.3 3.8 L14.3 11.2 L7.5 14.6 L0.7 11.2 L0.7 3.8Z" fill="#74b0f6" stroke="#74b0f6" stroke-width=".8" stroke-linejoin="round"/><path d="M7.5 0.4 L14.3 3.8 L7.5 7.3 L0.7 3.8Z" fill="#90c6ff"/><path d="M7.5 7.3 L14.3 3.8 L14.3 11.2 L7.5 14.6Z" fill="#6ca8f2"/><path d="M0.9 3.9 L7.5 7.3 L14.1 3.9 M7.5 7.3 L7.5 14.4" fill="none" stroke="#2b4b7c" stroke-width="1"/></svg><span class="st" style="left:255px;top:45px">200</span><svg class="ico" style="left:316px;top:44.8px" width="14" height="16" viewBox="0 0 14 16"><path d="M7 0.8 C8.6 2 10.8 2.3 13 2.3 L13 8 C13 11.6 10.4 14 7 15.3 C3.6 14 1 11.6 1 8 L1 2.3 C3.2 2.3 5.4 2 7 0.8Z" fill="#fff"/></svg><span class="st" style="left:335px;top:45px">1,750</span><svg class="ico" style="left:125px;top:69.5px" width="15" height="16" viewBox="0 0 15 15.5"><polygon points="7.5,0.7 13.6,4.2 13.6,11.3 7.5,14.8 1.4,11.3 1.4,4.2" fill="#8e8c8e" stroke="#d8d8d8" stroke-width="1.3" stroke-linejoin="round"/></svg><span class="st" style="left:145px;top:70px">6</span><svg class="ico" style="left:179px;top:69.5px" width="15" height="16" viewBox="0 0 15 15.5"><polygon points="7.5,0.7 13.6,4.2 13.6,11.3 7.5,14.8 1.4,11.3 1.4,4.2" fill="#1f8c78" stroke="#3fd0b4" stroke-width="1.3" stroke-linejoin="round"/></svg><span class="st" style="left:199px;top:70px">3</span><svg class="ico" style="left:233px;top:69.5px" width="15" height="16" viewBox="0 0 15 15.5"><polygon points="7.5,0.7 13.6,4.2 13.6,11.3 7.5,14.8 1.4,11.3 1.4,4.2" fill="#9c1c28" stroke="#e03848" stroke-width="1.3" stroke-linejoin="round"/></svg><span class="st" style="left:253px;top:70px">2</span><svg class="ico" style="left:287px;top:69.5px" width="15" height="16" viewBox="0 0 15 15.5"><polygon points="7.5,0.7 13.6,4.2 13.6,11.3 7.5,14.8 1.4,11.3 1.4,4.2" fill="#7a58a8" stroke="#b08ce0" stroke-width="1.3" stroke-linejoin="round"/></svg><span class="st" style="left:307px;top:70px">1</span><svg class="ico" style="left:341px;top:69.5px" width="15" height="16" viewBox="0 0 15 15.5"><polygon points="7.5,0.7 13.6,4.2 13.6,11.3 7.5,14.8 1.4,11.3 1.4,4.2" fill="#8f7c1c" stroke="#d8c030" stroke-width="1.3" stroke-linejoin="round"/></svg><span class="st" style="left:361px;top:70px">1</span><div class="bb">Build</div></div><div class="item" style="top:540px"><svg class="ico" style="left:0;top:0" width="120" height="120" viewBox="0 0 120 120"><g filter="url(#stex)"><circle cx="37.8" cy="47.8" r="10.5" fill="#8a7365"/><circle cx="37.8" cy="47.8" r="7" fill="#54484a"/><circle cx="37.8" cy="47.8" r="3.2" fill="#26242a"/><circle cx="37.8" cy="47.8" r="1.2" fill="#8a7365"/><circle cx="82.2" cy="47.8" r="10.5" fill="#8a7365"/><circle cx="82.2" cy="47.8" r="7" fill="#54484a"/><circle cx="82.2" cy="47.8" r="3.2" fill="#26242a"/><circle cx="82.2" cy="47.8" r="1.2" fill="#8a7365"/><circle cx="37.8" cy="71" r="10.5" fill="#8a7365"/><circle cx="37.8" cy="71" r="7" fill="#54484a"/><circle cx="37.8" cy="71" r="3.2" fill="#26242a"/><circle cx="37.8" cy="71" r="1.2" fill="#8a7365"/><circle cx="82.2" cy="71" r="10.5" fill="#8a7365"/><circle cx="82.2" cy="71" r="7" fill="#54484a"/><circle cx="82.2" cy="71" r="3.2" fill="#26242a"/><circle cx="82.2" cy="71" r="1.2" fill="#8a7365"/><circle cx="46" cy="33" r="5.6" fill="#8a7365"/><circle cx="46" cy="33" r="2.5" fill="#5c4f4c"/><circle cx="74" cy="33" r="5.6" fill="#8a7365"/><circle cx="74" cy="33" r="2.5" fill="#5c4f4c"/><circle cx="46" cy="88" r="5.6" fill="#8a7365"/><circle cx="46" cy="88" r="2.5" fill="#5c4f4c"/><circle cx="74" cy="88" r="5.6" fill="#8a7365"/><circle cx="74" cy="88" r="2.5" fill="#5c4f4c"/><path d="M57 11 L63 11 L66 16 L67 30 L69 44 L70 52 L68 60 L70 68 L69 80 L67 92 L66 104 L63 109 L57 109 L54 104 L53 92 L51 80 L50 68 L52 60 L50 52 L51 44 L53 30 L54 16Z" fill="#8a7365"/><path d="M60 14 L60 106" stroke="#26242a" stroke-width="2" stroke-dasharray="4 3"/><path d="M56 26 L64 26 L63 31 L57 31Z" fill="#26242a"/><path d="M60 34 L64 40 L64 56 L56 56 L56 40Z" fill="#b79a84"/><path d="M56 62 L64 62 L64 86 L56 86Z" fill="#75655e"/><path d="M48 47 L72 47" stroke="#8a7365" stroke-width="5"/><path d="M50 78 L70 78" stroke="#8a7365" stroke-width="5"/><rect x="48.1" y="52" width="1.8" height="6" fill="#d9824e"/><rect x="69.1" y="52" width="1.8" height="6" fill="#d9824e"/><rect x="48.1" y="63" width="1.8" height="5" fill="#d9824e"/><rect x="69.1" y="63" width="1.8" height="5" fill="#d9824e"/><rect x="50.1" y="68" width="1.8" height="6" fill="#d9824e"/><rect x="67.1" y="68" width="1.8" height="6" fill="#d9824e"/><rect x="52.1" y="95" width="1.8" height="6" fill="#d9824e"/><rect x="65.1" y="95" width="1.8" height="6" fill="#d9824e"/><rect x="52.1" y="16" width="1.8" height="5" fill="#d9824e"/><rect x="65.1" y="16" width="1.8" height="5" fill="#d9824e"/></g></svg><h3 style="letter-spacing:1.06px">Atlas Carrier</h3><svg class="ico" style="left:125px;top:44.8px" width="15" height="15" viewBox="0 0 15 15"><circle cx="7.5" cy="7.5" r="6.6" fill="#f7d52f" stroke="#16152a" stroke-width="1.2"/><circle cx="7.5" cy="7.5" r="5.2" fill="none" stroke="#fbe25a" stroke-width="1"/><path d="M7.5 3 Q8.1 6.9 12 7.5 Q8.1 8.1 7.5 12 Q6.9 8.1 3 7.5 Q6.9 6.9 7.5 3Z" fill="#0c0c14"/></svg><span class="st" style="left:145px;top:45px">135,000</span><svg class="ico" style="left:234.5px;top:44.8px" width="15" height="15" viewBox="0 0 15 15"><path d="M7.5 0.4 L14.3 3.8 L14.3 11.2 L7.5 14.6 L0.7 11.2 L0.7 3.8Z" fill="#74b0f6" stroke="#74b0f6" stroke-width=".8" stroke-linejoin="round"/><path d="M7.5 0.4 L14.3 3.8 L7.5 7.3 L0.7 3.8Z" fill="#90c6ff"/><path d="M7.5 7.3 L14.3 3.8 L14.3 11.2 L7.5 14.6Z" fill="#6ca8f2"/><path d="M0.9 3.9 L7.5 7.3 L14.1 3.9 M7.5 7.3 L7.5 14.4" fill="none" stroke="#2b4b7c" stroke-width="1"/></svg><span class="st" style="left:255px;top:45px">420</span><svg class="ico" style="left:316px;top:44.8px" width="14" height="16" viewBox="0 0 14 16"><path d="M7 0.8 C8.6 2 10.8 2.3 13 2.3 L13 8 C13 11.6 10.4 14 7 15.3 C3.6 14 1 11.6 1 8 L1 2.3 C3.2 2.3 5.4 2 7 0.8Z" fill="#fff"/></svg><span class="st" style="left:335px;top:45px">2,400</span><svg class="ico" style="left:125px;top:69.5px" width="15" height="16" viewBox="0 0 15 15.5"><polygon points="7.5,0.7 13.6,4.2 13.6,11.3 7.5,14.8 1.4,11.3 1.4,4.2" fill="#8e8c8e" stroke="#d8d8d8" stroke-width="1.3" stroke-linejoin="round"/></svg><span class="st" style="left:145px;top:70px">4</span><svg class="ico" style="left:179px;top:69.5px" width="15" height="16" viewBox="0 0 15 15.5"><polygon points="7.5,0.7 13.6,4.2 13.6,11.3 7.5,14.8 1.4,11.3 1.4,4.2" fill="#1f8c78" stroke="#3fd0b4" stroke-width="1.3" stroke-linejoin="round"/></svg><span class="st" style="left:199px;top:70px">6</span><svg class="ico" style="left:233px;top:69.5px" width="15" height="16" viewBox="0 0 15 15.5"><polygon points="7.5,0.7 13.6,4.2 13.6,11.3 7.5,14.8 1.4,11.3 1.4,4.2" fill="#9c1c28" stroke="#e03848" stroke-width="1.3" stroke-linejoin="round"/></svg><span class="st" style="left:253px;top:70px">2</span><svg class="ico" style="left:287px;top:69.5px" width="15" height="16" viewBox="0 0 15 15.5"><polygon points="7.5,0.7 13.6,4.2 13.6,11.3 7.5,14.8 1.4,11.3 1.4,4.2" fill="#7a58a8" stroke="#b08ce0" stroke-width="1.3" stroke-linejoin="round"/></svg><span class="st" style="left:307px;top:70px">1</span><svg class="ico" style="left:341px;top:69.5px" width="15" height="16" viewBox="0 0 15 15.5"><polygon points="7.5,0.7 13.6,4.2 13.6,11.3 7.5,14.8 1.4,11.3 1.4,4.2" fill="#8f7c1c" stroke="#d8c030" stroke-width="1.3" stroke-linejoin="round"/></svg><span class="st" style="left:361px;top:70px">1</span><div class="bb">Build</div></div><div class="item" style="top:665px"><svg class="ico" style="left:0;top:0" width="120" height="120" viewBox="0 0 120 120"><g filter="url(#stex)"><path d="M42 29 L24 29 Q11 29 11 42 L11 76 Q11 90 24 90 L42 90Z" fill="#8e9097"/><path d="M78 29 L96 29 Q109 29 109 42 L109 76 Q109 90 96 90 L78 90Z" fill="#8e9097"/><path d="M14 36 L46 36 M74 36 L106 36" stroke="#2b2e38" stroke-width="2.2"/><path d="M14 43 L46 43 M74 43 L106 43" stroke="#2b2e38" stroke-width="2.2"/><path d="M14 50 L46 50 M74 50 L106 50" stroke="#2b2e38" stroke-width="2.2"/><path d="M14 57 L46 57 M74 57 L106 57" stroke="#2b2e38" stroke-width="2.2"/><path d="M14 64 L46 64 M74 64 L106 64" stroke="#2b2e38" stroke-width="2.2"/><path d="M14 71 L46 71 M74 71 L106 71" stroke="#2b2e38" stroke-width="2.2"/><path d="M14 78 L46 78 M74 78 L106 78" stroke="#2b2e38" stroke-width="2.2"/><path d="M14 84 L46 84 M74 84 L106 84" stroke="#2b2e38" stroke-width="2.2"/><path d="M20 40 L44 40 M76 40 L100 40" stroke="#c6c8cd" stroke-width="2"/><path d="M20 47 L44 47 M76 47 L100 47" stroke="#c6c8cd" stroke-width="2"/><path d="M20 54 L44 54 M76 54 L100 54" stroke="#c6c8cd" stroke-width="2"/><path d="M20 61 L44 61 M76 61 L100 61" stroke="#c6c8cd" stroke-width="2"/><path d="M20 68 L44 68 M76 68 L100 68" stroke="#c6c8cd" stroke-width="2"/><path d="M20 75 L44 75 M76 75 L100 75" stroke="#c6c8cd" stroke-width="2"/><path d="M20 81 L44 81 M76 81 L100 81" stroke="#c6c8cd" stroke-width="2"/><rect x="42" y="14" width="9" height="24" rx="4" fill="#8e9097"/><rect x="69" y="14" width="9" height="24" rx="4" fill="#8e9097"/><rect x="42" y="82" width="9" height="24" rx="4" fill="#8e9097"/><rect x="69" y="82" width="9" height="24" rx="4" fill="#8e9097"/><rect x="53" y="12" width="14" height="96" rx="3" fill="#8e9097"/><rect x="58" y="16" width="4" height="88" fill="#5e6c84"/><path d="M46.5 18 L46.5 36 M73.5 18 L73.5 36 M46.5 86 L46.5 104 M73.5 86 L73.5 104" stroke="#2b2e38" stroke-width="1.5" stroke-dasharray="2 2"/><path d="M55 16 L55 104 M65 16 L65 104" stroke="#c6c8cd" stroke-width="1.5" stroke-dasharray="3 2"/><path d="M50 48 L70 70 M70 48 L50 70" stroke="#5e6c84" stroke-width="3.5"/><circle cx="60" cy="59" r="8" fill="#8e9097" stroke="#2b2e38" stroke-width="1.5"/><circle cx="60" cy="59" r="3.5" fill="#2b2e38"/><circle cx="60" cy="59" r="1.5" fill="#8e9097"/><rect x="30" y="52" width="3" height="3" fill="#d7a83e"/><rect x="84" y="52" width="3" height="3" fill="#d7a83e"/><rect x="27" y="52" width="3" height="3" fill="#4aa0e0"/></g></svg><h3 style="letter-spacing:1.25px">Cargo Titan</h3><svg class="ico" style="left:125px;top:44.8px" width="15" height="15" viewBox="0 0 15 15"><circle cx="7.5" cy="7.5" r="6.6" fill="#f7d52f" stroke="#16152a" stroke-width="1.2"/><circle cx="7.5" cy="7.5" r="5.2" fill="none" stroke="#fbe25a" stroke-width="1"/><path d="M7.5 3 Q8.1 6.9 12 7.5 Q8.1 8.1 7.5 12 Q6.9 8.1 3 7.5 Q6.9 6.9 7.5 3Z" fill="#0c0c14"/></svg><span class="st" style="left:145px;top:45px">570,000</span><svg class="ico" style="left:234.5px;top:44.8px" width="15" height="15" viewBox="0 0 15 15"><path d="M7.5 0.4 L14.3 3.8 L14.3 11.2 L7.5 14.6 L0.7 11.2 L0.7 3.8Z" fill="#74b0f6" stroke="#74b0f6" stroke-width=".8" stroke-linejoin="round"/><path d="M7.5 0.4 L14.3 3.8 L7.5 7.3 L0.7 3.8Z" fill="#90c6ff"/><path d="M7.5 7.3 L14.3 3.8 L14.3 11.2 L7.5 14.6Z" fill="#6ca8f2"/><path d="M0.9 3.9 L7.5 7.3 L14.1 3.9 M7.5 7.3 L7.5 14.4" fill="none" stroke="#2b4b7c" stroke-width="1"/></svg><span class="st" style="left:255px;top:45px">500</span><svg class="ico" style="left:316px;top:44.8px" width="14" height="16" viewBox="0 0 14 16"><path d="M7 0.8 C8.6 2 10.8 2.3 13 2.3 L13 8 C13 11.6 10.4 14 7 15.3 C3.6 14 1 11.6 1 8 L1 2.3 C3.2 2.3 5.4 2 7 0.8Z" fill="#fff"/></svg><span class="st" style="left:335px;top:45px">7,500</span><svg class="ico" style="left:125px;top:69.5px" width="15" height="16" viewBox="0 0 15 15.5"><polygon points="7.5,0.7 13.6,4.2 13.6,11.3 7.5,14.8 1.4,11.3 1.4,4.2" fill="#8e8c8e" stroke="#d8d8d8" stroke-width="1.3" stroke-linejoin="round"/></svg><span class="st" style="left:145px;top:70px">6</span><svg class="ico" style="left:179px;top:69.5px" width="15" height="16" viewBox="0 0 15 15.5"><polygon points="7.5,0.7 13.6,4.2 13.6,11.3 7.5,14.8 1.4,11.3 1.4,4.2" fill="#1f8c78" stroke="#3fd0b4" stroke-width="1.3" stroke-linejoin="round"/></svg><span class="st" style="left:199px;top:70px">10</span><svg class="ico" style="left:233px;top:69.5px" width="15" height="16" viewBox="0 0 15 15.5"><polygon points="7.5,0.7 13.6,4.2 13.6,11.3 7.5,14.8 1.4,11.3 1.4,4.2" fill="#9c1c28" stroke="#e03848" stroke-width="1.3" stroke-linejoin="round"/></svg><span class="st" style="left:253px;top:70px">3</span><svg class="ico" style="left:287px;top:69.5px" width="15" height="16" viewBox="0 0 15 15.5"><polygon points="7.5,0.7 13.6,4.2 13.6,11.3 7.5,14.8 1.4,11.3 1.4,4.2" fill="#7a58a8" stroke="#b08ce0" stroke-width="1.3" stroke-linejoin="round"/></svg><span class="st" style="left:307px;top:70px">6</span><svg class="ico" style="left:341px;top:69.5px" width="15" height="16" viewBox="0 0 15 15.5"><polygon points="7.5,0.7 13.6,4.2 13.6,11.3 7.5,14.8 1.4,11.3 1.4,4.2" fill="#8f7c1c" stroke="#d8c030" stroke-width="1.3" stroke-linejoin="round"/></svg><span class="st" style="left:361px;top:70px">1</span><div class="bb">Build</div></div><div class="item" style="top:790px"><svg class="ico" style="left:0;top:0" width="120" height="120" viewBox="0 0 120 120"><g filter="url(#stex)"><path d="M57 24 L63 24 L65 32 L67 46 L53 46 L55 32Z" fill="#c9d5e3"/><path d="M57 30 L63 30 M56 36 L64 36 M55 41 L65 41" stroke="#20242e" stroke-width="1.2"/><rect x="53" y="42" width="14" height="48" fill="#97a7ba"/><rect x="37" y="49" width="46" height="9" fill="#97a7ba"/><rect x="37" y="66" width="46" height="9" fill="#97a7ba"/><rect x="40" y="58" width="40" height="8" fill="#5f6876"/><rect x="33" y="45" width="6" height="15" fill="#97a7ba"/><rect x="33" y="63" width="6" height="16" fill="#97a7ba"/><rect x="82" y="45" width="6" height="15" fill="#97a7ba"/><rect x="82" y="63" width="6" height="16" fill="#97a7ba"/><circle cx="42" cy="53.5" r="2" fill="#20242e"/><circle cx="42" cy="70.5" r="2" fill="#20242e"/><circle cx="48" cy="53.5" r="2" fill="#20242e"/><circle cx="48" cy="70.5" r="2" fill="#20242e"/><circle cx="72" cy="53.5" r="2" fill="#20242e"/><circle cx="72" cy="70.5" r="2" fill="#20242e"/><circle cx="78" cy="53.5" r="2" fill="#20242e"/><circle cx="78" cy="70.5" r="2" fill="#20242e"/><path d="M60 44 L60 88" stroke="#20242e" stroke-width="2.5" stroke-dasharray="2.5 2"/><path d="M40 62 L80 62" stroke="#20242e" stroke-width="2" stroke-dasharray="3 3"/><path d="M43 58 L43 66 M50 58 L50 66 M70 58 L70 66 M77 58 L77 66" stroke="#a08c78" stroke-width="2"/><path d="M37 58 L83 58 M37 66 L83 66" stroke="#20242e" stroke-width="1.2"/><path d="M53 46 L53 88 M67 46 L67 88" stroke="#20242e" stroke-width="1.2"/><path d="M44 80 L44 92 Q44 109 60 109 Q76 109 76 92 L76 80 L69 80 L69 91 Q69 100 60 100 Q51 100 51 91 L51 80Z" fill="#97a7ba"/><path d="M60 98 Q66 96 66 88 L66 76 L54 76 L54 88 Q54 96 60 98Z" fill="#c9d5e3"/><path d="M60 78 L60 96" stroke="#20242e" stroke-width="3"/><path d="M69.0 92.0L76.0 92.0" stroke="#20242e" stroke-width="1"/><path d="M67.8 96.5L73.9 100.5" stroke="#20242e" stroke-width="1"/><path d="M64.5 99.8L68.0 106.7" stroke="#20242e" stroke-width="1"/><path d="M60.0 101.0L60.0 109.0" stroke="#20242e" stroke-width="1"/><path d="M55.5 99.8L52.0 106.7" stroke="#20242e" stroke-width="1"/><path d="M52.2 96.5L46.1 100.5" stroke="#20242e" stroke-width="1"/><path d="M51.0 92.0L44.0 92.0" stroke="#20242e" stroke-width="1"/><rect x="57.5" y="104" width="1.6" height="5" fill="#20242e"/><rect x="61" y="104" width="1.6" height="5" fill="#20242e"/></g></svg><h3 style="letter-spacing:1.5px">Hypatia A</h3><svg class="ico" style="left:125px;top:44.8px" width="15" height="15" viewBox="0 0 15 15"><circle cx="7.5" cy="7.5" r="6.6" fill="#f7d52f" stroke="#16152a" stroke-width="1.2"/><circle cx="7.5" cy="7.5" r="5.2" fill="none" stroke="#fbe25a" stroke-width="1"/><path d="M7.5 3 Q8.1 6.9 12 7.5 Q8.1 8.1 7.5 12 Q6.9 8.1 3 7.5 Q6.9 6.9 7.5 3Z" fill="#0c0c14"/></svg><span class="st" style="left:145px;top:45px">19,000</span><svg class="ico" style="left:234.5px;top:44.8px" width="15" height="15" viewBox="0 0 15 15"><path d="M7.5 0.4 L14.3 3.8 L14.3 11.2 L7.5 14.6 L0.7 11.2 L0.7 3.8Z" fill="#74b0f6" stroke="#74b0f6" stroke-width=".8" stroke-linejoin="round"/><path d="M7.5 0.4 L14.3 3.8 L7.5 7.3 L0.7 3.8Z" fill="#90c6ff"/><path d="M7.5 7.3 L14.3 3.8 L14.3 11.2 L7.5 14.6Z" fill="#6ca8f2"/><path d="M0.9 3.9 L7.5 7.3 L14.1 3.9 M7.5 7.3 L7.5 14.4" fill="none" stroke="#2b4b7c" stroke-width="1"/></svg><span class="st" style="left:255px;top:45px">140</span><svg class="ico" style="left:316px;top:44.8px" width="14" height="16" viewBox="0 0 14 16"><path d="M7 0.8 C8.6 2 10.8 2.3 13 2.3 L13 8 C13 11.6 10.4 14 7 15.3 C3.6 14 1 11.6 1 8 L1 2.3 C3.2 2.3 5.4 2 7 0.8Z" fill="#fff"/></svg><span class="st" style="left:335px;top:45px">1,550</span><svg class="ico" style="left:125px;top:69.5px" width="15" height="16" viewBox="0 0 15 15.5"><polygon points="7.5,0.7 13.6,4.2 13.6,11.3 7.5,14.8 1.4,11.3 1.4,4.2" fill="#8e8c8e" stroke="#d8d8d8" stroke-width="1.3" stroke-linejoin="round"/></svg><span class="st" style="left:145px;top:70px">4</span><svg class="ico" style="left:179px;top:69.5px" width="15" height="16" viewBox="0 0 15 15.5"><polygon points="7.5,0.7 13.6,4.2 13.6,11.3 7.5,14.8 1.4,11.3 1.4,4.2" fill="#1f8c78" stroke="#3fd0b4" stroke-width="1.3" stroke-linejoin="round"/></svg><span class="st" style="left:199px;top:70px">3</span><svg class="ico" style="left:233px;top:69.5px" width="15" height="16" viewBox="0 0 15 15.5"><polygon points="7.5,0.7 13.6,4.2 13.6,11.3 7.5,14.8 1.4,11.3 1.4,4.2" fill="#9c1c28" stroke="#e03848" stroke-width="1.3" stroke-linejoin="round"/></svg><span class="st" style="left:253px;top:70px">1</span><svg class="ico" style="left:287px;top:69.5px" width="15" height="16" viewBox="0 0 15 15.5"><polygon points="7.5,0.7 13.6,4.2 13.6,11.3 7.5,14.8 1.4,11.3 1.4,4.2" fill="#7a58a8" stroke="#b08ce0" stroke-width="1.3" stroke-linejoin="round"/></svg><span class="st" style="left:307px;top:70px">1</span><svg class="ico" style="left:341px;top:69.5px" width="15" height="16" viewBox="0 0 15 15.5"><polygon points="7.5,0.7 13.6,4.2 13.6,11.3 7.5,14.8 1.4,11.3 1.4,4.2" fill="#8f7c1c" stroke="#d8c030" stroke-width="1.3" stroke-linejoin="round"/></svg><span class="st" style="left:361px;top:70px">1</span><div class="bb">Build</div></div><div class="sb"></div></div>
<div id="menu"><div class="hdr" style="left:5px;width:200px;padding-right:5px">MENU</div><div class="mi" style="top:40px">Station</div><div class="mi" style="top:75px">Cargo hold</div><div class="mi" style="top:110px">Build ship</div><div class="mi" style="top:145px">Shipyard</div><div class="mi" style="top:180px">Research</div><div class="mi" style="top:215px">Galactic trade</div><div class="mi sel" style="top:250px">Black market</div><div class="mi" style="top:285px">Sectors</div><div class="mi" style="top:320px">Jump</div></div>
</body></html>
